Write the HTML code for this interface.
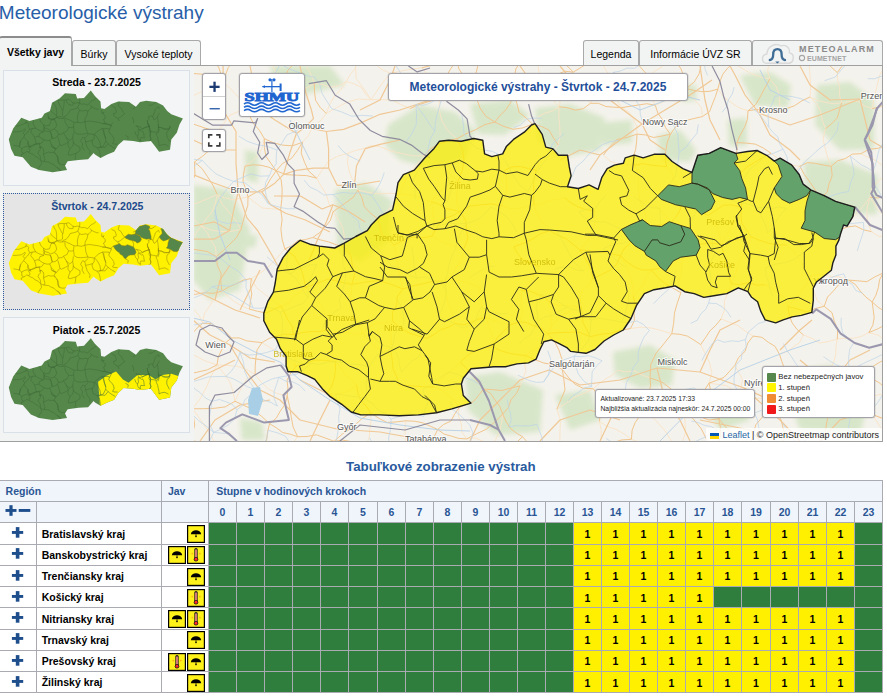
<!DOCTYPE html><html><head><meta charset="utf-8"><style>
*{margin:0;padding:0;box-sizing:border-box}
html,body{width:887px;height:697px;overflow:hidden;background:#fff;font-family:"Liberation Sans",sans-serif;color:#000}
.a{position:absolute}
h1{position:absolute;left:-1.2px;top:1.8px;font-size:19px;font-weight:normal;color:#285ea8;white-space:nowrap;line-height:22px}
.tab{position:absolute;border:1px solid #a9a9a9;border-bottom:none;border-radius:3px 3px 0 0;background:#f2f3f3;font-size:10.5px;text-align:center;white-space:nowrap}
.box{position:absolute;left:3px;width:187px;border:1px solid #d9e0e8;background:#f3f5f6}
.box .t{position:absolute;left:0;width:100%;text-align:center;font-weight:bold;font-size:10.5px;line-height:10.5px}
.lbar{position:absolute;background:#fff;border:1px solid #a2a2a8;border-radius:3px;box-shadow:0 0 0 0.6px rgba(0,0,0,0.12)}
.cell{position:absolute;}
</style></head><body>
<h1>Meteorologické výstrahy</h1>
<div class="tab" style="left:-1px;top:36px;width:73px;height:30px;border-top:2px solid #8c8c8c;z-index:3"><div class="a" style="left:0;width:100%;top:8.71px;line-height:10.5px;font-weight:bold">Všetky javy</div></div>
<div class="tab" style="left:72px;top:40px;width:44px;height:26px"><div class="a" style="left:0;width:100%;top:8.01px;line-height:10.5px;font-weight:normal">Búrky</div></div>
<div class="tab" style="left:116px;top:40px;width:85px;height:26px"><div class="a" style="left:0;width:100%;top:8.01px;line-height:10.5px;font-weight:normal">Vysoké teploty</div></div>
<div class="tab" style="left:583px;top:40px;width:56px;height:26px"><div class="a" style="left:0;width:100%;top:8.01px;line-height:10.5px;font-weight:normal">Legenda</div></div>
<div class="tab" style="left:639px;top:40px;width:113px;height:26px"><div class="a" style="left:0;width:100%;top:8.01px;line-height:10.5px;font-weight:normal">Informácie ÚVZ SR</div></div>
<div class="tab" style="left:752px;top:40px;width:131px;height:26px"></div>
<div class="a" style="left:0;top:65px;width:883px;height:1px;background:#a0a0a0;z-index:2"></div>
<div class="a" style="left:0;top:66px;width:194px;height:375px;background:#f2f3f3"></div>
<div class="a" style="left:0;top:440.5px;width:883px;height:1px;background:#a0a0a0;z-index:2"></div>
<div class="box" style="top:70px;height:116px"><div class="t" style="top:5.81px">Streda - 23.7.2025</div></div>
<div class="box" style="top:193px;height:117px;border:1px dotted #2f5aa0;background:#e5e5e5"><div class="t" style="top:6.51px;color:#204a8c;padding-left:1.6px">Štvrtok - 24.7.2025</div></div>
<div class="box" style="top:317px;height:116px"><div class="t" style="top:6.71px">Piatok - 25.7.2025</div></div>
<svg class="a" style="left:0;top:0" width="194" height="441" viewBox="0 0 194 441"><clipPath id="c0"><polygon points="8.8,139.5 13.2,128.6 21.3,117.7 29.5,121.1 41.8,117.7 44.5,113.6 50.0,110.9 52.0,102.7 59.5,98.6 65.0,93.2 75.8,93.9 77.2,98.6 84.0,97.9 90.8,90.4 94.9,95.9 100.5,101.4 101.1,108.2 104.5,108.9 111.4,104.1 118.2,101.4 129.1,102.0 135.9,106.8 140.0,102.0 146.1,100.7 156.3,102.0 163.1,105.4 167.2,110.9 171.3,114.3 182.9,118.4 179.5,124.5 176.8,132.7 171.3,139.5 170.0,149.7 159.1,151.8 155.0,146.3 150.9,140.9 140.0,142.2 133.2,140.9 123.6,140.2 118.2,145.0 114.1,151.8 107.3,154.5 100.5,157.9 95.0,154.5 93.6,153.1 88.1,159.3 78.6,159.9 67.7,161.3 65.0,165.4 67.0,170.1 52.7,172.2 39.1,170.1 30.9,166.7 22.7,157.2 14.5,155.8 11.1,149.0"/></clipPath><polygon points="8.8,139.5 13.2,128.6 21.3,117.7 29.5,121.1 41.8,117.7 44.5,113.6 50.0,110.9 52.0,102.7 59.5,98.6 65.0,93.2 75.8,93.9 77.2,98.6 84.0,97.9 90.8,90.4 94.9,95.9 100.5,101.4 101.1,108.2 104.5,108.9 111.4,104.1 118.2,101.4 129.1,102.0 135.9,106.8 140.0,102.0 146.1,100.7 156.3,102.0 163.1,105.4 167.2,110.9 171.3,114.3 182.9,118.4 179.5,124.5 176.8,132.7 171.3,139.5 170.0,149.7 159.1,151.8 155.0,146.3 150.9,140.9 140.0,142.2 133.2,140.9 123.6,140.2 118.2,145.0 114.1,151.8 107.3,154.5 100.5,157.9 95.0,154.5 93.6,153.1 88.1,159.3 78.6,159.9 67.7,161.3 65.0,165.4 67.0,170.1 52.7,172.2 39.1,170.1 30.9,166.7 22.7,157.2 14.5,155.8 11.1,149.0" fill="#56874a"/><g fill="none" stroke="#3f6b38" stroke-width="0.5" clip-path="url(#c0)"><polyline points="57.9,100.5 61.1,100.0 64.2,100.1 66.3,99.8 68.5,99.2 70.4,100.4 72.7,102.7 74.7,103.1 77.4,102.6 79.5,103.0 79.8,100.4 79.7,97.8"/><polyline points="79.5,103.0 81.4,104.2 84.6,104.0 87.6,105.2 90.1,102.3 91.8,100.9 93.6,100.1 96.0,98.2"/><polyline points="66.3,99.8 67.0,102.4 68.8,104.7 70.8,105.1 72.9,105.1 73.4,103.5 72.7,102.7"/><polyline points="64.2,100.1 64.2,103.7 63.5,106.8 62.9,110.4"/><polyline points="57.9,100.5 59.0,103.8 60.3,106.0 61.9,109.3 62.9,110.4 62.2,111.4 62.6,113.0 62.4,115.6 61.2,116.6 58.6,116.9 57.0,117.2"/><polyline points="53.5,101.7 54.2,104.3 56.0,107.1 56.6,110.4 56.7,115.6 57.0,117.2"/><polyline points="49.1,108.0 50.9,110.9 53.3,113.2 55.7,115.0 56.7,115.6"/><polyline points="57.0,117.2 59.0,118.5 62.1,118.5 65.3,118.0 67.8,119.3 70.8,120.6 72.8,121.8 75.4,122.5 77.5,122.2 81.6,122.8 84.9,121.7 89.5,121.0 92.2,121.4 98.4,122.3 103.1,123.7 105.7,123.9 112.0,125.6"/><polyline points="62.1,118.5 63.3,116.8 66.0,116.0 68.9,112.6 70.2,110.0 73.4,109.3 76.1,108.5 77.8,107.6 79.5,103.0"/><polyline points="77.8,107.6 79.6,110.3 81.6,111.0 83.8,110.7 85.9,110.3 87.9,111.0 89.0,110.2 90.9,108.2 91.6,106.7"/><polyline points="79.6,110.3 78.2,113.4 77.3,117.5 77.6,121.2 77.5,122.2"/><polyline points="87.9,111.0 87.0,115.1 85.1,118.6 84.9,121.7"/><polyline points="47.8,113.7 48.3,116.9 48.7,118.5 51.2,119.3 54.4,118.6 57.0,117.2"/><polyline points="89.7,105.0 91.6,106.7 93.5,107.9 96.6,109.2 98.6,109.3"/><polyline points="101.7,110.0 101.9,113.2 104.1,112.3 102.9,113.8 105.3,116.0 105.1,118.6 103.4,119.5 104.8,122.2 105.7,123.9"/><polyline points="111.3,105.5 112.8,106.6 114.8,107.3 115.6,109.4 116.4,111.5 115.7,113.1 113.5,113.4 113.8,115.5 115.8,117.2 117.8,118.4 120.6,117.0 124.7,113.6"/><polyline points="119.4,101.6 118.2,106.0 121.1,108.2 122.8,111.4 124.7,113.6"/><polyline points="132.8,108.8 135.6,107.4"/><polyline points="117.8,118.4 118.7,120.5 119.6,120.2"/><polyline points="133.5,123.4 133.6,120.3 132.3,117.1"/><polyline points="54.1,119.2 56.0,122.6 56.6,125.6 55.4,128.0 53.6,129.3 50.8,130.5 48.7,129.2 45.2,128.1 43.1,126.5"/><polyline points="54.1,119.2 51.2,120.0 50.3,122.8 49.5,125.3 45.9,126.0 43.4,124.6"/><polyline points="54.3,129.0 57.1,131.1 58.5,134.5 62.0,134.1 63.5,132.7 67.1,130.9 68.6,127.4 65.3,122.8 64.8,118.8"/><polyline points="68.6,127.4 71.5,127.6 73.6,127.1 73.9,122.8"/><polyline points="73.6,127.1 74.2,132.2 77.0,133.9 80.6,134.2 83.4,134.0 87.8,133.6 85.8,128.1 85.3,123.7 84.9,121.7"/><polyline points="87.8,133.6 94.2,134.5 95.7,133.1 98.7,130.4 102.4,128.5 108.9,128.7"/><polyline points="43.1,127.9 45.1,131.0 50.0,131.5 51.4,133.8 52.1,138.3"/><polyline points="57.7,136.6 59.2,141.1 59.9,144.8 61.4,145.7 65.6,143.8 68.4,141.9 66.2,137.3 63.5,132.7"/><polyline points="52.2,147.0 56.5,148.9 59.9,144.8"/><polyline points="66.2,137.3 69.8,140.5 72.7,137.9 73.4,132.9"/><polyline points="72.7,137.9 73.4,142.3 72.8,145.9 70.0,148.6 67.8,145.5 68.4,141.9"/><polyline points="70.0,148.6 68.7,152.1 68.1,154.6 70.3,155.1 75.9,153.4 80.0,150.8 79.9,147.2 77.0,145.5 74.1,143.8 73.4,142.3"/><polyline points="75.9,153.4 75.4,157.8 74.9,160.0"/><polyline points="82.7,137.2 80.5,140.7 82.7,143.8 82.0,146.6 84.3,150.4"/><polyline points="82.7,137.2 84.8,138.1 88.4,134.7"/><polyline points="84.8,138.1 85.5,141.8 87.1,147.0 90.1,151.5 89.5,154.4"/><polyline points="85.5,141.8 88.4,141.3 92.7,140.1 94.2,138.1 94.2,134.5"/><polyline points="92.7,140.1 92.0,142.2 93.5,146.0 97.1,147.7 100.7,147.2 99.9,142.1 97.8,138.3 95.6,135.3 94.2,134.5"/><polyline points="97.1,147.7 99.4,150.7 100.3,155.1 100.4,157.6"/><polyline points="100.7,147.2 105.1,147.4 108.0,143.7"/><polyline points="102.4,128.5 103.7,132.2 105.0,136.6 105.8,139.1"/><polyline points="14.1,125.8 19.0,125.8 23.3,124.1 25.5,123.2 26.1,122.1 26.2,119.9"/><polyline points="25.5,123.2 27.2,122.2 28.7,124.1 28.1,125.7 29.7,129.3 32.4,128.5 35.6,128.3 33.1,123.5 33.3,119.8"/><polyline points="35.6,128.3 38.9,130.3 41.6,131.1 43.7,131.9 44.4,128.0 43.4,124.6 40.8,122.1 39.4,118.5"/><polyline points="48.8,116.1 48.7,118.4 51.2,119.3 54.1,119.5 57.0,117.2"/><polyline points="54.1,119.5 54.0,120.6"/><polyline points="12.9,131.9 17.2,131.8 21.5,131.2 23.7,129.8 24.8,128.7 25.3,129.9 23.1,133.1 24.8,134.9"/><polyline points="29.7,129.3 27.5,132.4 24.8,134.9 23.7,137.1 21.1,140.2 19.6,144.5 19.1,146.8 19.5,146.6"/><polyline points="23.7,137.1 28.1,141.5 28.1,143.8 29.8,146.2 31.0,148.1"/><polyline points="32.4,128.5 30.7,132.2 32.8,134.7 34.5,137.2 35.6,140.7 36.2,144.1 32.5,146.0 29.8,146.2"/><polyline points="43.7,131.9 39.9,133.2 38.8,136.5 37.2,136.3 34.5,137.2"/><polyline points="38.8,136.5 42.6,139.1 44.2,139.8 47.0,140.7 49.7,140.4 52.4,138.4 55.1,138.1 57.1,136.6 58.5,134.5"/><polyline points="44.2,139.8 41.6,143.0 39.4,143.9 36.2,144.1"/><polyline points="39.4,143.9 40.1,147.9 40.9,146.6"/><polyline points="50.3,131.4 51.3,135.5 52.4,138.4"/><polyline points="49.7,140.4 51.4,144.5 54.2,147.0 55.9,148.8"/><polyline points="13.5,145.3 17.3,146.0 19.5,146.6"/><polyline points="19.5,146.6 21.7,148.5 21.9,152.5 23.6,153.3 22.6,154.3 21.0,154.7 21.7,156.4"/><polyline points="19.5,146.6 19.9,143.8 20.3,141.0"/><polyline points="21.7,148.5 24.3,147.1 26.9,146.3 29.7,147.1 32.3,145.2 34.9,144.3 36.5,143.9 40.0,143.1"/><polyline points="27.8,141.8 27.9,144.7 29.7,147.1"/><polyline points="29.7,147.1 28.6,148.2 29.8,149.4 29.9,151.1 28.3,152.1 26.7,151.3 25.1,152.9 23.6,153.3"/><polyline points="28.3,152.1 30.5,153.4 32.7,154.2 35.0,156.2 37.8,157.6 40.7,160.2 41.6,163.7 40.2,165.8 38.8,167.9 37.5,170.1"/><polyline points="39.9,147.1 40.5,149.4 39.0,150.9 38.0,153.1 39.8,155.6 40.5,157.3 40.7,160.2"/><polyline points="40.1,147.9 40.9,146.6 43.2,148.5 43.8,150.9 43.5,154.2 44.2,157.1 45.0,159.5 44.1,161.6 41.3,160.7"/><polyline points="44.1,161.6 46.8,161.9 48.4,162.0 50.7,163.4 54.1,164.8 56.5,167.3 58.8,168.7 61.2,172.5"/><polyline points="43.5,154.2 45.6,153.3 48.8,151.9 50.4,152.6 53.1,152.3 55.4,153.7 57.2,156.1 57.9,159.0 58.7,161.9 59.2,163.8"/><polyline points="55.4,153.7 54.2,151.8 55.7,149.1 55.9,148.8"/><polyline points="51.4,144.5 51.2,146.5 53.5,147.8 55.7,149.1"/><polyline points="56.3,155.1 58.1,157.5 57.8,161.4 59.2,163.8 62.5,164.7 65.7,164.4 67.4,164.5"/><polyline points="57.3,167.1 60.4,170.2 61.2,172.5"/><polyline points="102.4,123.3 105.2,123.5 108.0,124.2 110.7,124.9 113.2,122.6"/><polyline points="110.7,124.9 111.3,126.1 109.4,129.8 108.7,131.5 110.3,133.8 112.0,135.5 113.6,137.9 114.2,140.7 112.5,143.4 114.2,144.0 117.6,144.2"/><polyline points="108.9,128.7 109.4,129.8"/><polyline points="103.6,129.2 104.2,134.5 105.8,139.1 105.7,141.3 108.0,143.7 110.2,145.5 113.1,147.3 115.4,148.6"/><polyline points="99.0,147.7 103.3,146.2 105.7,141.3"/><polyline points="125.5,135.4 128.3,137.0 127.7,139.7"/><polyline points="136.2,125.7 140.6,127.0 142.2,128.8 144.0,128.3 146.9,126.8 149.2,126.3 150.1,125.7"/><polyline points="147.4,120.2 147.7,123.5 149.2,126.3 150.7,131.3 149.9,135.7 151.0,138.5 149.8,142.3"/><polyline points="138.2,129.7 139.9,130.3 141.5,131.5 142.7,131.0 143.7,133.2 144.2,136.6 144.7,137.7 140.8,137.5 140.2,139.2 140.7,140.9 139.0,140.2 137.9,138.5 137.4,136.3 138.6,134.1 138.1,131.9 138.2,129.7"/><polyline points="134.7,131.2 135.7,134.1 137.5,136.2"/><polyline points="157.4,107.4 155.4,109.5 154.5,112.2 152.8,116.5 153.7,119.3 154.8,119.8"/><polyline points="157.4,107.4 158.6,106.9 159.4,109.1"/><polyline points="151.2,115.9 152.2,116.5 152.8,116.5"/><polyline points="154.8,119.8 157.4,116.7 159.5,112.9"/><polyline points="157.4,116.7 157.7,118.9 158.1,121.1 158.4,124.4 158.2,127.1 159.2,129.9 157.9,133.5"/><polyline points="158.2,127.1 161.6,127.8 165.6,129.0 168.4,129.1 169.7,127.4 170.4,125.8"/><polyline points="148.2,116.8 149.2,118.5 147.3,120.7 147.6,123.4 149.1,126.2 149.6,128.4 148.9,130.6 150.5,133.2"/><polyline points="149.1,126.2 146.2,127.2 144.4,127.7 142.1,129.2 139.2,129.7 137.7,126.9 135.5,125.6"/><polyline points="148.2,116.8 151.2,115.9"/><polyline points="148.5,105.4 152.0,105.0 155.9,102.2"/><polyline points="148.1,123.1 148.8,125.7 149.1,127.9 150.7,131.4 153.9,131.9 156.1,132.4 157.9,131.6 158.6,127.4 158.4,124.4"/><polyline points="150.7,131.4 150.1,136.1 151.0,139.2 149.6,140.5 148.7,141.7"/><polyline points="158.6,127.4 161.3,127.5 163.9,129.3 166.2,129.3 168.9,129.0 169.9,127.7 169.5,126.0"/><polyline points="169.9,127.7 169.3,129.8 167.0,131.5 166.8,134.1 166.8,136.2 168.1,138.9 169.4,141.5"/><polyline points="156.1,132.4 156.4,134.6 157.7,137.3 158.1,139.9 159.0,143.4 159.0,146.0 161.7,144.8 164.9,144.4 168.5,146.3"/></g><clipPath id="c123"><polygon points="8.8,263.0 13.2,252.1 21.3,241.2 29.5,244.6 41.8,241.2 44.5,237.1 50.0,234.4 52.0,226.2 59.5,222.1 65.0,216.7 75.8,217.4 77.2,222.1 84.0,221.4 90.8,213.9 94.9,219.4 100.5,224.9 101.1,231.7 104.5,232.4 111.4,227.6 118.2,224.9 129.1,225.5 135.9,230.3 140.0,225.5 146.1,224.2 156.3,225.5 163.1,228.9 167.2,234.4 171.3,237.8 182.9,241.9 179.5,248.0 176.8,256.2 171.3,263.0 170.0,273.2 159.1,275.3 155.0,269.8 150.9,264.4 140.0,265.7 133.2,264.4 123.6,263.7 118.2,268.5 114.1,275.3 107.3,278.0 100.5,281.4 95.0,278.0 93.6,276.6 88.1,282.8 78.6,283.4 67.7,284.8 65.0,288.9 67.0,293.6 52.7,295.7 39.1,293.6 30.9,290.2 22.7,280.7 14.5,279.3 11.1,272.5"/></clipPath><polygon points="8.8,263.0 13.2,252.1 21.3,241.2 29.5,244.6 41.8,241.2 44.5,237.1 50.0,234.4 52.0,226.2 59.5,222.1 65.0,216.7 75.8,217.4 77.2,222.1 84.0,221.4 90.8,213.9 94.9,219.4 100.5,224.9 101.1,231.7 104.5,232.4 111.4,227.6 118.2,224.9 129.1,225.5 135.9,230.3 140.0,225.5 146.1,224.2 156.3,225.5 163.1,228.9 167.2,234.4 171.3,237.8 182.9,241.9 179.5,248.0 176.8,256.2 171.3,263.0 170.0,273.2 159.1,275.3 155.0,269.8 150.9,264.4 140.0,265.7 133.2,264.4 123.6,263.7 118.2,268.5 114.1,275.3 107.3,278.0 100.5,281.4 95.0,278.0 93.6,276.6 88.1,282.8 78.6,283.4 67.7,284.8 65.0,288.9 67.0,293.6 52.7,295.7 39.1,293.6 30.9,290.2 22.7,280.7 14.5,279.3 11.1,272.5" fill="#fff200"/><polygon points="138.1,226.2 141.5,225.9 145.2,224.4 149.5,226.2 149.8,227.9 148.5,228.9 149.9,231.2 150.2,233.3 151.0,236.1 151.2,239.4 148.9,238.8 146.6,239.2 143.8,238.5 141.1,237.3 139.6,235.6 136.9,234.4 135.2,234.0 135.6,231.0" fill="#56874a" clip-path="url(#c123)"/><polygon points="124.7,237.1 128.3,234.2 131.4,234.8 135.2,234.0 136.9,234.4 140.1,236.2 141.4,239.5 140.1,241.7 137.1,243.1 135.5,241.4 132.3,240.6 129.7,239.9 125.7,238.2" fill="#56874a" clip-path="url(#c123)"/><polygon points="113.2,246.1 116.1,244.9 119.6,243.7 121.7,245.5 125.1,245.9 127.4,244.7 130.7,245.9 133.5,246.9 135.5,250.3 136.0,252.5 134.7,254.7 130.2,255.0 127.9,256.0 125.5,258.9 123.8,257.5 122.8,255.8 120.0,253.9 119.5,252.8 116.8,251.0 115.2,249.2" fill="#56874a" clip-path="url(#c123)"/><polygon points="160.6,228.9 162.4,228.1 165.6,230.1 167.5,232.9 168.3,235.6 170.3,237.3 169.0,238.9 166.6,239.9 163.6,240.9 161.4,239.8 159.9,238.1 159.5,236.4 162.2,233.3 161.6,230.0" fill="#56874a" clip-path="url(#c123)"/><polygon points="170.3,237.3 174.2,239.1 177.5,240.8 183.1,242.6 182.3,245.3 180.3,247.9 178.4,250.6 176.6,251.7 173.1,251.3 170.4,249.3 166.4,248.1 167.8,246.0 168.0,243.2 168.8,240.5" fill="#56874a" clip-path="url(#c123)"/><g fill="none" stroke="#8a8012" stroke-width="0.5" clip-path="url(#c123)"><polyline points="57.9,224.0 61.1,223.5 64.2,223.6 66.3,223.3 68.5,222.7 70.4,223.9 72.7,226.2 74.7,226.6 77.4,226.1 79.5,226.5 79.8,223.9 79.7,221.3"/><polyline points="79.5,226.5 81.4,227.7 84.6,227.5 87.6,228.7 90.1,225.8 91.8,224.4 93.6,223.6 96.0,221.7"/><polyline points="66.3,223.3 67.0,225.9 68.8,228.2 70.8,228.6 72.9,228.6 73.4,227.0 72.7,226.2"/><polyline points="64.2,223.6 64.2,227.2 63.5,230.3 62.9,233.9"/><polyline points="57.9,224.0 59.0,227.3 60.3,229.5 61.9,232.8 62.9,233.9 62.2,234.9 62.6,236.5 62.4,239.1 61.2,240.1 58.6,240.4 57.0,240.7"/><polyline points="53.5,225.2 54.2,227.8 56.0,230.6 56.6,233.9 56.7,239.1 57.0,240.7"/><polyline points="49.1,231.5 50.9,234.4 53.3,236.7 55.7,238.5 56.7,239.1"/><polyline points="57.0,240.7 59.0,242.0 62.1,242.0 65.3,241.5 67.8,242.8 70.8,244.1 72.8,245.3 75.4,246.0 77.5,245.7 81.6,246.3 84.9,245.2 89.5,244.5 92.2,244.9 98.4,245.8 103.1,247.2 105.7,247.4 112.0,249.1"/><polyline points="62.1,242.0 63.3,240.3 66.0,239.5 68.9,236.1 70.2,233.5 73.4,232.8 76.1,232.0 77.8,231.1 79.5,226.5"/><polyline points="77.8,231.1 79.6,233.8 81.6,234.5 83.8,234.2 85.9,233.8 87.9,234.5 89.0,233.7 90.9,231.7 91.6,230.2"/><polyline points="79.6,233.8 78.2,236.9 77.3,241.0 77.6,244.7 77.5,245.7"/><polyline points="87.9,234.5 87.0,238.6 85.1,242.1 84.9,245.2"/><polyline points="47.8,237.2 48.3,240.4 48.7,242.0 51.2,242.8 54.4,242.1 57.0,240.7"/><polyline points="89.7,228.5 91.6,230.2 93.5,231.4 96.6,232.7 98.6,232.8"/><polyline points="101.7,233.5 101.9,236.7 104.1,235.8 102.9,237.3 105.3,239.5 105.1,242.1 103.4,243.0 104.8,245.7 105.7,247.4"/><polyline points="111.3,229.0 112.8,230.1 114.8,230.8 115.6,232.9 116.4,235.0 115.7,236.6 113.5,236.9 113.8,239.0 115.8,240.7 117.8,241.9 120.6,240.5 124.7,237.1"/><polyline points="119.4,225.1 118.2,229.5 121.1,231.7 122.8,234.9 124.7,237.1"/><polyline points="132.8,232.3 135.6,230.9"/><polyline points="117.8,241.9 118.7,244.0 119.6,243.7"/><polyline points="133.5,246.9 133.6,243.8 132.3,240.6"/><polyline points="54.1,242.7 56.0,246.1 56.6,249.1 55.4,251.5 53.6,252.8 50.8,254.0 48.7,252.7 45.2,251.6 43.1,250.0"/><polyline points="54.1,242.7 51.2,243.5 50.3,246.3 49.5,248.8 45.9,249.5 43.4,248.1"/><polyline points="54.3,252.5 57.1,254.6 58.5,258.0 62.0,257.6 63.5,256.2 67.1,254.4 68.6,250.9 65.3,246.3 64.8,242.3"/><polyline points="68.6,250.9 71.5,251.1 73.6,250.6 73.9,246.3"/><polyline points="73.6,250.6 74.2,255.7 77.0,257.4 80.6,257.7 83.4,257.5 87.8,257.1 85.8,251.6 85.3,247.2 84.9,245.2"/><polyline points="87.8,257.1 94.2,258.0 95.7,256.6 98.7,253.9 102.4,252.0 108.9,252.2"/><polyline points="43.1,251.4 45.1,254.5 50.0,255.0 51.4,257.3 52.1,261.8"/><polyline points="57.7,260.1 59.2,264.6 59.9,268.3 61.4,269.2 65.6,267.3 68.4,265.4 66.2,260.8 63.5,256.2"/><polyline points="52.2,270.5 56.5,272.4 59.9,268.3"/><polyline points="66.2,260.8 69.8,264.0 72.7,261.4 73.4,256.4"/><polyline points="72.7,261.4 73.4,265.8 72.8,269.4 70.0,272.1 67.8,269.0 68.4,265.4"/><polyline points="70.0,272.1 68.7,275.6 68.1,278.1 70.3,278.6 75.9,276.9 80.0,274.3 79.9,270.7 77.0,269.0 74.1,267.3 73.4,265.8"/><polyline points="75.9,276.9 75.4,281.3 74.9,283.5"/><polyline points="82.7,260.7 80.5,264.2 82.7,267.3 82.0,270.1 84.3,273.9"/><polyline points="82.7,260.7 84.8,261.6 88.4,258.2"/><polyline points="84.8,261.6 85.5,265.3 87.1,270.5 90.1,275.0 89.5,277.9"/><polyline points="85.5,265.3 88.4,264.8 92.7,263.6 94.2,261.6 94.2,258.0"/><polyline points="92.7,263.6 92.0,265.7 93.5,269.5 97.1,271.2 100.7,270.7 99.9,265.6 97.8,261.8 95.6,258.8 94.2,258.0"/><polyline points="97.1,271.2 99.4,274.2 100.3,278.6 100.4,281.1"/><polyline points="100.7,270.7 105.1,270.9 108.0,267.2"/><polyline points="102.4,252.0 103.7,255.7 105.0,260.1 105.8,262.6"/><polyline points="14.1,249.3 19.0,249.3 23.3,247.6 25.5,246.7 26.1,245.6 26.2,243.4"/><polyline points="25.5,246.7 27.2,245.7 28.7,247.6 28.1,249.2 29.7,252.8 32.4,252.0 35.6,251.8 33.1,247.0 33.3,243.3"/><polyline points="35.6,251.8 38.9,253.8 41.6,254.6 43.7,255.4 44.4,251.5 43.4,248.1 40.8,245.6 39.4,242.0"/><polyline points="48.8,239.6 48.7,241.9 51.2,242.8 54.1,243.0 57.0,240.7"/><polyline points="54.1,243.0 54.0,244.1"/><polyline points="12.9,255.4 17.2,255.3 21.5,254.7 23.7,253.3 24.8,252.2 25.3,253.4 23.1,256.6 24.8,258.4"/><polyline points="29.7,252.8 27.5,255.9 24.8,258.4 23.7,260.6 21.1,263.7 19.6,268.0 19.1,270.3 19.5,270.1"/><polyline points="23.7,260.6 28.1,265.0 28.1,267.3 29.8,269.7 31.0,271.6"/><polyline points="32.4,252.0 30.7,255.7 32.8,258.2 34.5,260.7 35.6,264.2 36.2,267.6 32.5,269.5 29.8,269.7"/><polyline points="43.7,255.4 39.9,256.7 38.8,260.0 37.2,259.8 34.5,260.7"/><polyline points="38.8,260.0 42.6,262.6 44.2,263.3 47.0,264.2 49.7,263.9 52.4,261.9 55.1,261.6 57.1,260.1 58.5,258.0"/><polyline points="44.2,263.3 41.6,266.5 39.4,267.4 36.2,267.6"/><polyline points="39.4,267.4 40.1,271.4 40.9,270.1"/><polyline points="50.3,254.9 51.3,259.0 52.4,261.9"/><polyline points="49.7,263.9 51.4,268.0 54.2,270.5 55.9,272.3"/><polyline points="13.5,268.8 17.3,269.5 19.5,270.1"/><polyline points="19.5,270.1 21.7,272.0 21.9,276.0 23.6,276.8 22.6,277.8 21.0,278.2 21.7,279.9"/><polyline points="19.5,270.1 19.9,267.3 20.3,264.5"/><polyline points="21.7,272.0 24.3,270.6 26.9,269.8 29.7,270.6 32.3,268.7 34.9,267.8 36.5,267.4 40.0,266.6"/><polyline points="27.8,265.3 27.9,268.2 29.7,270.6"/><polyline points="29.7,270.6 28.6,271.7 29.8,272.9 29.9,274.6 28.3,275.6 26.7,274.8 25.1,276.4 23.6,276.8"/><polyline points="28.3,275.6 30.5,276.9 32.7,277.7 35.0,279.7 37.8,281.1 40.7,283.7 41.6,287.2 40.2,289.3 38.8,291.4 37.5,293.6"/><polyline points="39.9,270.6 40.5,272.9 39.0,274.4 38.0,276.6 39.8,279.1 40.5,280.8 40.7,283.7"/><polyline points="40.1,271.4 40.9,270.1 43.2,272.0 43.8,274.4 43.5,277.7 44.2,280.6 45.0,283.0 44.1,285.1 41.3,284.2"/><polyline points="44.1,285.1 46.8,285.4 48.4,285.5 50.7,286.9 54.1,288.3 56.5,290.8 58.8,292.2 61.2,296.0"/><polyline points="43.5,277.7 45.6,276.8 48.8,275.4 50.4,276.1 53.1,275.8 55.4,277.2 57.2,279.6 57.9,282.5 58.7,285.4 59.2,287.3"/><polyline points="55.4,277.2 54.2,275.3 55.7,272.6 55.9,272.3"/><polyline points="51.4,268.0 51.2,270.0 53.5,271.3 55.7,272.6"/><polyline points="56.3,278.6 58.1,281.0 57.8,284.9 59.2,287.3 62.5,288.2 65.7,287.9 67.4,288.0"/><polyline points="57.3,290.6 60.4,293.7 61.2,296.0"/><polyline points="102.4,246.8 105.2,247.0 108.0,247.7 110.7,248.4 113.2,246.1"/><polyline points="110.7,248.4 111.3,249.6 109.4,253.3 108.7,255.0 110.3,257.3 112.0,259.0 113.6,261.4 114.2,264.2 112.5,266.9 114.2,267.5 117.6,267.7"/><polyline points="108.9,252.2 109.4,253.3"/><polyline points="103.6,252.7 104.2,258.0 105.8,262.6 105.7,264.8 108.0,267.2 110.2,269.0 113.1,270.8 115.4,272.1"/><polyline points="99.0,271.2 103.3,269.7 105.7,264.8"/><polyline points="125.5,258.9 128.3,260.5 127.7,263.2"/><polyline points="136.2,249.2 140.6,250.5 142.2,252.3 144.0,251.8 146.9,250.3 149.2,249.8 150.1,249.2"/><polyline points="147.4,243.7 147.7,247.0 149.2,249.8 150.7,254.8 149.9,259.2 151.0,262.0 149.8,265.8"/><polyline points="138.2,253.2 139.9,253.8 141.5,255.0 142.7,254.5 143.7,256.7 144.2,260.1 144.7,261.2 140.8,261.0 140.2,262.7 140.7,264.4 139.0,263.7 137.9,262.0 137.4,259.8 138.6,257.6 138.1,255.4 138.2,253.2"/><polyline points="134.7,254.7 135.7,257.6 137.5,259.7"/><polyline points="157.4,230.9 155.4,233.0 154.5,235.7 152.8,240.0 153.7,242.8 154.8,243.3"/><polyline points="157.4,230.9 158.6,230.4 159.4,232.6"/><polyline points="151.2,239.4 152.2,240.0 152.8,240.0"/><polyline points="154.8,243.3 157.4,240.2 159.5,236.4"/><polyline points="157.4,240.2 157.7,242.4 158.1,244.6 158.4,247.9 158.2,250.6 159.2,253.4 157.9,257.0"/><polyline points="158.2,250.6 161.6,251.3 165.6,252.5 168.4,252.6 169.7,250.9 170.4,249.3"/><polyline points="148.2,240.3 149.2,242.0 147.3,244.2 147.6,246.9 149.1,249.7 149.6,251.9 148.9,254.1 150.5,256.7"/><polyline points="149.1,249.7 146.2,250.7 144.4,251.2 142.1,252.7 139.2,253.2 137.7,250.4 135.5,249.1"/><polyline points="148.2,240.3 151.2,239.4"/><polyline points="148.5,228.9 152.0,228.5 155.9,225.7"/><polyline points="148.1,246.6 148.8,249.2 149.1,251.4 150.7,254.9 153.9,255.4 156.1,255.9 157.9,255.1 158.6,250.9 158.4,247.9"/><polyline points="150.7,254.9 150.1,259.6 151.0,262.7 149.6,264.0 148.7,265.2"/><polyline points="158.6,250.9 161.3,251.0 163.9,252.8 166.2,252.8 168.9,252.5 169.9,251.2 169.5,249.5"/><polyline points="169.9,251.2 169.3,253.3 167.0,255.0 166.8,257.6 166.8,259.7 168.1,262.4 169.4,265.0"/><polyline points="156.1,255.9 156.4,258.1 157.7,260.8 158.1,263.4 159.0,266.9 159.0,269.5 161.7,268.3 164.9,267.9 168.5,269.8"/><polygon points="138.1,226.2 141.5,225.9 145.2,224.4 149.5,226.2 149.8,227.9 148.5,228.9 149.9,231.2 150.2,233.3 151.0,236.1 151.2,239.4 148.9,238.8 146.6,239.2 143.8,238.5 141.1,237.3 139.6,235.6 136.9,234.4 135.2,234.0 135.6,231.0"/><polygon points="124.7,237.1 128.3,234.2 131.4,234.8 135.2,234.0 136.9,234.4 140.1,236.2 141.4,239.5 140.1,241.7 137.1,243.1 135.5,241.4 132.3,240.6 129.7,239.9 125.7,238.2"/><polygon points="113.2,246.1 116.1,244.9 119.6,243.7 121.7,245.5 125.1,245.9 127.4,244.7 130.7,245.9 133.5,246.9 135.5,250.3 136.0,252.5 134.7,254.7 130.2,255.0 127.9,256.0 125.5,258.9 123.8,257.5 122.8,255.8 120.0,253.9 119.5,252.8 116.8,251.0 115.2,249.2"/><polygon points="160.6,228.9 162.4,228.1 165.6,230.1 167.5,232.9 168.3,235.6 170.3,237.3 169.0,238.9 166.6,239.9 163.6,240.9 161.4,239.8 159.9,238.1 159.5,236.4 162.2,233.3 161.6,230.0"/><polygon points="170.3,237.3 174.2,239.1 177.5,240.8 183.1,242.6 182.3,245.3 180.3,247.9 178.4,250.6 176.6,251.7 173.1,251.3 170.4,249.3 166.4,248.1 167.8,246.0 168.0,243.2 168.8,240.5"/></g><clipPath id="c247"><polygon points="8.8,387.4 13.2,376.5 21.3,365.6 29.5,369.0 41.8,365.6 44.5,361.5 50.0,358.8 52.0,350.6 59.5,346.5 65.0,341.1 75.8,341.8 77.2,346.5 84.0,345.8 90.8,338.3 94.9,343.8 100.5,349.3 101.1,356.1 104.5,356.8 111.4,352.0 118.2,349.3 129.1,349.9 135.9,354.7 140.0,349.9 146.1,348.6 156.3,349.9 163.1,353.3 167.2,358.8 171.3,362.2 182.9,366.3 179.5,372.4 176.8,380.6 171.3,387.4 170.0,397.6 159.1,399.7 155.0,394.2 150.9,388.8 140.0,390.1 133.2,388.8 123.6,388.1 118.2,392.9 114.1,399.7 107.3,402.4 100.5,405.8 95.0,402.4 93.6,401.0 88.1,407.2 78.6,407.8 67.7,409.2 65.0,413.3 67.0,418.0 52.7,420.1 39.1,418.0 30.9,414.6 22.7,405.1 14.5,403.7 11.1,396.9"/></clipPath><polygon points="8.8,387.4 13.2,376.5 21.3,365.6 29.5,369.0 41.8,365.6 44.5,361.5 50.0,358.8 52.0,350.6 59.5,346.5 65.0,341.1 75.8,341.8 77.2,346.5 84.0,345.8 90.8,338.3 94.9,343.8 100.5,349.3 101.1,356.1 104.5,356.8 111.4,352.0 118.2,349.3 129.1,349.9 135.9,354.7 140.0,349.9 146.1,348.6 156.3,349.9 163.1,353.3 167.2,358.8 171.3,362.2 182.9,366.3 179.5,372.4 176.8,380.6 171.3,387.4 170.0,397.6 159.1,399.7 155.0,394.2 150.9,388.8 140.0,390.1 133.2,388.8 123.6,388.1 118.2,392.9 114.1,399.7 107.3,402.4 100.5,405.8 95.0,402.4 93.6,401.0 88.1,407.2 78.6,407.8 67.7,409.2 65.0,413.3 67.0,418.0 52.7,420.1 39.1,418.0 30.9,414.6 22.7,405.1 14.5,403.7 11.1,396.9" fill="#56874a"/><polygon points="101.5,430.0 99.2,395.2 98.1,381.7 106.0,376.0 116.1,371.5 122.9,379.4 128.5,382.8 137.5,374.9 148.8,374.9 155.6,379.4 162.3,374.9 171.4,373.8 178.1,376.0 194.0,376.0 194.0,500.0" fill="#fff200" clip-path="url(#c247)"/><g fill="none" stroke="#3f6b38" stroke-width="0.5" clip-path="url(#c247)"><polyline points="57.9,348.4 61.1,347.9 64.2,348.0 66.3,347.7 68.5,347.1 70.4,348.3 72.7,350.6 74.7,351.0 77.4,350.5 79.5,350.9 79.8,348.3 79.7,345.7"/><polyline points="79.5,350.9 81.4,352.1 84.6,351.9 87.6,353.1 90.1,350.2 91.8,348.8 93.6,348.0 96.0,346.1"/><polyline points="66.3,347.7 67.0,350.3 68.8,352.6 70.8,353.0 72.9,353.0 73.4,351.4 72.7,350.6"/><polyline points="64.2,348.0 64.2,351.6 63.5,354.7 62.9,358.3"/><polyline points="57.9,348.4 59.0,351.7 60.3,353.9 61.9,357.2 62.9,358.3 62.2,359.3 62.6,360.9 62.4,363.5 61.2,364.5 58.6,364.8 57.0,365.1"/><polyline points="53.5,349.6 54.2,352.2 56.0,355.0 56.6,358.3 56.7,363.5 57.0,365.1"/><polyline points="49.1,355.9 50.9,358.8 53.3,361.1 55.7,362.9 56.7,363.5"/><polyline points="57.0,365.1 59.0,366.4 62.1,366.4 65.3,365.9 67.8,367.2 70.8,368.5 72.8,369.7 75.4,370.4 77.5,370.1 81.6,370.7 84.9,369.6 89.5,368.9 92.2,369.3 98.4,370.2 103.1,371.6 105.7,371.8 112.0,373.5"/><polyline points="62.1,366.4 63.3,364.7 66.0,363.9 68.9,360.5 70.2,357.9 73.4,357.2 76.1,356.4 77.8,355.5 79.5,350.9"/><polyline points="77.8,355.5 79.6,358.2 81.6,358.9 83.8,358.6 85.9,358.2 87.9,358.9 89.0,358.1 90.9,356.1 91.6,354.6"/><polyline points="79.6,358.2 78.2,361.3 77.3,365.4 77.6,369.1 77.5,370.1"/><polyline points="87.9,358.9 87.0,363.0 85.1,366.5 84.9,369.6"/><polyline points="47.8,361.6 48.3,364.8 48.7,366.4 51.2,367.2 54.4,366.5 57.0,365.1"/><polyline points="89.7,352.9 91.6,354.6 93.5,355.8 96.6,357.1 98.6,357.2"/><polyline points="101.7,357.9 101.9,361.1 104.1,360.2 102.9,361.7 105.3,363.9 105.1,366.5 103.4,367.4 104.8,370.1 105.7,371.8"/><polyline points="111.3,353.4 112.8,354.5 114.8,355.2 115.6,357.3 116.4,359.4 115.7,361.0 113.5,361.3 113.8,363.4 115.8,365.1 117.8,366.3 120.6,364.9 124.7,361.5"/><polyline points="119.4,349.5 118.2,353.9 121.1,356.1 122.8,359.3 124.7,361.5"/><polyline points="132.8,356.7 135.6,355.3"/><polyline points="117.8,366.3 118.7,368.4 119.6,368.1"/><polyline points="133.5,371.3 133.6,368.2 132.3,365.0"/><polyline points="54.1,367.1 56.0,370.5 56.6,373.5 55.4,375.9 53.6,377.2 50.8,378.4 48.7,377.1 45.2,376.0 43.1,374.4"/><polyline points="54.1,367.1 51.2,367.9 50.3,370.7 49.5,373.2 45.9,373.9 43.4,372.5"/><polyline points="54.3,376.9 57.1,379.0 58.5,382.4 62.0,382.0 63.5,380.6 67.1,378.8 68.6,375.3 65.3,370.7 64.8,366.7"/><polyline points="68.6,375.3 71.5,375.5 73.6,375.0 73.9,370.7"/><polyline points="73.6,375.0 74.2,380.1 77.0,381.8 80.6,382.1 83.4,381.9 87.8,381.5 85.8,376.0 85.3,371.6 84.9,369.6"/><polyline points="87.8,381.5 94.2,382.4 95.7,381.0 98.7,378.3 102.4,376.4 108.9,376.6"/><polyline points="43.1,375.8 45.1,378.9 50.0,379.4 51.4,381.7 52.1,386.2"/><polyline points="57.7,384.5 59.2,389.0 59.9,392.7 61.4,393.6 65.6,391.7 68.4,389.8 66.2,385.2 63.5,380.6"/><polyline points="52.2,394.9 56.5,396.8 59.9,392.7"/><polyline points="66.2,385.2 69.8,388.4 72.7,385.8 73.4,380.8"/><polyline points="72.7,385.8 73.4,390.2 72.8,393.8 70.0,396.5 67.8,393.4 68.4,389.8"/><polyline points="70.0,396.5 68.7,400.0 68.1,402.5 70.3,403.0 75.9,401.3 80.0,398.7 79.9,395.1 77.0,393.4 74.1,391.7 73.4,390.2"/><polyline points="75.9,401.3 75.4,405.7 74.9,407.9"/><polyline points="82.7,385.1 80.5,388.6 82.7,391.7 82.0,394.5 84.3,398.3"/><polyline points="82.7,385.1 84.8,386.0 88.4,382.6"/><polyline points="84.8,386.0 85.5,389.7 87.1,394.9 90.1,399.4 89.5,402.3"/><polyline points="85.5,389.7 88.4,389.2 92.7,388.0 94.2,386.0 94.2,382.4"/><polyline points="92.7,388.0 92.0,390.1 93.5,393.9 97.1,395.6 100.7,395.1 99.9,390.0 97.8,386.2 95.6,383.2 94.2,382.4"/><polyline points="97.1,395.6 99.4,398.6 100.3,403.0 100.4,405.5"/><polyline points="100.7,395.1 105.1,395.3 108.0,391.6"/><polyline points="102.4,376.4 103.7,380.1 105.0,384.5 105.8,387.0"/><polyline points="14.1,373.7 19.0,373.7 23.3,372.0 25.5,371.1 26.1,370.0 26.2,367.8"/><polyline points="25.5,371.1 27.2,370.1 28.7,372.0 28.1,373.6 29.7,377.2 32.4,376.4 35.6,376.2 33.1,371.4 33.3,367.7"/><polyline points="35.6,376.2 38.9,378.2 41.6,379.0 43.7,379.8 44.4,375.9 43.4,372.5 40.8,370.0 39.4,366.4"/><polyline points="48.8,364.0 48.7,366.3 51.2,367.2 54.1,367.4 57.0,365.1"/><polyline points="54.1,367.4 54.0,368.5"/><polyline points="12.9,379.8 17.2,379.7 21.5,379.1 23.7,377.7 24.8,376.6 25.3,377.8 23.1,381.0 24.8,382.8"/><polyline points="29.7,377.2 27.5,380.3 24.8,382.8 23.7,385.0 21.1,388.1 19.6,392.4 19.1,394.7 19.5,394.5"/><polyline points="23.7,385.0 28.1,389.4 28.1,391.7 29.8,394.1 31.0,396.0"/><polyline points="32.4,376.4 30.7,380.1 32.8,382.6 34.5,385.1 35.6,388.6 36.2,392.0 32.5,393.9 29.8,394.1"/><polyline points="43.7,379.8 39.9,381.1 38.8,384.4 37.2,384.2 34.5,385.1"/><polyline points="38.8,384.4 42.6,387.0 44.2,387.7 47.0,388.6 49.7,388.3 52.4,386.3 55.1,386.0 57.1,384.5 58.5,382.4"/><polyline points="44.2,387.7 41.6,390.9 39.4,391.8 36.2,392.0"/><polyline points="39.4,391.8 40.1,395.8 40.9,394.5"/><polyline points="50.3,379.3 51.3,383.4 52.4,386.3"/><polyline points="49.7,388.3 51.4,392.4 54.2,394.9 55.9,396.7"/><polyline points="13.5,393.2 17.3,393.9 19.5,394.5"/><polyline points="19.5,394.5 21.7,396.4 21.9,400.4 23.6,401.2 22.6,402.2 21.0,402.6 21.7,404.3"/><polyline points="19.5,394.5 19.9,391.7 20.3,388.9"/><polyline points="21.7,396.4 24.3,395.0 26.9,394.2 29.7,395.0 32.3,393.1 34.9,392.2 36.5,391.8 40.0,391.0"/><polyline points="27.8,389.7 27.9,392.6 29.7,395.0"/><polyline points="29.7,395.0 28.6,396.1 29.8,397.3 29.9,399.0 28.3,400.0 26.7,399.2 25.1,400.8 23.6,401.2"/><polyline points="28.3,400.0 30.5,401.3 32.7,402.1 35.0,404.1 37.8,405.5 40.7,408.1 41.6,411.6 40.2,413.7 38.8,415.8 37.5,418.0"/><polyline points="39.9,395.0 40.5,397.3 39.0,398.8 38.0,401.0 39.8,403.5 40.5,405.2 40.7,408.1"/><polyline points="40.1,395.8 40.9,394.5 43.2,396.4 43.8,398.8 43.5,402.1 44.2,405.0 45.0,407.4 44.1,409.5 41.3,408.6"/><polyline points="44.1,409.5 46.8,409.8 48.4,409.9 50.7,411.3 54.1,412.7 56.5,415.2 58.8,416.6 61.2,420.4"/><polyline points="43.5,402.1 45.6,401.2 48.8,399.8 50.4,400.5 53.1,400.2 55.4,401.6 57.2,404.0 57.9,406.9 58.7,409.8 59.2,411.7"/><polyline points="55.4,401.6 54.2,399.7 55.7,397.0 55.9,396.7"/><polyline points="51.4,392.4 51.2,394.4 53.5,395.7 55.7,397.0"/><polyline points="56.3,403.0 58.1,405.4 57.8,409.3 59.2,411.7 62.5,412.6 65.7,412.3 67.4,412.4"/><polyline points="57.3,415.0 60.4,418.1 61.2,420.4"/><polyline points="102.4,371.2 105.2,371.4 108.0,372.1 110.7,372.8 113.2,370.5"/><polyline points="110.7,372.8 111.3,374.0 109.4,377.7 108.7,379.4 110.3,381.7 112.0,383.4 113.6,385.8 114.2,388.6 112.5,391.3 114.2,391.9 117.6,392.1"/><polyline points="108.9,376.6 109.4,377.7"/><polyline points="103.6,377.1 104.2,382.4 105.8,387.0 105.7,389.2 108.0,391.6 110.2,393.4 113.1,395.2 115.4,396.5"/><polyline points="99.0,395.6 103.3,394.1 105.7,389.2"/><polyline points="125.5,383.3 128.3,384.9 127.7,387.6"/><polyline points="136.2,373.6 140.6,374.9 142.2,376.7 144.0,376.2 146.9,374.7 149.2,374.2 150.1,373.6"/><polyline points="147.4,368.1 147.7,371.4 149.2,374.2 150.7,379.2 149.9,383.6 151.0,386.4 149.8,390.2"/><polyline points="138.2,377.6 139.9,378.2 141.5,379.4 142.7,378.9 143.7,381.1 144.2,384.5 144.7,385.6 140.8,385.4 140.2,387.1 140.7,388.8 139.0,388.1 137.9,386.4 137.4,384.2 138.6,382.0 138.1,379.8 138.2,377.6"/><polyline points="134.7,379.1 135.7,382.0 137.5,384.1"/><polyline points="157.4,355.3 155.4,357.4 154.5,360.1 152.8,364.4 153.7,367.2 154.8,367.7"/><polyline points="157.4,355.3 158.6,354.8 159.4,357.0"/><polyline points="151.2,363.8 152.2,364.4 152.8,364.4"/><polyline points="154.8,367.7 157.4,364.6 159.5,360.8"/><polyline points="157.4,364.6 157.7,366.8 158.1,369.0 158.4,372.3 158.2,375.0 159.2,377.8 157.9,381.4"/><polyline points="158.2,375.0 161.6,375.7 165.6,376.9 168.4,377.0 169.7,375.3 170.4,373.7"/><polyline points="148.2,364.7 149.2,366.4 147.3,368.6 147.6,371.3 149.1,374.1 149.6,376.3 148.9,378.5 150.5,381.1"/><polyline points="149.1,374.1 146.2,375.1 144.4,375.6 142.1,377.1 139.2,377.6 137.7,374.8 135.5,373.5"/><polyline points="148.2,364.7 151.2,363.8"/><polyline points="148.5,353.3 152.0,352.9 155.9,350.1"/><polyline points="148.1,371.0 148.8,373.6 149.1,375.8 150.7,379.3 153.9,379.8 156.1,380.3 157.9,379.5 158.6,375.3 158.4,372.3"/><polyline points="150.7,379.3 150.1,384.0 151.0,387.1 149.6,388.4 148.7,389.6"/><polyline points="158.6,375.3 161.3,375.4 163.9,377.2 166.2,377.2 168.9,376.9 169.9,375.6 169.5,373.9"/><polyline points="169.9,375.6 169.3,377.7 167.0,379.4 166.8,382.0 166.8,384.1 168.1,386.8 169.4,389.4"/><polyline points="156.1,380.3 156.4,382.5 157.7,385.2 158.1,387.8 159.0,391.3 159.0,393.9 161.7,392.7 164.9,392.3 168.5,394.2"/></g></svg>
<div class="a" style="left:194px;top:66px;width:689px;height:375px;background:#f4f2ec;overflow:hidden;border-right:1px solid #a0a0a0">
<svg class="a" style="left:-194px;top:-66px" width="887" height="441" viewBox="0 0 887 441"><filter id="bl" x="-20%" y="-20%" width="140%" height="140%"><feGaussianBlur stdDeviation="2.5"/></filter><g fill="#d3e4c3" filter="url(#bl)" opacity="0.85"><polygon points="388.0,125.0 420.0,105.0 455.0,112.0 475.0,130.0 465.0,160.0 430.0,168.0 400.0,160.0 385.0,145.0"/><polygon points="470.0,104.0 510.0,100.0 530.0,115.0 505.0,135.0 478.0,134.0"/><polygon points="535.0,108.0 570.0,104.0 605.0,118.0 600.0,150.0 560.0,158.0 538.0,140.0"/><polygon points="244.6,150.0 258.0,152.0 258.0,183.0 246.0,180.0"/><polygon points="335.0,190.0 365.0,183.0 392.0,200.0 390.0,240.0 360.0,262.0 338.0,250.0"/><polygon points="236.0,236.0 257.6,234.8 255.0,247.7 238.0,247.0"/><polygon points="193.0,185.0 230.0,190.0 250.0,230.0 240.0,290.0 210.0,300.0 193.0,280.0"/><polygon points="817.0,85.0 850.0,82.0 874.0,100.0 874.0,149.0 840.0,150.0 815.0,125.0"/><polygon points="740.0,75.6 770.0,72.0 791.0,85.0 788.0,107.5 755.0,106.0"/><polygon points="657.0,136.0 680.0,130.0 696.0,150.0 690.0,162.0 662.0,160.0"/><polygon points="804.0,162.0 840.0,160.0 877.6,175.0 877.0,215.0 845.0,212.0 806.0,198.0"/><polygon points="600.0,123.0 632.0,120.0 632.0,143.0 602.0,145.0"/><polygon points="680.0,85.0 696.0,85.0 696.0,101.0 682.0,101.0"/><polygon points="727.6,120.0 746.8,118.0 746.8,146.0 729.0,146.0"/><polygon points="613.0,352.0 650.0,345.0 675.0,360.0 672.0,385.0 640.0,388.0 615.0,375.0"/><polygon points="465.0,377.0 500.0,372.0 543.0,390.0 540.0,432.0 495.0,435.0 468.0,410.0"/><polygon points="240.0,418.0 262.0,422.0 265.0,440.0 242.0,440.0"/><polygon points="780.0,375.0 830.0,365.0 870.0,395.0 860.0,435.0 800.0,430.0"/><polygon points="555.0,395.0 590.0,390.0 600.0,420.0 570.0,430.0"/><polygon points="270.0,66.0 330.0,66.0 345.0,85.0 300.0,95.0 275.0,85.0"/><polygon points="700.0,400.0 740.0,395.0 750.0,420.0 720.0,430.0"/></g><g fill="none" stroke="#f9e3c6" stroke-width="0.9" stroke-linejoin="round"><polyline points="410.1,108.6 400.8,104.5 391.6,99.8 381.4,99.6 371.2,99.8"/><polyline points="648.5,76.1 648.8,83.7 647.3,91.8 651.8,98.4 655.3,105.3"/><polyline points="648.5,76.1 654.9,71.0 662.2,66.7 664.5,58.5 668.0,51.2"/><polyline points="564.7,197.8 557.0,199.5 549.1,200.2 542.0,204.1 534.1,204.8"/><polyline points="216.3,256.6 215.5,247.5 210.9,240.2 207.3,232.6 201.3,226.0"/><polyline points="201.3,226.0 194.7,220.5 186.8,216.8 181.9,209.2 174.8,204.4"/><polyline points="201.3,226.0 196.1,233.0 191.0,240.1 184.6,245.8 176.6,250.1"/><polyline points="201.3,226.0 210.9,230.0 220.8,231.5 230.7,231.5 240.9,229.4"/><polyline points="201.3,226.0 206.4,218.6 212.2,211.7 215.3,203.4 217.3,194.5"/><polyline points="224.9,83.6 210.8,87.0 198.2,93.4 185.2,99.2 174.2,108.8"/><polyline points="224.9,83.6 230.8,88.9 236.0,94.9 242.3,99.8 248.0,105.2"/><polyline points="264.3,138.6 262.3,147.5 258.4,155.0 252.2,160.9 245.1,166.1"/><polyline points="631.4,439.3 623.9,433.8 615.9,429.3 607.0,426.4 599.3,421.3"/><polyline points="631.4,439.3 642.3,443.2 653.4,446.3 664.4,450.0 675.4,453.7"/><polyline points="594.7,210.6 595.2,222.1 592.4,232.2 587.3,241.5 579.8,249.9"/><polyline points="885.7,65.3 879.6,75.3 876.9,86.4 874.2,97.4 872.2,108.6"/><polyline points="885.7,65.3 878.4,60.2 869.5,57.8 863.0,51.5 855.3,47.1"/><polyline points="799.8,166.2 791.6,165.3 784.1,162.8 777.5,158.2 771.0,153.3"/><polyline points="799.8,166.2 794.8,172.6 789.7,179.0 783.4,184.6 781.8,193.2"/><polyline points="279.2,94.9 278.7,83.7 276.0,73.0 271.6,62.7 269.5,51.9"/><polyline points="279.2,94.9 288.5,93.9 297.9,93.0 306.0,88.2 314.3,83.6"/><polyline points="279.2,94.9 270.8,95.6 263.3,99.1 255.0,100.4 248.0,105.2"/><polyline points="305.7,287.4 315.1,296.0 321.9,306.0 325.8,317.3 327.2,330.0"/><polyline points="305.7,287.4 299.9,292.4 293.5,296.9 288.5,303.0 281.0,306.1"/><polyline points="639.8,200.5 649.9,202.8 657.9,208.0 664.8,214.6 670.0,223.5"/><polyline points="639.8,200.5 638.9,191.6 638.4,182.7 638.3,173.7 634.4,165.3"/><polyline points="639.8,200.5 643.9,208.8 646.3,217.1 644.0,225.8 641.7,234.4"/><polyline points="573.3,72.1 568.7,80.3 562.8,88.0 560.8,97.4 559.1,106.8"/><polyline points="573.3,72.1 575.1,81.2 576.4,90.7 584.3,96.6 590.5,103.3"/><polyline points="217.4,131.5 223.8,123.5 229.9,115.1 239.7,111.0 248.0,105.2"/><polyline points="670.0,223.5 674.9,230.1 677.3,238.0 681.5,245.0 683.9,252.8"/><polyline points="403.0,289.0 400.2,278.1 398.4,267.0 396.5,256.0 394.0,245.0"/><polyline points="504.4,170.4 506.4,179.5 506.7,188.5 504.5,197.3 501.9,206.0"/><polyline points="753.1,336.1 745.4,331.2 738.1,325.7 729.5,322.4 721.1,318.9"/><polyline points="351.9,284.4 350.9,297.5 351.8,310.2 356.9,321.9 362.9,333.4"/><polyline points="556.9,409.2 560.4,419.8 560.0,430.5 559.8,441.3 559.0,452.1"/><polyline points="556.9,409.2 565.7,403.6 574.1,397.3 583.9,393.4 593.3,388.7"/><polyline points="705.8,165.5 703.3,175.5 697.0,182.5 690.1,189.1 682.8,195.4"/><polyline points="284.8,248.9 277.4,257.5 269.8,265.6 261.0,272.6 251.4,278.5"/><polyline points="202.6,323.3 204.4,313.5 209.8,305.7 214.6,297.6 221.9,291.0"/><polyline points="202.6,323.3 199.4,315.8 193.9,309.5 189.8,302.5 186.9,294.8"/><polyline points="731.4,283.8 728.1,292.4 724.4,300.8 724.3,310.3 721.1,318.9"/><polyline points="731.4,283.8 736.2,272.0 740.0,259.8 747.2,249.0 751.1,236.8"/><polyline points="680.9,292.7 678.6,282.5 681.6,272.7 681.1,262.6 683.9,252.8"/><polyline points="786.3,438.0 794.3,439.8 801.7,443.6 809.5,446.0 817.6,447.5"/><polyline points="519.6,321.6 522.5,314.0 521.4,306.2 521.4,298.4 521.4,290.6"/><polyline points="519.6,321.6 510.7,324.9 502.5,323.1 494.3,321.1 486.3,317.3"/><polyline points="455.2,323.5 452.2,312.9 448.1,302.6 445.5,291.8 443.2,281.0"/><polyline points="217.0,364.8 211.2,376.0 206.2,387.6 200.2,398.7 192.6,408.8"/><polyline points="217.0,364.8 223.5,373.0 229.5,381.4 232.9,391.0 235.0,401.3"/><polyline points="217.0,364.8 206.1,361.3 196.0,356.2 186.1,350.6 176.0,345.5"/><polyline points="217.0,364.8 227.0,365.4 236.9,366.2 246.2,369.3 255.1,374.4"/><polyline points="459.0,407.6 458.5,416.1 461.2,423.7 461.9,431.8 466.6,438.9"/><polyline points="459.0,407.6 454.5,400.3 448.0,395.5 441.8,390.3 434.0,387.0"/><polyline points="771.3,404.6 764.8,398.7 756.7,398.2 748.9,396.8 741.1,395.5"/><polyline points="377.0,218.3 384.9,214.3 389.9,207.7 396.3,202.2 399.7,194.0"/><polyline points="872.2,108.6 864.8,106.1 857.8,101.4 849.9,101.3 841.7,102.9"/><polyline points="302.5,142.3 308.7,135.3 312.7,126.5 320.6,120.8 326.2,113.4"/><polyline points="344.1,247.3 344.4,237.5 343.0,228.2 338.7,219.8 333.0,211.9"/><polyline points="603.5,155.0 610.0,161.2 617.7,163.8 626.0,164.7 634.4,165.3"/><polyline points="443.2,281.0 452.0,275.1 456.8,266.6 462.0,258.3 464.3,248.2"/><polyline points="443.2,281.0 453.0,279.7 462.2,281.5 471.4,283.9 480.2,287.8"/><polyline points="868.8,332.6 878.9,335.4 885.9,341.8 892.2,348.9 897.3,357.4"/><polyline points="868.8,332.6 861.4,336.4 853.6,338.2 845.4,338.2 837.3,339.1"/><polyline points="549.8,302.3 551.0,310.2 550.6,318.0 551.4,326.0 547.4,333.5"/><polyline points="549.8,302.3 557.4,305.4 565.3,305.6 573.2,306.3 581.2,306.5"/><polyline points="829.8,369.7 833.5,362.5 835.7,354.9 835.9,346.8 837.3,339.1"/><polyline points="460.0,211.6 457.2,204.2 456.5,196.6 457.5,189.0 458.0,181.3"/><polyline points="249.5,309.2 241.8,305.9 234.6,301.9 228.3,296.4 221.9,291.0"/><polyline points="326.2,113.4 336.7,107.6 347.3,102.1 358.6,98.9 371.2,99.8"/><polyline points="326.2,113.4 329.7,104.5 334.4,96.4 341.0,89.4 346.2,81.6"/><polyline points="421.9,67.8 427.4,74.4 432.2,81.5 437.8,88.1 439.5,97.0"/><polyline points="421.9,67.8 414.0,69.0 406.1,70.0 398.3,71.6 390.5,73.4"/><polyline points="174.2,108.8 176.2,123.2 183.3,135.7 187.5,149.4 194.4,162.0"/><polyline points="174.2,108.8 172.7,100.4 174.1,92.2 173.7,83.9 175.1,75.6"/><polyline points="248.0,196.9 255.1,202.7 262.5,208.0 271.5,208.8 280.7,209.3"/><polyline points="248.0,196.9 240.1,198.5 232.3,199.6 224.7,197.9 217.3,194.5"/><polyline points="192.6,408.8 191.3,399.7 187.6,391.8 182.4,384.6 176.9,377.7"/><polyline points="192.6,408.8 200.6,419.8 208.2,431.0 214.8,442.7 220.9,454.8"/><polyline points="621.7,107.6 617.3,101.1 613.1,94.5 611.8,87.0 612.1,78.9"/><polyline points="621.7,107.6 629.0,112.2 633.0,118.8 636.6,125.5 637.0,134.1"/><polyline points="357.9,190.2 368.2,192.4 378.6,193.7 389.2,193.2 399.7,194.0"/><polyline points="357.9,190.2 353.3,181.5 349.6,172.6 347.5,163.3 348.3,153.2"/><polyline points="439.5,97.0 439.1,109.4 441.7,120.6 447.5,130.4 456.9,138.8"/><polyline points="423.8,155.9 412.2,155.8 401.2,153.3 390.2,150.9 379.5,146.5"/><polyline points="423.8,155.9 416.6,164.7 410.0,173.8 404.1,183.4 399.7,194.0"/><polyline points="423.8,155.9 432.8,161.6 442.7,166.1 450.0,174.2 458.0,181.3"/><polyline points="778.2,113.0 779.8,103.6 779.1,94.8 776.1,86.5 769.8,79.1"/><polyline points="559.1,106.8 558.8,116.4 559.7,125.9 560.1,135.5 558.1,145.0"/><polyline points="559.1,106.8 552.4,111.1 544.3,113.2 537.6,117.5 532.5,124.2"/><polyline points="559.1,106.8 553.9,101.0 549.7,94.6 544.6,88.8 542.5,81.0"/><polyline points="803.4,334.9 799.6,342.5 793.2,346.9 787.1,351.5 779.4,354.1"/><polyline points="803.4,334.9 811.6,338.2 819.6,343.0 828.4,341.5 837.3,339.1"/><polyline points="295.8,366.4 294.6,358.5 295.1,350.4 294.9,342.5 293.3,334.6"/><polyline points="295.8,366.4 287.6,360.0 279.4,353.8 270.7,348.1 262.0,342.6"/><polyline points="795.6,380.5 805.7,386.6 816.7,391.9 822.2,402.8 828.8,412.7"/><polyline points="362.9,333.4 368.4,340.6 374.6,346.6 382.1,350.7 391.1,352.7"/><polyline points="362.9,333.4 353.8,334.1 345.0,332.3 335.9,332.8 327.2,330.0"/><polyline points="362.9,333.4 369.0,327.0 376.1,323.3 384.6,322.8 392.7,321.4"/><polyline points="871.3,231.6 868.1,223.1 866.7,214.6 867.5,206.0 870.2,197.3"/><polyline points="871.3,231.6 878.7,236.3 886.6,237.1 894.5,237.4 902.7,235.5"/><polyline points="857.1,456.0 848.0,450.3 838.5,446.5 828.4,445.5 817.6,447.5"/><polyline points="857.1,456.0 864.0,449.8 871.0,443.8 879.4,439.7 887.1,434.5"/><polyline points="870.2,197.3 863.1,206.1 855.6,214.5 847.4,222.2 839.2,229.9"/><polyline points="870.2,197.3 876.8,208.2 885.5,217.2 892.3,227.9 902.7,235.5"/><polyline points="870.2,197.3 871.4,188.6 876.5,183.0 882.4,177.9 888.7,173.2"/><polyline points="786.7,245.0 793.9,251.9 800.2,259.5 803.9,269.0 810.4,276.4"/><polyline points="650.0,377.9 642.1,375.1 634.5,371.0 625.7,371.9 617.5,370.2"/><polyline points="720.9,244.4 726.4,235.3 732.0,226.3 737.4,217.3 741.3,207.3"/><polyline points="720.9,244.4 728.3,242.1 735.9,240.4 743.7,239.3 751.1,236.8"/><polyline points="720.9,244.4 720.1,236.1 717.1,228.7 713.5,221.7 708.1,215.4"/><polyline points="466.6,438.9 475.1,437.9 482.0,440.8 488.8,444.0 494.6,449.8"/><polyline points="702.4,116.6 701.5,107.7 696.1,101.6 691.3,95.1 686.2,88.7"/><polyline points="431.9,236.1 439.5,240.6 447.4,244.2 455.7,246.6 464.3,248.2"/><polyline points="431.9,236.1 434.4,227.4 433.6,218.8 433.0,210.1 431.2,201.5"/><polyline points="599.3,421.3 601.3,430.1 601.0,438.7 599.4,447.3 597.2,455.8"/><polyline points="539.7,266.7 534.8,272.4 532.1,279.8 527.2,285.5 521.4,290.6"/><polyline points="176.9,377.7 176.3,369.6 176.1,361.6 174.8,353.6 176.0,345.5"/><polyline points="251.4,278.5 256.6,287.8 264.6,294.1 272.5,300.4 281.0,306.1"/><polyline points="620.5,255.8 626.4,265.1 629.6,275.2 632.9,285.3 633.3,296.3"/><polyline points="547.4,333.5 553.4,323.7 560.7,315.5 570.8,310.8 581.2,306.5"/><polyline points="547.4,333.5 543.5,340.5 539.2,347.2 531.7,350.7 525.6,355.5"/><polyline points="683.7,409.8 685.1,421.4 685.4,432.8 681.8,443.5 675.4,453.7"/><polyline points="683.7,409.8 674.6,413.4 665.5,416.0 656.3,413.3 647.0,410.6"/><polyline points="860.8,153.7 868.6,157.5 876.6,160.8 883.1,166.4 888.7,173.2"/><polyline points="655.3,105.3 663.4,101.8 670.6,96.7 678.5,92.8 686.2,88.7"/><polyline points="895.6,391.5 894.7,402.5 894.1,413.5 891.1,424.2 887.1,434.5"/><polyline points="895.6,391.5 898.5,383.1 897.2,374.5 897.4,366.0 897.3,357.4"/><polyline points="895.6,391.5 887.1,394.2 877.9,394.7 869.6,398.0 861.7,402.7"/><polyline points="316.7,178.2 322.6,169.4 328.7,160.8 337.8,156.2 348.3,153.2"/><polyline points="316.7,178.2 321.2,186.4 326.3,194.3 329.0,203.5 333.0,211.9"/><polyline points="371.2,99.8 364.0,89.0 356.1,78.5 355.6,65.6 356.6,52.4"/><polyline points="371.2,99.8 375.6,92.9 380.2,86.1 385.1,79.6 390.5,73.4"/><polyline points="371.2,99.8 365.7,94.1 361.2,87.3 354.1,83.8 346.2,81.6"/><polyline points="235.0,401.3 238.5,393.5 242.5,386.0 246.9,378.8 255.1,374.4"/><polyline points="558.1,145.0 553.3,151.9 546.7,157.3 540.4,162.9 536.2,170.4"/><polyline points="356.6,52.4 364.7,58.1 373.7,62.6 381.3,69.2 390.5,73.4"/><polyline points="356.6,52.4 356.2,60.5 355.4,68.4 350.0,74.7 346.2,81.6"/><polyline points="675.4,453.7 671.4,440.9 664.5,430.0 655.6,420.4 647.0,410.6"/><polyline points="379.5,146.5 371.2,145.6 363.7,148.7 355.9,150.3 348.3,153.2"/><polyline points="365.9,445.1 378.1,442.3 389.6,443.7 400.9,445.8 411.5,452.8"/><polyline points="365.9,445.1 369.3,437.4 369.8,429.2 370.9,421.2 370.9,412.9"/><polyline points="399.7,194.0 407.9,194.6 415.9,195.9 423.4,199.5 431.2,201.5"/><polyline points="174.8,204.4 186.2,205.3 196.9,203.2 207.1,198.9 217.3,194.5"/><polyline points="204.4,55.3 195.2,57.7 188.4,63.5 180.7,68.1 175.1,75.6"/><polyline points="458.0,181.3 449.5,184.0 442.8,189.1 436.7,194.8 431.2,201.5"/><polyline points="824.2,306.3 817.1,300.5 814.4,292.7 811.6,284.9 810.4,276.4"/><polyline points="709.0,383.1 711.9,372.4 709.6,362.8 705.2,353.7 700.7,344.6"/><polyline points="709.0,383.1 717.7,384.4 726.5,385.6 733.8,390.6 741.1,395.5"/><polyline points="671.8,333.7 661.7,330.7 651.6,328.0 641.2,327.1 630.5,328.5"/><polyline points="581.2,306.5 580.2,297.9 582.0,290.5 588.4,285.0 592.8,278.6"/><polyline points="530.7,47.4 534.6,55.4 537.7,63.8 539.1,72.7 542.5,81.0"/><polyline points="534.1,204.8 526.1,206.7 518.1,208.3 510.1,208.8 501.9,206.0"/><polyline points="534.1,204.8 536.4,212.2 539.8,219.0 544.8,224.8 549.7,230.7"/><polyline points="666.6,166.7 672.1,173.1 674.1,181.4 679.1,188.1 682.8,195.4"/><polyline points="514.0,95.2 504.0,94.3 494.1,92.9 484.3,91.3 474.7,88.3"/><polyline points="825.5,128.7 823.0,138.7 825.1,148.0 827.6,157.2 831.2,166.3"/><polyline points="825.5,128.7 822.3,120.4 820.6,111.4 816.5,103.6 810.0,97.0"/><polyline points="887.1,434.5 880.2,427.0 874.8,418.3 869.5,409.5 861.7,402.7"/><polyline points="391.1,352.7 391.9,344.9 390.8,337.0 390.3,329.1 392.7,321.4"/><polyline points="314.3,83.6 311.4,75.5 307.3,67.7 306.5,59.1 305.2,50.5"/><polyline points="314.3,83.6 322.3,84.4 330.5,87.3 338.5,86.0 346.2,81.6"/><polyline points="810.3,55.1 809.3,65.5 810.0,76.0 810.7,86.5 810.0,97.0"/><polyline points="810.3,55.1 820.7,47.9 831.4,43.3 843.4,45.4 855.3,47.1"/><polyline points="602.1,46.1 602.1,55.0 602.2,64.0 606.8,71.6 612.1,78.9"/><polyline points="335.4,361.6 332.7,353.9 332.1,345.6 328.4,338.1 327.2,330.0"/><polyline points="335.4,361.6 340.9,367.3 344.7,374.5 351.3,379.2 356.6,385.1"/><polyline points="434.0,387.0 439.9,380.2 446.5,374.1 453.9,368.9 460.1,362.5"/><polyline points="732.9,62.9 741.6,68.1 750.4,73.3 759.8,76.8 769.8,79.1"/><polyline points="732.9,62.9 742.4,59.4 752.7,57.6 761.4,52.3 770.2,47.0"/><polyline points="411.5,452.8 406.6,445.4 405.1,437.4 404.9,429.2 405.9,420.8"/><polyline points="520.1,385.9 522.8,378.6 526.0,371.3 524.4,363.2 525.6,355.5"/><polyline points="480.2,287.8 478.9,295.8 481.6,302.9 482.5,310.4 486.3,317.3"/><polyline points="240.9,229.4 235.7,220.2 228.8,212.2 222.0,204.0 217.3,194.5"/><polyline points="810.4,276.4 806.3,285.1 800.0,292.2 794.1,299.5 788.0,306.8"/><polyline points="810.4,276.4 820.2,274.1 829.7,276.2 839.2,277.0 848.5,280.1"/><polyline points="492.7,346.7 493.0,339.0 491.2,331.6 488.2,324.6 486.3,317.3"/><polyline points="287.2,395.9 277.2,393.5 268.5,389.1 261.4,382.4 255.1,374.4"/><polyline points="457.1,60.1 465.7,55.8 475.4,54.3 483.6,49.0 493.3,47.5"/><polyline points="263.2,454.6 274.3,454.9 283.5,451.5 291.1,445.2 297.7,436.7"/><polyline points="781.8,193.2 791.7,191.9 801.6,191.1 810.8,194.5 820.0,198.6"/><polyline points="617.5,370.2 611.9,375.4 605.2,379.2 599.1,383.8 593.3,388.7"/><polyline points="764.7,284.8 772.1,288.6 779.0,293.0 785.3,298.0 788.0,306.8"/><polyline points="769.8,79.1 767.6,71.0 769.1,63.0 768.3,55.0 770.2,47.0"/><polyline points="862.8,371.6 861.2,379.3 860.5,387.1 861.4,394.9 861.7,402.7"/><polyline points="900.9,201.2 899.7,209.9 899.9,218.5 903.0,226.9 902.7,235.5"/><polyline points="748.0,110.8 738.8,107.6 731.1,102.4 723.6,96.9 717.8,89.1"/><polyline points="837.3,72.6 837.6,80.3 839.8,87.7 839.5,95.5 841.7,102.9"/><polyline points="590.5,103.3 594.8,96.2 599.7,89.6 606.2,84.5 612.1,78.9"/><polyline points="356.6,385.1 349.9,390.2 342.5,393.1 334.5,393.9 326.3,394.4"/><polyline points="633.3,296.3 638.5,290.2 643.8,284.2 646.4,276.3 651.2,269.9"/><polyline points="810.0,97.0 817.5,100.6 825.4,102.4 833.4,103.7 841.7,102.9"/><polyline points="734.8,365.5 738.9,372.5 742.4,379.6 741.0,387.7 741.1,395.5"/><polyline points="494.6,449.8 495.2,440.5 499.3,432.1 501.5,423.2 502.7,414.1"/></g><g fill="none" stroke="#f1c68e" stroke-width="1" stroke-linejoin="round"><polyline points="410.1,108.6 417.3,105.3 424.8,102.8 432.4,100.5 439.5,97.0"/><polyline points="648.5,76.1 643.0,70.1 637.8,64.0 634.8,56.6 632.4,48.8"/><polyline points="564.7,197.8 571.3,203.1 578.5,207.1 586.2,209.7 594.7,210.6"/><polyline points="216.3,256.6 207.0,251.4 197.0,249.9 187.1,248.0 176.6,250.1"/><polyline points="216.3,256.6 223.3,250.5 229.9,244.2 236.4,237.7 240.9,229.4"/><polyline points="216.3,256.6 217.3,265.3 221.1,273.5 220.8,282.4 221.9,291.0"/><polyline points="224.9,83.6 221.4,75.4 218.5,66.7 210.9,61.4 204.4,55.3"/><polyline points="224.9,83.6 213.4,75.8 200.9,74.1 188.3,73.1 175.1,75.6"/><polyline points="224.9,83.6 225.4,75.1 228.3,67.5 233.6,61.0 237.4,53.8"/><polyline points="483.5,389.1 478.6,395.4 473.6,401.5 466.3,404.6 459.0,407.6"/><polyline points="483.5,389.1 492.7,389.7 502.0,390.5 511.0,387.9 520.1,385.9"/><polyline points="483.5,389.1 478.0,382.2 472.5,375.2 466.7,368.5 460.1,362.5"/><polyline points="483.5,389.1 490.7,393.5 495.0,400.1 499.8,406.4 502.7,414.1"/><polyline points="264.3,138.6 273.5,142.9 282.9,145.2 292.5,145.8 302.5,142.3"/><polyline points="264.3,138.6 259.6,130.6 253.4,123.3 249.1,115.0 248.0,105.2"/><polyline points="264.3,138.6 264.4,147.7 265.9,156.3 271.0,163.5 276.2,170.8"/><polyline points="631.4,439.3 621.2,440.0 612.2,443.1 603.7,447.5 597.2,455.8"/><polyline points="631.4,439.3 632.1,430.4 635.1,422.7 639.7,416.0 647.0,410.6"/><polyline points="885.7,65.3 888.5,73.5 894.0,80.1 897.6,87.7 902.8,94.4"/><polyline points="799.8,166.2 807.7,162.6 815.5,163.4 823.4,165.0 831.2,166.3"/><polyline points="799.8,166.2 804.4,174.6 810.1,182.3 815.4,190.2 820.0,198.6"/><polyline points="279.2,94.9 282.6,82.0 288.0,70.2 296.7,60.4 305.2,50.5"/><polyline points="398.9,384.7 396.7,376.8 393.0,369.2 392.4,360.9 391.1,352.7"/><polyline points="398.9,384.7 407.6,385.5 416.4,386.3 425.2,386.9 434.0,387.0"/><polyline points="305.7,287.4 317.1,283.4 328.4,279.0 340.2,281.9 351.9,284.4"/><polyline points="305.7,287.4 303.4,276.2 299.7,265.7 294.4,256.1 284.8,248.9"/><polyline points="573.3,72.1 564.3,63.1 554.4,55.6 543.3,50.2 530.7,47.4"/><polyline points="573.3,72.1 581.7,67.0 590.1,61.7 597.8,55.8 602.1,46.1"/><polyline points="573.3,72.1 564.7,71.3 557.3,74.4 549.3,75.5 542.5,81.0"/><polyline points="217.4,131.5 205.4,128.2 193.7,124.2 182.7,118.8 174.2,108.8"/><polyline points="217.4,131.5 214.3,141.1 210.0,149.8 202.6,156.2 194.4,162.0"/><polyline points="670.0,223.5 662.2,224.3 654.7,226.1 647.4,228.2 641.7,234.4"/><polyline points="670.0,223.5 675.5,217.5 679.8,211.0 681.9,203.4 682.8,195.4"/><polyline points="403.0,289.0 390.6,284.1 378.0,280.6 365.0,282.1 351.9,284.4"/><polyline points="403.0,289.0 412.8,285.8 422.9,283.8 432.8,281.2 443.2,281.0"/><polyline points="403.0,289.0 397.5,296.2 396.6,304.8 392.5,312.4 392.7,321.4"/><polyline points="504.4,170.4 512.3,166.9 520.3,166.5 528.2,168.5 536.2,170.4"/><polyline points="753.1,336.1 761.9,337.3 768.2,342.2 775.0,346.3 779.4,354.1"/><polyline points="753.1,336.1 747.8,343.0 745.0,351.4 738.5,357.6 734.8,365.5"/><polyline points="351.9,284.4 354.6,274.1 352.2,264.9 351.0,255.5 344.1,247.3"/><polyline points="556.9,409.2 560.9,399.6 565.0,390.0 563.9,379.7 562.3,369.3"/><polyline points="705.8,165.5 714.7,166.1 723.2,168.0 731.5,171.2 739.7,174.3"/><polyline points="284.8,248.9 282.1,239.2 280.9,229.3 282.1,219.2 280.7,209.3"/><polyline points="284.8,248.9 291.7,245.8 297.7,240.6 305.4,239.6 312.7,237.5"/><polyline points="202.6,323.3 196.1,329.1 190.4,335.8 183.2,340.7 176.0,345.5"/><polyline points="202.6,323.3 211.6,323.5 218.2,328.2 225.5,331.8 231.4,338.0"/><polyline points="731.4,283.8 728.5,274.0 726.4,264.0 723.9,254.1 720.9,244.4"/><polyline points="731.4,283.8 739.7,284.7 748.1,282.5 756.4,285.1 764.7,284.8"/><polyline points="680.9,292.7 677.4,302.7 674.5,312.8 673.6,323.4 671.8,333.7"/><polyline points="680.9,292.7 672.7,288.0 664.6,283.2 657.5,277.1 651.2,269.9"/><polyline points="786.3,438.0 783.4,429.3 781.2,420.2 776.5,412.3 771.3,404.6"/><polyline points="786.3,438.0 777.8,443.9 769.5,450.3 759.0,449.5 748.7,449.3"/><polyline points="519.6,321.6 527.3,322.9 534.2,325.9 541.4,328.3 547.4,333.5"/><polyline points="519.6,321.6 510.1,324.9 503.5,331.4 497.0,337.8 492.7,346.7"/><polyline points="455.2,323.5 448.1,327.3 440.4,329.8 433.9,334.7 426.8,338.4"/><polyline points="455.2,323.5 463.6,324.8 471.2,322.4 478.6,319.0 486.3,317.3"/><polyline points="217.0,364.8 207.5,369.8 197.2,372.2 186.8,374.2 176.9,377.7"/><polyline points="217.0,364.8 218.3,356.9 221.6,350.0 225.0,343.2 231.4,338.0"/><polyline points="459.0,407.6 454.7,414.1 450.9,421.1 443.5,424.5 437.7,429.5"/><polyline points="771.3,404.6 779.3,400.5 786.3,395.5 790.5,387.6 795.6,380.5"/><polyline points="771.3,404.6 764.1,415.0 755.8,424.8 752.5,437.1 748.7,449.3"/><polyline points="377.0,218.3 370.0,212.8 364.2,206.4 361.9,197.7 357.9,190.2"/><polyline points="377.0,218.3 380.0,225.8 381.3,234.4 388.4,239.2 394.0,245.0"/><polyline points="872.2,108.6 880.6,106.7 887.6,101.6 894.9,97.4 902.8,94.4"/><polyline points="302.5,142.3 301.2,153.1 304.5,162.3 308.5,171.0 316.7,178.2"/><polyline points="302.5,142.3 297.3,150.7 291.4,158.5 282.5,163.5 276.2,170.8"/><polyline points="344.1,247.3 336.3,244.8 328.6,241.9 320.6,239.9 312.7,237.5"/><polyline points="603.5,155.0 609.8,146.6 617.0,139.5 627.3,137.4 637.0,134.1"/><polyline points="868.8,332.6 872.8,325.3 874.2,317.7 873.2,309.9 872.2,302.0"/><polyline points="868.8,332.6 877.4,329.0 885.6,324.7 892.9,318.9 901.2,314.8"/><polyline points="549.8,302.3 543.8,296.8 536.7,293.9 529.7,290.8 521.4,290.6"/><polyline points="829.8,369.7 820.5,370.0 811.7,372.1 803.7,376.5 795.6,380.5"/><polyline points="829.8,369.7 831.8,380.5 833.5,391.3 831.7,402.0 828.8,412.7"/><polyline points="829.8,369.7 838.0,371.1 846.2,371.9 854.5,372.1 862.8,371.6"/><polyline points="460.0,211.6 451.6,216.1 441.9,219.2 436.9,227.7 431.9,236.1"/><polyline points="460.0,211.6 465.7,220.2 466.5,229.4 467.8,238.5 464.3,248.2"/><polyline points="460.0,211.6 470.0,206.0 480.5,204.9 491.0,203.8 501.9,206.0"/><polyline points="460.0,211.6 452.6,209.8 445.1,208.2 438.4,204.0 431.2,201.5"/><polyline points="249.5,309.2 250.4,301.6 251.8,294.0 250.4,286.2 251.4,278.5"/><polyline points="249.5,309.2 257.7,311.3 265.8,313.0 273.4,309.6 281.0,306.1"/><polyline points="326.2,113.4 320.0,107.2 315.6,100.4 314.5,92.2 314.3,83.6"/><polyline points="421.9,67.8 430.6,65.6 439.0,61.5 448.2,61.6 457.1,60.1"/><polyline points="248.0,196.9 247.8,205.4 245.3,213.3 243.1,221.4 240.9,229.4"/><polyline points="248.0,196.9 246.0,189.3 243.0,181.8 243.5,174.0 245.1,166.1"/><polyline points="248.0,196.9 256.6,192.1 265.6,187.6 270.6,178.9 276.2,170.8"/><polyline points="192.6,408.8 193.5,416.9 194.7,424.9 192.7,432.8 190.8,440.7"/><polyline points="192.6,408.8 203.5,408.7 214.4,408.3 225.1,406.9 235.0,401.3"/><polyline points="621.7,107.6 630.0,106.3 638.4,105.0 646.8,103.7 655.3,105.3"/><polyline points="621.7,107.6 613.8,107.2 605.9,106.5 598.4,103.3 590.5,103.3"/><polyline points="357.9,190.2 353.2,197.3 346.5,202.3 339.7,206.9 333.0,211.9"/><polyline points="439.5,97.0 442.2,87.0 445.7,77.3 450.9,68.4 457.1,60.1"/><polyline points="439.5,97.0 447.6,92.1 456.7,91.2 465.6,89.3 474.7,88.3"/><polyline points="513.7,246.8 518.2,254.4 523.6,260.8 531.5,263.9 539.7,266.7"/><polyline points="513.7,246.8 523.0,243.4 532.0,239.4 540.3,233.8 549.7,230.7"/><polyline points="423.8,155.9 430.6,148.7 438.9,144.4 447.5,140.8 456.9,138.8"/><polyline points="778.2,113.0 770.7,111.4 763.2,109.9 755.7,109.5 748.0,110.8"/><polyline points="778.2,113.0 786.1,108.8 794.5,105.7 801.9,100.8 810.0,97.0"/><polyline points="190.8,440.7 199.5,441.8 207.3,444.7 213.9,450.1 220.9,454.8"/><polyline points="559.1,106.8 567.2,107.7 575.4,110.2 583.2,108.7 590.5,103.3"/><polyline points="559.0,452.1 548.5,451.4 538.1,450.8 529.8,444.8 522.5,436.7"/><polyline points="559.0,452.1 568.6,452.5 578.2,453.1 587.6,454.9 597.2,455.8"/><polyline points="803.4,334.9 796.9,329.3 792.1,322.8 789.3,315.2 788.0,306.8"/><polyline points="295.8,366.4 305.5,363.4 315.1,360.1 325.2,360.3 335.4,361.6"/><polyline points="295.8,366.4 290.8,372.9 287.1,379.9 287.9,388.1 287.2,395.9"/><polyline points="562.3,369.3 561.9,359.0 558.8,349.7 554.3,341.1 547.4,333.5"/><polyline points="562.3,369.3 568.2,377.1 574.7,384.0 582.8,388.2 593.3,388.7"/><polyline points="562.3,369.3 553.5,364.7 543.7,363.0 534.6,359.5 525.6,355.5"/><polyline points="795.6,380.5 791.1,374.1 784.6,369.0 781.9,361.6 779.4,354.1"/><polyline points="194.4,162.0 195.0,175.1 190.4,185.9 184.6,196.0 174.8,204.4"/><polyline points="194.4,162.0 202.1,168.6 207.7,176.9 213.0,185.4 217.3,194.5"/><polyline points="871.3,231.6 863.3,229.8 855.5,225.9 847.4,227.0 839.2,229.9"/><polyline points="870.2,197.3 877.9,197.9 885.8,197.0 893.2,200.6 900.9,201.2"/><polyline points="786.7,245.0 777.3,244.8 768.4,243.2 759.7,240.3 751.1,236.8"/><polyline points="650.0,377.9 662.0,382.1 671.3,389.1 679.3,397.6 683.7,409.8"/><polyline points="650.0,377.9 650.8,364.5 656.0,353.3 664.0,343.6 671.8,333.7"/><polyline points="650.0,377.9 650.7,386.2 647.7,394.2 647.1,402.4 647.0,410.6"/><polyline points="720.9,244.4 710.8,242.9 701.4,244.1 692.6,248.3 683.9,252.8"/><polyline points="466.6,438.9 458.8,438.4 451.5,436.2 444.2,434.1 437.7,429.5"/><polyline points="466.6,438.9 476.4,433.9 486.5,429.1 494.8,421.9 502.7,414.1"/><polyline points="702.4,116.6 693.2,118.7 683.9,120.9 676.4,126.0 670.4,134.2"/><polyline points="702.4,116.6 709.6,111.6 712.4,104.1 715.4,96.7 717.8,89.1"/><polyline points="269.5,51.9 278.4,52.0 287.3,48.9 296.3,50.6 305.2,50.5"/><polyline points="269.5,51.9 261.5,53.8 253.5,54.1 245.6,55.9 237.4,53.8"/><polyline points="269.6,423.7 261.9,416.6 253.9,410.0 244.5,405.7 235.0,401.3"/><polyline points="269.6,423.7 276.3,418.2 280.3,411.0 285.1,404.3 287.2,395.9"/><polyline points="269.6,423.7 267.7,431.3 266.7,439.2 264.2,446.7 263.2,454.6"/><polyline points="269.6,423.7 276.2,427.7 282.6,432.5 290.3,434.2 297.7,436.7"/><polyline points="431.9,236.1 422.3,237.9 412.2,237.1 403.0,240.6 394.0,245.0"/><polyline points="599.3,421.3 600.7,412.6 601.3,404.1 598.5,396.2 593.3,388.7"/><polyline points="494.9,122.0 499.9,115.5 506.0,109.7 510.4,102.8 514.0,95.2"/><polyline points="494.9,122.0 484.7,124.7 475.6,129.7 466.0,133.8 456.9,138.8"/><polyline points="494.9,122.0 485.6,116.1 480.0,108.0 476.7,98.6 474.7,88.3"/><polyline points="494.9,122.0 504.0,126.5 513.3,129.3 522.8,127.9 532.5,124.2"/><polyline points="251.4,278.5 243.3,280.1 236.2,283.8 228.9,286.9 221.9,291.0"/><polyline points="839.2,229.9 835.0,221.8 830.6,213.6 824.6,206.5 820.0,198.6"/><polyline points="620.5,255.8 624.0,248.7 629.8,243.8 634.4,237.8 641.7,234.4"/><polyline points="620.5,255.8 610.5,253.5 600.3,251.7 590.1,250.8 579.8,249.9"/><polyline points="620.5,255.8 616.3,264.8 609.4,270.6 601.2,274.7 592.8,278.6"/><polyline points="620.5,255.8 627.0,261.9 634.1,266.8 641.9,270.0 651.2,269.9"/><polyline points="547.4,333.5 558.1,332.6 568.9,332.3 579.6,332.2 590.0,336.7"/><polyline points="522.5,436.7 516.6,442.3 509.4,445.0 502.0,447.4 494.6,449.8"/><polyline points="522.5,436.7 515.7,432.6 509.8,427.8 505.9,421.2 502.7,414.1"/><polyline points="683.7,409.8 689.3,402.4 696.1,396.2 704.0,391.0 709.0,383.1"/><polyline points="683.7,409.8 693.1,418.7 701.1,428.5 706.9,439.9 713.3,450.9"/><polyline points="683.7,409.8 692.2,413.3 700.6,416.9 709.1,420.0 718.8,418.9"/><polyline points="860.8,153.7 852.3,154.1 845.4,158.5 837.6,160.8 831.2,166.3"/><polyline points="860.8,153.7 869.0,149.3 878.5,148.2 887.1,144.9 895.4,140.7"/><polyline points="655.3,105.3 657.9,113.2 662.6,119.9 665.5,127.6 670.4,134.2"/><polyline points="817.6,447.5 822.6,439.5 825.4,430.8 826.9,421.7 828.8,412.7"/><polyline points="334.1,441.3 342.3,440.1 350.2,441.4 357.9,444.2 365.9,445.1"/><polyline points="334.1,441.3 325.3,438.0 316.4,434.8 307.0,436.5 297.7,436.7"/><polyline points="334.1,441.3 342.8,433.6 352.6,427.3 361.1,419.3 370.9,412.9"/><polyline points="895.6,391.5 886.2,388.5 878.7,382.4 870.3,377.9 862.8,371.6"/><polyline points="316.7,178.2 306.7,175.6 296.3,175.2 285.9,174.6 276.2,170.8"/><polyline points="700.4,54.1 709.0,54.8 717.3,56.3 724.9,60.2 732.9,62.9"/><polyline points="700.4,54.1 692.5,51.2 684.7,46.9 676.3,49.3 668.0,51.2"/><polyline points="700.4,54.1 701.3,64.5 699.1,73.8 694.3,81.9 686.2,88.7"/><polyline points="220.9,454.8 231.4,451.9 242.0,450.6 252.6,450.8 263.2,454.6"/><polyline points="748.7,449.3 740.0,451.8 731.0,450.4 722.2,451.7 713.3,450.9"/><polyline points="748.7,449.3 739.2,443.7 733.1,434.7 725.7,427.0 718.8,418.9"/><polyline points="771.0,153.3 763.3,148.0 755.2,144.1 746.1,143.1 736.9,142.6"/><polyline points="771.0,153.3 762.6,157.7 754.5,162.5 746.3,167.3 739.7,174.3"/><polyline points="590.0,336.7 586.7,329.4 582.8,322.4 582.4,314.4 581.2,306.5"/><polyline points="590.0,336.7 600.0,334.4 610.4,333.2 620.4,330.4 630.5,328.5"/><polyline points="558.1,145.0 553.4,137.7 549.0,130.1 541.4,126.4 532.5,124.2"/><polyline points="356.6,52.4 343.6,54.3 330.7,57.0 318.0,53.4 305.2,50.5"/><polyline points="675.4,453.7 685.1,456.7 694.7,457.4 704.1,454.5 713.3,450.9"/><polyline points="883.0,273.0 879.5,280.0 878.3,287.8 875.9,295.2 872.2,302.0"/><polyline points="883.0,273.0 874.8,276.9 866.8,281.7 857.7,280.8 848.5,280.1"/><polyline points="883.0,273.0 892.5,266.0 897.2,256.5 901.6,246.9 902.7,235.5"/><polyline points="883.0,273.0 884.3,284.9 887.7,295.8 892.0,306.4 901.2,314.8"/><polyline points="174.8,204.4 172.4,215.9 172.9,227.3 174.1,238.7 176.6,250.1"/><polyline points="204.4,55.3 212.7,55.5 221.0,57.1 229.2,55.5 237.4,53.8"/><polyline points="721.1,318.9 715.9,325.2 709.9,330.9 705.4,337.8 700.7,344.6"/><polyline points="458.0,181.3 462.2,170.6 464.0,159.9 462.5,149.3 456.9,138.8"/><polyline points="824.2,306.3 815.2,308.6 806.2,311.8 797.1,308.7 788.0,306.8"/><polyline points="824.2,306.3 827.5,297.1 833.7,290.7 839.4,283.8 848.5,280.1"/><polyline points="824.2,306.3 832.0,312.7 834.3,321.3 837.7,329.4 837.3,339.1"/><polyline points="709.0,383.1 711.0,392.1 710.2,402.0 715.7,410.1 718.8,418.9"/><polyline points="709.0,383.1 716.6,380.4 724.0,377.4 729.4,371.5 734.8,365.5"/><polyline points="671.8,333.7 679.9,334.3 687.4,336.1 694.1,340.2 700.7,344.6"/><polyline points="630.5,328.5 634.4,320.7 634.0,312.6 635.4,304.6 633.3,296.3"/><polyline points="530.7,47.4 522.9,58.1 515.8,69.0 513.7,81.7 514.0,95.2"/><polyline points="530.7,47.4 521.3,48.4 512.0,47.9 502.6,48.7 493.3,47.5"/><polyline points="713.3,450.9 718.3,443.5 720.5,435.7 720.4,427.4 718.8,418.9"/><polyline points="534.1,204.8 533.6,196.1 533.7,187.5 533.8,178.9 536.2,170.4"/><polyline points="666.6,166.7 658.6,165.9 650.5,165.1 642.5,163.6 634.4,165.3"/><polyline points="666.6,166.7 665.0,158.3 665.9,150.1 667.3,142.1 670.4,134.2"/><polyline points="514.0,95.2 516.9,103.5 519.1,112.3 526.2,118.0 532.5,124.2"/><polyline points="514.0,95.2 522.4,94.3 530.2,92.0 536.0,85.7 542.5,81.0"/><polyline points="825.5,128.7 831.7,123.6 837.2,118.1 839.4,110.4 841.7,102.9"/><polyline points="831.2,166.3 832.2,175.7 829.1,183.7 827.2,192.1 820.0,198.6"/><polyline points="810.3,55.1 817.0,59.5 825.4,61.4 831.3,67.1 837.3,72.6"/><polyline points="810.3,55.1 800.9,49.9 791.4,45.2 780.7,46.4 770.2,47.0"/><polyline points="602.1,46.1 609.7,46.2 617.2,47.1 624.8,48.5 632.4,48.8"/><polyline points="335.4,361.6 335.4,370.4 334.2,378.9 331.4,386.9 326.3,394.4"/><polyline points="280.7,209.3 281.8,199.4 282.2,189.6 281.2,179.9 276.2,170.8"/><polyline points="828.8,412.7 836.6,408.9 845.2,407.6 853.2,404.1 861.7,402.7"/><polyline points="732.9,62.9 727.4,68.4 722.7,74.4 719.9,81.6 717.8,89.1"/><polyline points="718.8,418.9 725.1,413.7 729.7,407.0 735.7,401.5 741.1,395.5"/><polyline points="872.2,302.0 865.8,297.0 860.3,291.1 855.4,284.5 848.5,280.1"/><polyline points="872.2,302.0 878.4,307.5 885.3,311.6 892.8,314.2 901.2,314.8"/><polyline points="411.5,452.8 419.4,448.5 426.2,442.9 433.5,438.0 437.7,429.5"/><polyline points="520.1,385.9 516.4,393.4 511.0,399.7 508.2,407.8 502.7,414.1"/><polyline points="293.3,334.6 301.7,332.8 310.1,331.6 318.7,331.5 327.2,330.0"/><polyline points="293.3,334.6 284.9,334.1 277.1,336.1 269.3,338.3 262.0,342.6"/><polyline points="293.3,334.6 292.5,326.5 287.9,320.0 284.6,313.0 281.0,306.1"/><polyline points="333.0,211.9 330.4,220.3 325.4,226.7 319.7,232.6 312.7,237.5"/><polyline points="492.7,346.7 483.4,348.3 474.6,350.9 466.9,355.8 460.1,362.5"/><polyline points="492.7,346.7 500.5,350.6 508.6,353.1 517.1,354.7 525.6,355.5"/><polyline points="221.9,291.0 213.3,293.4 204.4,292.7 195.7,294.3 186.9,294.8"/><polyline points="634.4,165.3 633.1,157.3 635.6,149.7 636.6,141.9 637.0,134.1"/><polyline points="426.8,338.4 417.5,335.8 408.4,332.6 400.2,327.7 392.7,321.4"/><polyline points="683.9,252.8 676.4,258.4 668.9,263.9 660.5,267.8 651.2,269.9"/><polyline points="287.2,395.9 289.5,406.2 291.2,416.6 293.1,427.0 297.7,436.7"/><polyline points="457.1,60.1 458.8,68.8 463.4,75.7 468.7,82.3 474.7,88.3"/><polyline points="741.3,207.3 741.0,215.6 741.8,223.5 746.6,230.1 751.1,236.8"/><polyline points="741.3,207.3 731.9,204.8 723.3,205.3 715.7,210.4 708.1,215.4"/><polyline points="741.3,207.3 742.2,199.0 743.2,190.7 741.4,182.5 739.7,174.3"/><polyline points="670.4,134.2 662.1,136.0 653.7,137.5 645.3,134.9 637.0,134.1"/><polyline points="474.7,88.3 475.2,76.3 478.0,65.2 484.4,55.8 493.3,47.5"/><polyline points="769.8,79.1 765.1,87.5 760.6,96.1 755.8,104.5 748.0,110.8"/><polyline points="862.8,371.6 871.2,367.5 879.2,362.5 887.5,358.1 897.3,357.4"/><polyline points="736.9,142.6 740.3,134.9 744.5,127.4 747.4,119.5 748.0,110.8"/><polyline points="736.9,142.6 736.9,150.6 735.1,158.8 736.5,166.6 739.7,174.3"/><polyline points="900.9,201.2 897.8,194.2 895.4,187.0 891.1,180.5 888.7,173.2"/><polyline points="837.3,72.6 841.9,66.3 845.2,59.1 849.6,52.6 855.3,47.1"/><polyline points="668.0,51.2 674.3,59.7 680.7,68.2 684.5,77.9 686.2,88.7"/><polyline points="668.0,51.2 658.8,54.5 649.9,54.9 641.0,53.4 632.4,48.8"/><polyline points="405.9,420.8 414.3,421.2 422.5,422.7 430.1,426.1 437.7,429.5"/><polyline points="405.9,420.8 396.4,421.9 387.1,422.5 378.8,418.3 370.9,412.9"/><polyline points="245.1,166.1 253.3,164.8 261.1,165.3 268.8,167.2 276.2,170.8"/><polyline points="708.1,215.4 700.4,212.2 694.8,206.2 688.0,201.8 682.8,195.4"/><polyline points="262.0,342.6 257.1,349.8 255.9,357.9 255.2,366.1 255.1,374.4"/><polyline points="262.0,342.6 254.3,341.8 246.6,340.8 239.2,337.9 231.4,338.0"/><polyline points="356.6,385.1 357.9,393.2 360.8,400.5 366.4,406.4 370.9,412.9"/><polyline points="686.2,88.7 694.1,90.4 702.0,91.7 709.9,91.3 717.8,89.1"/><polyline points="579.8,249.9 572.9,244.1 565.9,238.6 557.5,235.1 549.7,230.7"/><polyline points="579.8,249.9 584.2,256.6 588.1,263.5 591.4,270.6 592.8,278.6"/><polyline points="897.3,357.4 899.9,346.9 903.8,336.5 903.3,325.7 901.2,314.8"/><polyline points="895.4,140.7 895.2,149.1 894.9,157.5 892.8,165.6 888.7,173.2"/><polyline points="895.4,140.7 899.6,129.5 899.3,117.6 901.3,106.0 902.8,94.4"/></g><g fill="none" stroke="#f0c896" stroke-width="1.2" stroke-linejoin="round"><polyline points="193.0,174.6 214.5,183.2 238.2,191.8 261.9,191.8 274.8,183.2 283.4,174.6 296.3,170.3 313.5,168.1 328.6,168.1 337.2,185.3 354.4,185.3 380.0,181.0"/><polyline points="283.4,174.6 289.8,153.0 296.3,133.7 304.9,127.2 313.5,118.6 311.4,110.0 305.0,90.0 300.0,66.0"/><polyline points="304.9,127.2 326.4,131.5 343.6,129.4 360.9,122.9 380.0,114.3 400.0,110.0 430.0,100.0"/><polyline points="326.4,131.5 328.6,148.7 328.6,168.1"/><polyline points="238.2,191.8 246.8,217.6 257.6,230.5 272.6,256.3 280.0,270.0"/><polyline points="238.2,191.8 233.9,209.0 229.6,230.5 214.5,239.1 193.0,239.1"/><polyline points="261.9,191.8 270.5,204.7 285.5,213.3 304.9,219.7 313.5,224.0 330.0,232.0"/><polyline points="274.0,196.0 300.6,196.1 322.1,209.0 332.9,204.7 348.0,211.1 365.2,221.9"/><polyline points="332.9,204.7 326.4,221.9 317.8,239.1 309.2,260.0"/><polyline points="223.1,66.0 223.1,110.0 236.0,131.5 236.0,163.8 238.2,191.8"/><polyline points="193.0,226.2 214.5,221.9 229.6,230.5"/><polyline points="354.4,185.3 356.5,166.0 365.2,148.7 380.0,144.4 400.0,140.0"/><polyline points="193.0,140.0 215.0,150.0 236.0,150.0"/><polyline points="360.0,110.0 380.0,100.0 390.0,80.0 395.0,66.0"/><polyline points="250.0,66.0 255.0,90.0 260.0,110.0 275.0,120.0 296.0,133.0"/><polyline points="193.0,290.0 215.0,300.0 235.0,310.0 260.0,318.0"/><polyline points="193.0,320.0 210.0,335.0 230.0,345.0 250.0,358.0 275.0,362.0"/><polyline points="230.0,345.0 245.0,370.0 260.0,390.0 280.0,400.0 300.0,420.0 337.0,429.0"/><polyline points="215.0,300.0 220.0,280.0 230.0,265.0"/><polyline points="240.0,310.0 250.0,290.0 260.0,270.0"/><polyline points="193.0,380.0 215.0,370.0 235.0,360.0"/><polyline points="200.0,441.0 215.0,420.0 240.0,405.0 270.0,400.0"/><polyline points="310.0,441.0 320.0,420.0 330.0,400.0"/><polyline points="337.0,429.0 380.0,432.0 430.0,441.0"/><polyline points="300.0,380.0 330.0,395.0 350.0,410.0"/><polyline points="470.0,441.0 480.0,420.0 500.0,400.0 520.0,380.0 549.0,370.0"/><polyline points="549.0,370.0 580.0,385.0 620.0,380.0 657.0,368.0 700.0,372.0 744.0,388.0 770.0,400.0"/><polyline points="657.0,368.0 665.0,400.0 680.0,420.0 690.0,441.0"/><polyline points="600.0,441.0 610.0,420.0 620.0,400.0 640.0,390.0"/><polyline points="700.0,372.0 710.0,350.0 720.0,330.0 740.0,320.0"/><polyline points="744.0,388.0 780.0,420.0 800.0,441.0"/><polyline points="780.0,350.0 800.0,330.0 812.0,320.0"/><polyline points="800.0,360.0 830.0,385.0 860.0,410.0 887.0,420.0"/><polyline points="830.0,385.0 850.0,360.0 870.0,350.0"/><polyline points="540.0,441.0 560.0,420.0 590.0,410.0 620.0,420.0"/><polyline points="700.0,420.0 750.0,430.0 760.0,441.0"/><polyline points="820.0,441.0 840.0,420.0 870.0,410.0"/><polyline points="560.0,66.0 580.0,90.0 610.0,100.0 642.0,124.0"/><polyline points="642.0,124.0 665.0,110.0 690.0,95.0 712.0,80.0"/><polyline points="642.0,124.0 620.0,140.0 600.0,155.0 590.0,170.0"/><polyline points="642.0,124.0 650.0,140.0 665.0,150.0"/><polyline points="759.0,113.0 790.0,125.0 820.0,115.0 860.0,99.0"/><polyline points="759.0,113.0 745.0,95.0 735.0,75.0 730.0,66.0"/><polyline points="759.0,113.0 770.0,135.0 790.0,150.0"/><polyline points="800.0,66.0 810.0,85.0 830.0,100.0 860.0,99.0"/><polyline points="700.0,66.0 705.0,100.0 710.0,120.0 720.0,140.0"/><polyline points="500.0,95.0 530.0,90.0 560.0,80.0 580.0,90.0"/><polyline points="520.0,66.0 530.0,80.0"/><polyline points="860.0,99.0 870.0,140.0 887.0,150.0"/><polyline points="790.0,150.0 800.0,160.0"/><polyline points="560.0,160.0 580.0,150.0 600.0,155.0"/></g><g fill="none" stroke="#bcd4e8" stroke-width="0.7" stroke-linejoin="round"><polyline points="848.2,439.7 848.3,428.8 850.2,417.7 845.0,407.9 840.0,398.1"/><polyline points="848.2,439.7 841.8,437.2 835.0,436.5 828.8,433.5 822.0,432.5"/><polyline points="824.6,80.7 835.3,77.0 841.8,69.2 848.7,61.7 853.1,51.8"/><polyline points="605.6,221.9 612.8,225.4 620.1,228.8 626.6,233.2 630.5,241.1"/><polyline points="605.6,221.9 597.9,222.0 590.6,221.1 584.4,217.3 578.8,212.1"/><polyline points="192.1,81.6 193.0,92.6 191.8,103.6 193.0,114.6 191.8,125.6"/><polyline points="192.1,81.6 190.1,73.9 188.8,66.0 187.7,58.0 183.7,50.8"/><polyline points="691.6,220.8 694.9,214.3 697.5,207.7 697.3,200.7 695.7,193.4"/><polyline points="547.7,350.7 550.7,359.1 549.8,366.9 548.7,374.7 543.5,382.0"/><polyline points="653.6,303.7 660.8,296.2 668.7,289.2 672.3,279.3 676.3,269.7"/><polyline points="881.7,196.6 887.1,191.2 891.4,184.9 897.3,179.9 902.0,174.0"/><polyline points="881.7,196.6 878.4,190.6 874.2,185.0 874.5,177.8 873.1,171.3"/><polyline points="727.9,199.0 732.4,190.6 739.1,183.7 745.1,176.4 750.5,168.5"/><polyline points="727.9,199.0 735.2,201.5 742.7,203.1 750.3,204.6 757.4,207.9"/><polyline points="727.9,199.0 720.0,196.9 712.1,194.7 703.9,194.0 695.7,193.4"/><polyline points="591.0,320.1 598.7,318.3 606.2,319.3 613.7,320.5 621.2,322.1"/><polyline points="591.0,320.1 590.2,330.8 588.4,341.0 581.8,349.0 574.0,356.3"/><polyline points="591.0,320.1 586.0,314.9 580.1,311.4 573.3,309.6 566.8,307.1"/><polyline points="591.0,320.1 591.6,312.4 593.6,305.2 598.0,298.8 600.3,291.6"/><polyline points="403.2,81.6 400.3,72.5 395.2,64.3 392.7,55.1 388.0,46.8"/><polyline points="519.6,343.9 524.0,338.7 530.4,335.1 533.8,329.0 536.8,322.7"/><polyline points="642.3,121.5 640.3,114.2 639.8,106.4 635.5,99.8 633.3,92.6"/><polyline points="304.2,180.2 309.8,187.0 317.2,190.4 323.8,195.0 333.1,194.5"/><polyline points="768.8,127.2 772.8,132.3 777.8,136.9 779.5,143.6 783.0,149.1"/><polyline points="768.8,127.2 768.2,119.0 768.2,110.9 772.3,103.6 775.0,96.1"/><polyline points="768.8,127.2 764.9,121.7 760.9,116.3 756.5,111.4 750.8,107.6"/><polyline points="257.3,86.9 254.5,92.9 252.9,99.5 249.3,105.1 245.7,110.7"/><polyline points="202.4,160.4 208.9,167.6 216.0,173.9 224.5,178.0 233.6,181.4"/><polyline points="202.4,160.4 195.4,165.1 189.6,170.8 184.4,177.0 182.0,185.4"/><polyline points="202.4,160.4 195.5,159.5 188.5,158.8 181.5,158.2 175.7,153.2"/><polyline points="591.6,386.6 591.8,379.2 592.2,371.8 596.4,366.0 602.1,360.8"/><polyline points="591.6,386.6 583.7,381.0 578.4,374.0 575.3,365.7 574.0,356.3"/><polyline points="591.6,386.6 584.4,387.9 578.9,392.0 573.0,395.6 568.2,400.8"/><polyline points="415.2,199.4 415.0,190.2 413.0,180.7 417.2,172.4 422.5,164.4"/><polyline points="384.3,172.5 382.2,178.8 379.4,184.7 376.0,190.3 371.6,195.3"/><polyline points="745.4,339.5 748.1,332.3 753.2,327.8 758.5,323.5 765.7,321.4"/><polyline points="745.4,339.5 746.2,346.9 742.0,352.5 741.3,359.3 736.2,364.6"/><polyline points="745.4,339.5 738.4,341.5 731.4,340.8 724.5,342.3 717.5,339.8"/><polyline points="606.1,438.4 612.3,442.5 617.9,447.2 622.1,453.2 625.6,459.8"/><polyline points="295.9,450.6 285.6,453.8 274.7,452.7 264.3,455.0 253.8,456.8"/><polyline points="295.9,450.6 290.4,443.6 285.2,436.1 277.0,432.7 268.1,430.3"/><polyline points="214.8,218.7 215.6,207.4 220.2,198.0 226.5,189.5 233.6,181.4"/><polyline points="214.8,218.7 221.0,222.0 227.7,223.5 234.7,222.6 241.4,223.6"/><polyline points="191.0,382.0 191.1,374.8 191.3,367.7 192.0,360.5 187.3,354.0"/><polyline points="191.0,382.0 199.6,379.7 208.1,376.9 217.0,376.6 225.9,376.4"/><polyline points="191.0,382.0 187.8,387.9 186.3,394.2 184.8,400.6 184.8,407.3"/><polyline points="191.0,382.0 194.5,388.7 200.4,392.8 205.3,397.9 211.9,401.3"/><polyline points="675.0,450.1 686.0,446.2 696.4,441.0 707.0,436.2 717.0,430.1"/><polyline points="760.8,439.8 769.9,442.9 779.2,444.2 788.4,446.5 798.1,444.9"/><polyline points="760.8,439.8 753.1,444.9 743.9,447.0 736.1,452.0 728.0,456.2"/><polyline points="760.8,439.8 759.7,433.0 758.5,426.2 757.3,419.4 754.5,413.0"/><polyline points="566.6,456.1 559.5,458.9 552.5,460.3 545.7,458.6 539.1,454.2"/><polyline points="314.9,77.5 305.8,75.4 297.2,71.9 288.5,68.7 280.5,63.8"/><polyline points="314.9,77.5 319.9,84.9 322.2,93.7 326.9,101.2 331.7,108.7"/><polyline points="513.7,127.6 520.5,124.9 526.4,119.2 533.8,118.0 541.7,118.3"/><polyline points="358.5,221.0 351.3,215.2 345.2,208.3 339.5,201.1 333.1,194.5"/><polyline points="358.5,221.0 359.8,228.5 364.1,234.2 367.1,240.6 373.1,245.3"/><polyline points="830.7,230.5 827.7,222.1 822.7,214.1 820.7,205.3 821.1,195.8"/><polyline points="830.7,230.5 838.6,227.4 846.5,224.1 854.9,223.2 863.4,222.4"/><polyline points="423.9,416.3 415.5,414.4 407.2,413.9 399.2,416.6 391.1,419.0"/><polyline points="423.9,416.3 425.0,409.5 427.9,402.6 424.5,396.0 422.7,389.3"/><polyline points="679.2,390.4 671.0,395.5 662.3,399.8 653.1,403.2 645.4,409.4"/><polyline points="679.2,390.4 686.5,389.2 693.9,387.9 700.1,392.2 706.4,395.9"/><polyline points="389.2,216.0 382.3,213.0 379.2,206.7 375.4,201.0 371.6,195.3"/><polyline points="253.1,308.0 259.9,308.3 267.0,307.4 273.8,308.5 280.1,312.2"/><polyline points="253.1,308.0 243.1,301.9 233.3,295.7 222.6,291.1 211.9,286.7"/><polyline points="253.1,308.0 250.6,301.2 248.6,294.3 245.9,287.6 246.3,280.2"/><polyline points="416.4,278.1 410.0,275.5 404.0,271.9 398.6,267.1 391.5,265.9"/><polyline points="416.4,278.1 414.9,270.4 413.7,262.6 413.3,254.7 411.6,246.9"/><polyline points="416.4,278.1 425.7,276.8 432.9,280.4 440.5,283.2 446.2,290.4"/><polyline points="783.0,149.1 774.3,153.0 765.1,156.2 758.1,162.9 750.5,168.5"/><polyline points="783.0,149.1 786.8,156.4 788.3,164.6 792.0,172.0 794.5,179.8"/><polyline points="867.7,78.6 874.5,78.8 881.8,76.0 888.4,78.5 894.9,81.7"/><polyline points="583.7,270.9 576.5,269.9 569.5,266.6 562.1,267.1 554.7,268.8"/><polyline points="583.7,270.9 574.4,262.6 568.5,252.1 562.7,241.5 556.8,230.9"/><polyline points="345.4,278.8 343.8,286.0 342.4,293.2 339.2,300.2 341.2,307.9"/><polyline points="345.4,278.8 345.5,271.1 342.8,264.1 343.0,256.4 339.3,249.6"/><polyline points="517.2,232.6 512.5,224.2 506.8,216.9 499.1,211.6 491.0,206.8"/><polyline points="697.7,47.6 701.4,54.1 704.8,60.7 704.8,68.5 707.5,75.4"/><polyline points="697.7,47.6 693.5,53.8 687.9,58.0 680.8,60.2 675.1,64.3"/><polyline points="449.0,372.0 457.1,374.2 464.7,377.7 472.7,380.3 479.9,384.8"/><polyline points="449.0,372.0 442.4,376.3 435.3,379.9 429.8,385.8 422.7,389.3"/><polyline points="277.4,406.0 271.2,402.6 264.2,400.2 259.1,395.2 254.8,389.3"/><polyline points="277.4,406.0 274.2,398.6 274.1,391.5 276.6,384.4 278.8,377.3"/><polyline points="322.4,328.7 325.2,321.8 330.4,316.9 335.0,311.6 341.2,307.9"/><polyline points="391.1,419.0 385.5,413.3 378.0,410.2 373.0,404.0 366.4,399.7"/><polyline points="391.1,419.0 390.7,428.4 388.6,437.9 389.3,447.3 393.0,456.5"/><polyline points="237.0,409.8 242.4,405.5 245.3,399.1 250.9,394.9 254.8,389.3"/><polyline points="237.0,409.8 234.5,418.9 228.8,424.7 221.5,428.8 213.7,432.4"/><polyline points="237.0,409.8 231.9,404.0 225.7,401.7 219.5,399.5 211.9,401.3"/><polyline points="803.5,252.6 795.0,258.8 785.6,262.6 775.3,264.2 765.7,267.8"/><polyline points="360.2,161.4 354.1,158.3 347.9,155.2 342.6,150.9 338.1,145.4"/><polyline points="238.9,136.2 247.8,141.5 257.3,144.7 267.5,146.4 276.9,150.0"/><polyline points="366.4,399.7 366.8,391.6 366.1,383.4 367.1,375.4 368.9,367.4"/><polyline points="366.4,399.7 358.9,397.0 351.1,396.3 343.5,394.9 335.7,394.2"/><polyline points="239.9,352.4 249.0,355.1 257.9,354.3 266.7,352.5 275.4,349.7"/><polyline points="239.9,352.4 243.4,361.7 244.8,371.9 249.0,380.9 254.8,389.3"/><polyline points="239.9,352.4 238.1,359.4 235.2,365.7 231.1,371.4 225.9,376.4"/><polyline points="462.5,328.0 456.5,324.6 450.4,321.5 443.9,319.4 437.8,316.3"/><polyline points="462.5,328.0 470.2,325.3 475.7,320.6 478.0,313.1 481.5,306.7"/><polyline points="841.2,317.7 841.1,325.6 842.7,332.7 848.0,337.9 853.7,343.0"/><polyline points="838.7,121.8 837.3,130.7 832.7,137.2 827.2,143.3 820.0,148.0"/><polyline points="187.9,299.6 186.2,288.5 184.6,277.5 182.2,266.6 179.1,255.9"/><polyline points="187.9,299.6 194.6,297.6 200.9,295.1 206.9,291.8 211.9,286.7"/><polyline points="275.4,349.7 280.2,340.8 282.2,331.5 282.8,322.1 280.1,312.2"/><polyline points="275.4,349.7 283.4,355.8 292.2,359.9 301.2,363.5 311.5,363.3"/><polyline points="773.0,296.2 769.8,289.5 768.7,282.2 765.8,275.3 765.7,267.8"/><polyline points="625.7,267.3 619.7,263.1 614.2,258.4 608.5,253.8 603.3,248.6"/><polyline points="437.8,316.3 441.5,310.3 443.8,303.9 445.7,297.4 446.2,290.4"/><polyline points="717.0,430.1 711.0,426.5 704.2,425.3 697.9,422.4 691.2,421.0"/><polyline points="889.5,453.7 889.5,446.8 890.4,440.0 891.2,433.1 892.1,426.3"/><polyline points="268.2,203.7 261.9,194.5 253.1,189.2 244.9,182.8 233.6,181.4"/><polyline points="268.2,203.7 274.8,205.9 281.5,207.7 288.3,208.8 295.3,208.7"/><polyline points="268.2,203.7 266.4,196.7 265.0,189.6 265.6,182.7 269.3,175.8"/><polyline points="738.2,390.9 730.4,392.9 722.4,393.7 714.5,395.2 706.4,395.9"/><polyline points="738.2,390.9 734.1,384.6 734.0,378.0 735.1,371.3 736.2,364.6"/><polyline points="701.9,360.7 704.8,354.7 708.4,349.3 712.0,343.8 717.5,339.8"/><polyline points="564.1,133.4 558.2,138.7 552.4,144.0 549.8,151.6 547.0,158.9"/><polyline points="476.1,148.1 469.2,141.1 464.0,133.5 463.3,124.0 461.9,114.7"/><polyline points="476.1,148.1 484.0,150.1 492.3,151.3 499.4,155.0 505.5,161.3"/><polyline points="403.8,324.4 403.9,317.2 402.6,310.5 400.0,304.2 396.0,298.4"/><polyline points="403.8,324.4 398.3,328.9 394.7,334.4 393.9,341.3 392.0,347.7"/><polyline points="786.5,208.4 781.1,214.0 776.8,220.4 772.9,227.2 767.6,232.8"/><polyline points="786.5,208.4 779.2,206.9 771.9,208.6 764.7,207.1 757.4,207.9"/><polyline points="884.6,353.3 875.8,357.8 866.9,361.8 858.1,366.1 849.1,369.9"/><polyline points="690.7,323.4 697.3,320.2 700.6,314.1 705.6,309.5 708.6,303.1"/><polyline points="372.9,116.0 362.4,115.4 351.6,116.2 341.8,112.0 331.7,108.7"/><polyline points="613.1,72.4 620.3,71.1 627.0,68.1 634.6,68.3 640.9,64.2"/><polyline points="613.1,72.4 619.7,75.8 625.7,80.0 629.5,86.3 633.3,92.6"/><polyline points="280.1,312.2 287.7,309.6 294.9,306.3 302.4,303.7 308.0,297.4"/><polyline points="427.1,451.8 438.0,454.9 448.9,457.9 460.0,458.0 471.4,455.6"/><polyline points="660.3,92.6 653.5,91.1 646.8,89.3 640.0,91.6 633.3,92.6"/><polyline points="254.8,389.3 247.3,386.7 240.4,382.6 233.4,378.9 225.9,376.4"/><polyline points="254.8,389.3 260.1,385.0 266.0,381.8 272.1,378.9 278.8,377.3"/><polyline points="547.0,158.9 540.9,166.3 535.7,174.2 532.2,183.2 527.9,191.6"/><polyline points="645.4,409.4 641.5,403.4 637.6,397.4 631.3,394.1 625.1,390.7"/><polyline points="885.3,46.0 876.7,44.7 868.3,44.3 860.8,48.4 853.1,51.8"/><polyline points="885.3,46.0 892.0,53.8 894.0,62.8 896.9,71.6 894.9,81.7"/><polyline points="233.6,181.4 242.2,177.5 250.7,174.0 260.2,176.2 269.3,175.8"/><polyline points="278.2,104.0 275.5,93.8 272.1,83.5 274.8,73.6 280.5,63.8"/><polyline points="543.5,382.0 549.2,373.3 555.6,365.4 563.8,359.8 574.0,356.3"/><polyline points="543.5,382.0 536.6,382.4 530.2,380.8 524.1,378.1 518.1,375.3"/><polyline points="267.0,256.9 272.6,261.6 277.9,266.6 283.6,271.2 290.3,274.3"/><polyline points="434.8,131.1 429.8,124.7 425.5,117.7 420.6,111.2 415.9,104.5"/><polyline points="434.8,131.1 430.2,138.9 428.5,147.7 425.3,156.0 422.5,164.4"/><polyline points="434.8,131.1 435.4,122.3 437.3,113.7 439.9,105.2 442.1,96.7"/><polyline points="539.1,454.2 542.1,446.4 542.4,438.9 539.7,431.5 536.9,424.2"/><polyline points="734.1,87.1 732.3,94.0 728.4,99.8 726.7,106.7 722.1,112.2"/><polyline points="290.3,274.3 296.1,269.9 302.9,268.0 309.2,265.0 316.5,264.6"/><polyline points="290.3,274.3 296.3,278.9 300.1,285.1 303.9,291.4 308.0,297.4"/><polyline points="290.3,274.3 286.9,267.2 286.8,260.0 287.5,252.9 290.9,245.9"/><polyline points="638.3,361.0 638.1,352.3 640.7,344.6 643.9,337.1 649.4,330.5"/><polyline points="638.3,361.0 633.2,367.6 630.8,375.4 626.4,382.4 625.1,390.7"/><polyline points="850.3,156.2 852.8,165.2 854.2,174.2 850.4,182.9 848.6,191.7"/><polyline points="850.3,156.2 855.7,160.4 861.1,164.7 867.3,167.7 873.1,171.3"/><polyline points="712.3,238.6 712.7,246.2 714.9,253.8 711.3,261.0 709.6,268.3"/><polyline points="799.8,368.9 791.0,373.1 783.6,378.5 780.2,387.5 775.7,395.5"/><polyline points="799.8,368.9 795.3,362.9 791.3,356.5 786.9,350.4 783.6,343.6"/><polyline points="391.5,265.9 387.3,260.3 382.9,255.0 379.2,249.1 373.1,245.3"/><polyline points="527.9,191.6 520.3,185.5 514.6,178.0 510.2,169.5 505.5,161.3"/><polyline points="849.1,369.9 846.8,377.0 845.0,384.2 842.9,391.2 840.0,398.1"/><polyline points="849.1,369.9 842.3,367.4 835.7,364.5 829.5,360.8 823.5,356.7"/><polyline points="849.1,369.9 848.6,362.9 848.8,356.0 849.7,349.2 853.7,343.0"/><polyline points="618.5,140.4 610.1,141.7 602.5,144.6 595.7,149.3 588.9,154.0"/><polyline points="892.1,222.4 898.5,228.3 901.6,235.5 903.7,243.0 902.8,251.7"/><polyline points="820.0,148.0 812.5,155.0 804.7,161.9 798.7,170.1 794.5,179.8"/><polyline points="679.1,152.3 686.3,146.9 691.3,140.0 696.9,133.5 698.3,124.2"/><polyline points="679.1,152.3 678.4,160.3 676.8,168.2 675.7,176.1 670.1,182.8"/><polyline points="679.1,152.3 678.4,143.4 677.8,134.5 674.1,126.4 670.4,118.3"/><polyline points="890.7,107.5 890.7,100.9 891.8,94.4 893.3,88.0 894.9,81.7"/><polyline points="447.5,176.7 449.9,183.2 451.4,189.8 449.1,196.3 447.1,202.7"/><polyline points="708.6,303.1 711.1,294.5 710.6,285.8 710.8,277.1 709.6,268.3"/><polyline points="708.6,303.1 716.2,303.5 722.0,306.8 727.0,311.2 731.0,317.4"/><polyline points="640.9,64.2 631.3,61.6 622.3,58.0 614.0,52.8 606.4,46.2"/><polyline points="840.0,398.1 848.9,399.7 858.1,400.6 867.0,402.3 875.7,405.3"/><polyline points="840.0,398.1 830.1,397.2 820.2,396.3 811.2,400.6 802.3,404.9"/><polyline points="814.1,285.3 821.6,282.6 828.7,279.0 836.0,275.7 843.8,273.8"/><polyline points="253.8,456.8 246.8,445.8 236.5,440.1 226.7,433.6 213.7,432.4"/><polyline points="253.8,456.8 246.6,457.8 239.2,458.4 232.2,461.1 224.7,460.1"/><polyline points="253.8,456.8 258.5,450.8 263.3,444.8 266.9,438.2 268.1,430.3"/><polyline points="602.1,360.8 595.4,357.8 588.5,355.7 581.1,356.7 574.0,356.3"/><polyline points="175.1,214.7 180.7,224.6 181.1,234.9 180.5,245.4 179.1,255.9"/><polyline points="875.7,405.3 879.6,399.7 883.0,393.9 886.2,387.9 890.2,382.5"/><polyline points="305.3,391.2 299.8,385.4 293.2,382.0 285.3,381.0 278.8,377.3"/><polyline points="302.9,125.9 295.8,131.3 287.0,134.8 282.2,142.7 276.9,150.0"/><polyline points="764.9,65.1 757.7,58.1 749.3,54.7 740.1,53.5 730.7,52.7"/><polyline points="207.1,322.5 199.5,323.9 191.9,325.4 184.2,325.7 176.5,326.7"/><polyline points="179.1,255.9 187.1,253.9 195.1,253.1 203.2,254.3 211.2,255.2"/><polyline points="401.7,372.2 406.4,366.6 411.3,361.2 418.1,357.6 421.6,350.9"/><polyline points="401.7,372.2 399.6,366.0 398.9,359.1 396.5,353.0 392.0,347.7"/><polyline points="333.1,194.5 342.8,192.5 352.4,193.3 362.0,192.8 371.6,195.3"/><polyline points="508.9,426.9 511.2,419.9 510.4,413.1 508.5,406.3 507.1,399.5"/><polyline points="508.9,426.9 515.9,425.7 523.0,425.9 530.0,425.8 536.9,424.2"/><polyline points="767.6,232.8 765.9,226.2 763.2,220.1 760.2,214.0 757.4,207.9"/><polyline points="508.2,313.1 501.0,313.8 494.2,312.6 487.5,311.1 481.5,306.7"/><polyline points="798.1,444.9 803.6,441.1 809.7,438.1 815.0,433.7 822.0,432.5"/><polyline points="798.1,444.9 793.5,440.0 791.1,433.5 786.0,429.0 782.7,423.2"/><polyline points="316.5,264.6 313.3,272.5 309.9,280.4 308.2,288.7 308.0,297.4"/><polyline points="471.4,455.6 473.7,447.9 471.0,440.5 472.8,432.8 469.9,425.3"/><polyline points="304.5,51.7 299.1,55.9 294.6,62.0 288.3,64.4 280.5,63.8"/><polyline points="406.0,142.1 411.9,133.6 416.2,124.7 416.6,114.7 415.9,104.5"/><polyline points="368.3,328.2 372.2,335.5 377.4,341.3 384.0,345.3 392.0,347.7"/><polyline points="446.2,290.4 444.8,281.6 447.6,273.4 448.9,265.0 451.6,256.8"/><polyline points="466.9,223.2 457.7,223.9 448.4,223.1 439.2,225.5 429.9,224.8"/><polyline points="466.9,223.2 474.2,221.0 480.8,217.6 486.0,212.4 491.0,206.8"/><polyline points="466.9,223.2 461.7,231.0 457.4,239.2 455.6,248.5 451.6,256.8"/><polyline points="218.3,51.6 209.6,53.2 200.9,52.7 192.3,52.4 183.7,50.8"/><polyline points="634.7,197.4 640.6,201.1 646.2,205.5 652.7,207.8 660.0,208.2"/><polyline points="775.7,395.5 771.7,401.5 766.6,406.0 761.3,410.5 754.5,413.0"/><polyline points="568.5,184.0 572.4,175.7 575.9,167.1 583.1,161.1 588.9,154.0"/><polyline points="213.7,432.4 209.5,440.9 204.3,448.2 195.5,452.0 188.2,457.3"/><polyline points="213.7,432.4 206.4,426.2 198.6,420.6 191.8,413.9 184.8,407.3"/><polyline points="213.7,432.4 209.9,424.8 209.4,417.0 210.8,409.2 211.9,401.3"/><polyline points="882.3,144.3 878.8,150.6 877.2,157.6 875.5,164.6 873.1,171.3"/><polyline points="341.7,454.3 338.7,446.9 336.5,439.5 337.9,431.8 339.2,424.1"/><polyline points="809.6,102.8 801.4,98.8 792.8,96.7 784.1,95.7 775.0,96.1"/><polyline points="211.2,255.2 221.6,259.2 229.9,266.0 239.0,271.8 246.3,280.2"/><polyline points="343.1,362.5 349.4,364.3 356.1,364.3 362.6,365.1 368.9,367.4"/><polyline points="343.1,362.5 335.2,361.9 327.3,362.0 319.5,364.5 311.5,363.3"/><polyline points="630.5,241.1 623.7,243.1 616.7,244.2 609.8,245.5 603.3,248.6"/><polyline points="862.7,293.4 855.8,290.5 852.3,284.5 846.4,280.8 843.8,273.8"/><polyline points="494.7,266.0 487.7,267.0 481.9,270.3 476.0,273.5 470.2,277.1"/><polyline points="649.4,330.5 643.5,324.5 636.9,321.0 628.7,322.5 621.2,322.1"/><polyline points="187.3,354.0 186.2,346.5 185.2,339.1 181.1,332.8 176.5,326.7"/><polyline points="469.9,425.3 464.7,419.7 459.1,414.4 452.9,409.5 450.5,401.6"/><polyline points="853.1,51.8 843.1,48.2 833.1,45.5 822.8,47.1 812.5,48.6"/><polyline points="188.2,457.3 183.4,452.1 179.9,446.2 177.1,440.0 175.3,433.3"/><polyline points="821.1,195.8 828.4,197.2 835.0,194.6 841.7,192.6 848.6,191.7"/><polyline points="606.1,195.2 600.2,200.8 595.4,208.5 586.5,209.2 578.8,212.1"/><polyline points="393.0,456.5 385.2,454.0 379.4,449.2 373.5,444.5 369.3,437.6"/><polyline points="339.2,424.1 338.6,416.6 340.1,408.8 337.3,401.6 335.7,394.2"/><polyline points="415.9,104.5 423.3,105.3 429.8,103.2 435.9,99.8 442.1,96.7"/><polyline points="368.9,367.4 373.1,360.7 377.6,354.1 385.5,351.8 392.0,347.7"/><polyline points="665.2,237.9 663.7,230.5 660.5,223.4 660.1,215.8 660.0,208.2"/><polyline points="211.9,286.7 220.5,285.4 229.6,286.1 237.9,283.1 246.3,280.2"/><polyline points="621.2,322.1 625.0,315.5 626.4,308.3 628.6,301.3 628.6,293.8"/><polyline points="606.4,46.2 596.0,49.4 585.7,53.1 575.2,55.7 563.8,53.1"/><polyline points="311.5,363.3 304.4,369.3 296.7,374.1 287.8,375.7 278.8,377.3"/><polyline points="276.9,150.0 276.2,156.8 276.3,163.8 271.8,169.5 269.3,175.8"/><polyline points="709.0,167.4 707.0,174.6 702.3,180.4 701.1,187.9 695.7,193.4"/><polyline points="566.8,307.1 559.4,311.2 552.1,315.5 543.6,317.3 536.8,322.7"/><polyline points="566.8,307.1 560.7,303.4 554.8,299.1 548.0,296.6 541.2,294.1"/><polyline points="863.4,222.4 863.9,230.0 861.7,237.0 859.4,243.9 857.3,250.9"/><polyline points="822.0,432.5 822.3,439.5 823.6,446.4 825.6,453.3 823.9,460.5"/><polyline points="536.8,322.7 537.9,315.5 536.0,307.9 537.9,300.9 541.2,294.1"/><polyline points="625.1,390.7 618.3,393.0 613.5,397.6 608.7,402.1 605.9,408.7"/></g><g fill="none" stroke="#b5d0e6" stroke-width="0.9"><polyline points="193.0,318.0 210.0,322.0 232.0,340.0 255.0,352.0 280.0,362.0 300.0,380.0 330.0,400.0 360.0,418.0 400.0,425.0 440.0,430.0 470.0,431.0"/><polyline points="660.0,441.0 700.0,400.0 740.0,370.0 790.0,350.0 820.0,340.0"/><polyline points="600.0,90.0 640.0,110.0 680.0,95.0 700.0,100.0"/><polyline points="290.0,120.0 300.0,140.0 310.0,160.0"/><polyline points="215.0,210.0 220.0,235.0 230.0,260.0"/><polyline points="760.0,70.0 770.0,90.0 790.0,100.0"/></g><polygon points="252.0,388.0 260.0,387.0 263.0,400.0 258.0,416.0 249.0,414.0 248.0,400.0" fill="#a9cfe6"/><g fill="none" stroke="#8f8d9f" stroke-width="1.2" stroke-linejoin="round"><polyline points="193.0,113.2 212.4,125.1 231.7,125.1 233.9,120.8 255.4,122.9 257.6,118.6 253.3,131.5 259.7,142.3 257.6,153.0 261.9,159.5 268.3,153.0 266.2,142.3 274.8,143.4 283.4,155.2 287.7,163.8 294.1,170.3 294.1,183.2 299.5,193.9 294.1,206.8 302.7,211.1 317.8,221.9 326.4,227.3 335.0,228.4 343.6,239.1 355.0,238.0"/><polyline points="308.8,83.6 326.4,80.7 335.2,95.3 349.8,104.1 358.6,118.8 370.3,130.5 382.1,136.3 399.6,139.3 411.4,145.1 423.1,153.9 430.0,158.0"/><polyline points="446.5,101.2 458.3,110.0 467.1,118.8 470.0,136.3 474.0,140.0"/><polyline points="408.4,66.0 417.2,71.9 430.0,68.0"/><polyline points="528.6,104.1 531.5,115.8 534.5,123.2"/><polyline points="712.1,66.0 720.0,81.6 723.9,97.3 727.8,109.0 731.7,128.6 735.6,144.2 737.0,150.0"/><polyline points="280.7,365.1 267.0,367.8 253.3,376.0 234.1,392.5 214.9,395.2 209.4,406.2 209.4,441.0"/><polyline points="200.0,330.0 210.0,325.0 222.0,328.0 228.0,336.0 234.0,342.0 230.0,352.0 218.0,356.8 205.0,352.0 196.0,345.0 200.0,330.0"/><polyline points="340.0,441.0 360.0,425.0 405.0,430.0 440.0,420.0 470.0,420.0"/></g><g fill="none" stroke="#9a97ae" stroke-width="2" stroke-linejoin="round"><polyline points="193.0,261.0 214.9,261.0 225.9,252.7 236.8,252.7 247.8,261.0 264.2,263.7 272.5,277.4"/><polyline points="280.7,365.1 288.9,376.0 291.6,387.0 283.4,395.2 286.2,408.9 288.9,419.9 264.2,422.6 242.3,414.4 225.9,422.6 220.4,428.1 228.6,433.6 236.8,441.0"/><polyline points="812.1,313.5 816.3,309.3 830.7,318.9 840.4,333.3 854.8,343.0 869.2,347.8 887.0,343.0"/><polyline points="887.0,97.3 876.5,109.0 872.6,124.7 864.7,140.3 872.6,163.8 872.6,187.3 876.5,195.1 887.0,200.0"/><polyline points="855.0,207.0 870.0,225.0 887.0,232.0"/><polyline points="877.6,107.5 868.0,133.0 864.8,139.4 871.2,152.2 874.4,187.2 871.2,193.6 887.0,220.0"/><polyline points="469.6,371.8 479.3,381.5 488.9,400.7 498.5,429.6 505.0,441.0"/><polyline points="470.0,420.0 490.0,425.0 498.5,429.6"/></g><g font-family="Liberation Sans" font-size="9" fill="#555" stroke="#fff" stroke-width="2" paint-order="stroke" stroke-opacity="0.7"><text x="288.5" y="129.3">Olomouc</text><text x="341.5" y="188.0">Zlín</text><text x="230.5" y="193.2">Brno</text><text x="205.3" y="347.6">Wien</text><text x="337.0" y="429.5">Győr</text><text x="405.0" y="442.0">Tatabánya</text><text x="549.0" y="366.5">Salgótarján</text><text x="657.4" y="364.5">Miskolc</text><text x="744.0" y="385.5">Nyíregyháza</text><text x="642.5" y="124.8">Nowy Sącz</text><text x="759.0" y="113.0">Krosno</text><text x="860.8" y="99.3">Przemyśl</text><text x="813.3" y="284.0">Ужгород</text></g><clipPath id="cm"><polygon points="531.5,125.0 524.3,132.2 513.5,139.4 506.3,146.6 502.7,153.9 491.8,156.6 484.6,153.9 482.8,140.3 473.8,138.5 461.2,141.2 448.5,140.3 439.5,141.2 434.1,148.4 425.1,157.5 414.3,170.1 403.4,174.6 398.0,182.7 396.2,193.5 392.6,209.8 380.0,216.1 371.2,225.0 367.3,230.7 355.8,236.5 344.3,243.2 334.7,248.0 319.4,246.1 309.8,244.2 300.2,240.3 290.7,248.0 283.0,257.6 277.2,269.1 275.3,282.5 273.4,292.1 267.7,301.7 263.8,313.2 263.8,320.8 269.6,332.3 276.5,339.2 280.3,348.7 286.1,356.4 286.1,366.0 288.0,371.7 297.6,371.7 307.2,375.6 314.8,379.4 322.5,389.0 330.2,396.7 341.7,404.3 351.2,412.0 360.8,414.9 380.0,414.9 399.2,415.8 418.3,414.9 436.5,412.7 451.8,408.9 471.0,403.2 463.3,395.5 461.4,384.0 463.3,378.2 471.0,368.7 482.5,367.7 494.0,366.7 505.5,366.7 517.0,363.9 528.5,362.9 536.2,359.1 540.0,349.5 543.8,341.8 551.5,339.9 559.2,343.7 566.8,347.6 570.7,351.4 578.3,352.4 586.0,353.3 595.0,349.5 604.1,341.0 613.7,335.0 623.3,330.0 631.0,318.5 636.7,305.1 644.4,293.6 654.0,289.7 665.5,287.8 675.1,285.9 684.7,291.7 694.2,293.6 703.8,297.4 715.3,295.5 726.8,293.6 738.3,287.8 747.9,291.7 751.6,297.3 757.6,301.8 760.6,310.9 765.1,319.9 775.7,322.9 783.2,319.9 792.2,316.9 801.3,315.4 811.8,312.4 813.3,300.3 813.3,288.3 816.3,282.2 823.9,276.2 831.4,270.2 832.9,262.7 835.9,255.1 835.9,246.1 838.9,240.1 840.5,234.0 843.5,225.0 847.1,226.2 852.9,216.7 854.8,207.1 835.6,201.3 824.2,195.6 810.7,189.8 803.1,184.1 799.2,174.5 791.6,164.9 780.1,158.2 774.3,161.1 766.7,155.3 757.1,150.5 747.5,151.5 736.0,153.4 720.7,147.7 709.2,153.4 697.7,155.3 692.0,172.5 682.9,168.7 672.1,161.5 664.9,154.3 654.0,154.3 643.2,157.9 634.2,155.2 625.2,157.9 623.4,163.3 614.4,165.1 607.2,168.7 601.7,177.7 598.1,189.4 589.1,184.9 578.3,188.5 567.5,186.7 571.1,175.9 569.3,166.9 567.5,155.2 558.4,155.2 553.0,148.9 545.8,147.1 542.2,134.4 535.0,123.6"/></clipPath><polygon points="531.5,125.0 524.3,132.2 513.5,139.4 506.3,146.6 502.7,153.9 491.8,156.6 484.6,153.9 482.8,140.3 473.8,138.5 461.2,141.2 448.5,140.3 439.5,141.2 434.1,148.4 425.1,157.5 414.3,170.1 403.4,174.6 398.0,182.7 396.2,193.5 392.6,209.8 380.0,216.1 371.2,225.0 367.3,230.7 355.8,236.5 344.3,243.2 334.7,248.0 319.4,246.1 309.8,244.2 300.2,240.3 290.7,248.0 283.0,257.6 277.2,269.1 275.3,282.5 273.4,292.1 267.7,301.7 263.8,313.2 263.8,320.8 269.6,332.3 276.5,339.2 280.3,348.7 286.1,356.4 286.1,366.0 288.0,371.7 297.6,371.7 307.2,375.6 314.8,379.4 322.5,389.0 330.2,396.7 341.7,404.3 351.2,412.0 360.8,414.9 380.0,414.9 399.2,415.8 418.3,414.9 436.5,412.7 451.8,408.9 471.0,403.2 463.3,395.5 461.4,384.0 463.3,378.2 471.0,368.7 482.5,367.7 494.0,366.7 505.5,366.7 517.0,363.9 528.5,362.9 536.2,359.1 540.0,349.5 543.8,341.8 551.5,339.9 559.2,343.7 566.8,347.6 570.7,351.4 578.3,352.4 586.0,353.3 595.0,349.5 604.1,341.0 613.7,335.0 623.3,330.0 631.0,318.5 636.7,305.1 644.4,293.6 654.0,289.7 665.5,287.8 675.1,285.9 684.7,291.7 694.2,293.6 703.8,297.4 715.3,295.5 726.8,293.6 738.3,287.8 747.9,291.7 751.6,297.3 757.6,301.8 760.6,310.9 765.1,319.9 775.7,322.9 783.2,319.9 792.2,316.9 801.3,315.4 811.8,312.4 813.3,300.3 813.3,288.3 816.3,282.2 823.9,276.2 831.4,270.2 832.9,262.7 835.9,255.1 835.9,246.1 838.9,240.1 840.5,234.0 843.5,225.0 847.1,226.2 852.9,216.7 854.8,207.1 835.6,201.3 824.2,195.6 810.7,189.8 803.1,184.1 799.2,174.5 791.6,164.9 780.1,158.2 774.3,161.1 766.7,155.3 757.1,150.5 747.5,151.5 736.0,153.4 720.7,147.7 709.2,153.4 697.7,155.3 692.0,172.5 682.9,168.7 672.1,161.5 664.9,154.3 654.0,154.3 643.2,157.9 634.2,155.2 625.2,157.9 623.4,163.3 614.4,165.1 607.2,168.7 601.7,177.7 598.1,189.4 589.1,184.9 578.3,188.5 567.5,186.7 571.1,175.9 569.3,166.9 567.5,155.2 558.4,155.2 553.0,148.9 545.8,147.1 542.2,134.4 535.0,123.6" fill="#fcee00" fill-opacity="0.74"/><polygon points="697.7,155.3 709.2,153.4 720.7,147.7 736.0,153.4 737.9,159.2 734.1,163.0 739.8,170.7 741.7,178.3 745.6,187.9 747.5,199.4 739.8,197.5 732.2,199.4 722.6,197.5 713.0,193.7 707.2,187.9 697.7,184.1 691.9,183.1 692.0,172.5" fill="#63a26b" clip-path="url(#cm)"/><polygon points="657.7,195.8 668.5,184.9 679.3,186.7 691.9,183.1 697.7,184.1 709.2,189.8 714.9,201.3 711.1,209.0 701.5,214.7 695.7,209.0 684.7,206.6 675.7,204.8 661.3,199.4" fill="#63a26b" clip-path="url(#cm)"/><polygon points="621.4,229.4 631.0,224.6 642.5,219.8 650.2,225.5 661.7,226.5 669.3,221.7 680.8,225.5 690.4,228.4 698.1,239.9 700.0,247.6 696.2,255.2 680.8,257.2 673.2,261.0 665.5,271.5 659.7,266.7 655.9,261.0 646.3,255.2 644.4,251.4 634.8,245.7 629.1,239.9" fill="#63a26b" clip-path="url(#cm)"/><polygon points="774.3,161.1 780.1,158.2 791.6,164.9 799.2,174.5 803.1,184.1 810.7,189.8 806.9,195.6 799.2,199.4 789.7,203.2 782.0,199.4 776.2,193.7 774.3,187.9 782.0,176.4 778.2,164.9" fill="#63a26b" clip-path="url(#cm)"/><polygon points="810.7,189.8 824.2,195.6 835.6,201.3 854.8,207.1 852.9,216.7 847.1,226.2 841.4,235.8 835.6,239.7 824.2,238.5 814.6,232.0 801.2,228.2 805.0,220.5 805.0,210.9 806.9,201.3" fill="#63a26b" clip-path="url(#cm)"/><g fill="none" stroke="#2a2a1a" stroke-width="0.9" stroke-linejoin="round" clip-path="url(#cm)"><polyline points="423.3,168.3 434.1,165.6 444.9,164.7 452.2,162.9 459.4,160.2 466.6,163.8 475.6,171.0 482.8,171.9 491.8,169.2 499.0,170.1 499.0,161.1 497.2,152.1"/><polyline points="499.0,170.1 506.3,173.7 517.1,171.9 527.9,175.5 535.1,164.7 540.0,159.3 545.8,156.1 553.0,148.9"/><polyline points="452.2,162.9 455.8,171.9 463.0,179.1 470.2,180.0 477.4,179.1 478.3,173.7 475.6,171.0"/><polyline points="444.9,164.7 446.7,177.3 445.8,188.1 444.9,200.8"/><polyline points="423.3,168.3 428.7,179.1 434.1,186.3 441.3,197.1 444.9,200.8 443.1,204.4 444.9,209.8 444.9,218.8 441.3,222.4 432.3,224.2 426.9,226.0"/><polyline points="408.9,173.7 412.5,182.7 419.7,191.7 423.3,202.6 425.1,220.6 426.9,226.0"/><polyline points="396.2,197.1 403.4,206.2 412.5,213.4 421.5,218.8 425.1,220.6"/><polyline points="426.9,226.0 434.1,229.6 444.9,228.7 455.8,226.0 464.8,229.6 475.6,233.2 482.8,236.8 491.8,238.6 499.0,236.8 513.5,237.7 524.3,233.2 540.0,229.6 549.4,230.0 571.1,231.8 587.3,235.4 596.3,235.4 618.0,240.0"/><polyline points="444.9,228.7 448.5,222.4 457.6,218.8 466.6,206.2 470.2,197.1 481.0,193.5 490.0,189.9 495.4,186.3 499.0,170.1"/><polyline points="495.4,186.3 502.7,195.3 509.9,197.1 517.1,195.3 524.3,193.5 531.5,195.3 535.0,192.2 540.4,184.9 542.2,179.5"/><polyline points="502.7,195.3 499.0,206.2 497.2,220.6 499.0,233.2 499.0,236.8"/><polyline points="531.5,195.3 529.7,209.8 524.3,222.4 524.3,233.2"/><polyline points="393.5,217.0 396.2,227.8 398.0,233.2 407.1,235.0 417.9,231.4 426.9,226.0"/><polyline points="535.0,174.1 542.2,179.5 549.4,183.1 560.3,186.7 567.5,186.7"/><polyline points="578.3,188.5 580.1,199.4 587.3,195.8 583.7,201.2 592.7,208.4 592.7,217.4 587.3,221.0 592.7,230.0 596.3,235.4"/><polyline points="609.0,170.5 614.4,174.1 621.6,175.9 625.2,183.1 628.8,190.3 627.0,195.8 619.8,197.6 621.6,204.8 628.8,210.2 636.0,213.8 645.0,208.4 657.7,195.8"/><polyline points="634.2,155.2 632.4,170.5 643.2,177.7 650.4,188.5 657.7,195.8"/><polyline points="682.9,177.7 691.9,172.3"/><polyline points="636.0,213.8 639.6,221.0 642.5,219.8"/><polyline points="690.4,228.4 690.1,217.4 684.7,206.6"/><polyline points="417.2,233.6 424.6,244.8 427.1,254.7 423.4,263.4 417.2,268.4 407.3,273.3 399.8,269.6 387.4,267.1 380.0,262.2"/><polyline points="417.2,233.6 407.3,237.4 404.8,247.3 402.3,256.0 389.9,259.7 380.7,255.7"/><polyline points="419.7,267.1 429.6,273.3 434.6,284.5 447.0,282.0 451.9,277.0 464.3,269.6 469.3,257.2 456.9,242.3 454.4,228.7"/><polyline points="469.3,257.2 479.2,257.2 486.6,254.7 486.6,239.8"/><polyline points="486.6,254.7 489.1,272.1 499.0,277.0 511.4,277.0 521.4,275.8 536.3,273.3 528.8,254.7 526.3,239.8 524.3,233.2"/><polyline points="536.3,273.3 558.6,274.6 563.5,269.6 573.5,259.7 585.9,252.2 608.0,251.4"/><polyline points="380.0,267.1 387.4,277.0 404.8,277.0 409.8,284.5 412.2,299.4"/><polyline points="432.1,291.9 437.0,306.8 439.5,319.2 444.5,321.7 459.4,314.2 469.3,306.8 461.8,291.9 451.9,277.0"/><polyline points="412.2,329.1 427.1,334.1 439.5,319.2"/><polyline points="461.8,291.9 474.2,301.8 484.2,291.9 486.6,274.6"/><polyline points="484.2,291.9 486.6,306.8 484.2,319.2 474.2,329.1 466.8,319.2 469.3,306.8"/><polyline points="474.2,329.1 469.3,341.5 466.8,350.2 474.2,351.4 494.1,344.0 509.0,334.1 509.0,321.7 499.0,316.7 489.1,311.8 486.6,306.8"/><polyline points="494.1,344.0 491.6,358.9 489.1,366.7"/><polyline points="518.9,287.0 511.4,299.4 518.9,309.3 516.4,319.2 523.8,331.6"/><polyline points="518.9,287.0 526.3,289.4 538.7,277.0"/><polyline points="526.3,289.4 528.8,301.8 533.8,319.2 543.7,334.1 541.2,344.0"/><polyline points="528.8,301.8 538.7,299.4 553.6,294.4 558.6,287.0 558.6,274.6"/><polyline points="553.6,294.4 551.1,301.8 556.1,314.2 568.5,319.2 580.9,316.7 578.4,299.4 571.0,287.0 563.5,277.0 558.6,274.6"/><polyline points="568.5,319.2 575.9,329.1 578.4,344.0 578.3,352.4"/><polyline points="580.9,316.7 595.8,316.7 606.1,303.2"/><polyline points="585.9,252.2 590.8,264.6 595.8,279.5 598.4,287.8"/><polyline points="277.2,271.0 294.5,269.1 309.8,261.4 317.5,257.6 319.4,253.7 319.4,246.1"/><polyline points="317.5,257.6 323.2,253.7 329.0,259.5 327.1,265.2 332.8,276.7 342.4,272.9 353.9,271.0 344.3,255.7 344.3,243.2"/><polyline points="353.9,271.0 365.4,276.7 375.0,278.7 382.7,280.6 384.6,267.2 380.7,255.7 371.2,248.0 365.4,236.5"/><polyline points="398.0,225.0 398.0,232.7 407.1,235.0 417.1,234.6 426.9,226.0"/><polyline points="417.1,234.6 417.1,238.4"/><polyline points="273.4,292.1 288.7,290.2 304.1,286.3 311.7,280.6 315.6,276.7 317.5,280.6 309.8,292.1 315.6,297.8"/><polyline points="332.8,276.7 325.2,288.2 315.6,297.8 311.7,305.5 302.2,317.0 296.4,332.3 294.5,340.0 295.7,339.2"/><polyline points="311.7,305.5 327.1,318.9 327.1,326.6 332.8,334.2 336.7,340.0"/><polyline points="342.4,272.9 336.7,286.3 344.3,294.0 350.1,301.7 353.9,313.2 355.8,324.7 342.4,332.3 332.8,334.2"/><polyline points="382.7,280.6 369.2,286.3 365.4,297.8 359.7,297.8 350.1,301.7"/><polyline points="365.4,297.8 378.8,305.5 384.6,307.4 394.2,309.3 403.7,307.4 413.3,299.7 422.9,297.8 430.0,292.0 434.6,284.5"/><polyline points="384.6,307.4 375.0,318.9 367.3,322.7 355.8,324.7"/><polyline points="367.3,322.7 369.2,336.2 372.3,331.5"/><polyline points="405.6,276.7 409.5,290.2 413.3,299.7"/><polyline points="403.7,307.4 409.5,320.8 419.1,328.5 425.0,334.2"/><polyline points="274.6,337.2 288.0,338.2 295.7,339.2"/><polyline points="295.7,339.2 303.3,344.9 303.3,358.3 309.1,360.2 305.2,364.1 299.5,366.0 301.4,371.7"/><polyline points="295.7,339.2 297.6,329.6 299.5,320.0"/><polyline points="303.3,344.9 312.9,339.2 322.5,335.3 332.1,337.2 341.7,329.6 351.2,325.7 357.0,323.8 369.2,320.0"/><polyline points="326.3,320.0 326.3,329.6 332.1,337.2"/><polyline points="332.1,337.2 328.2,341.1 332.1,344.9 332.1,350.7 326.3,354.5 320.6,352.6 314.8,358.3 309.1,360.2"/><polyline points="326.3,354.5 334.0,358.3 341.7,360.2 349.3,366.0 358.9,369.8 368.5,377.5 370.4,389.0 364.7,396.7 358.9,404.3 353.2,412.0"/><polyline points="368.5,333.4 370.4,341.1 364.7,346.8 360.8,354.5 366.6,362.2 368.5,367.9 368.5,377.5"/><polyline points="369.2,336.2 372.3,331.5 380.0,337.2 381.9,344.9 380.0,356.4 381.9,366.0 383.8,373.7 380.0,381.3 370.4,379.0"/><polyline points="380.0,381.3 389.6,381.3 395.3,381.3 403.0,385.2 414.5,389.0 422.1,396.7 429.8,400.5 436.5,412.7"/><polyline points="380.0,356.4 387.7,352.6 399.2,346.8 404.9,348.7 414.5,346.8 422.1,350.7 427.9,358.3 429.8,367.9 431.7,377.5 432.7,384.0"/><polyline points="422.1,350.7 418.3,344.9 424.1,335.3 425.0,334.2"/><polyline points="409.5,320.8 408.7,327.7 416.4,331.5 424.1,335.3"/><polyline points="425.0,355.2 430.7,362.9 428.8,376.3 432.7,384.0 444.2,385.9 455.7,384.0 461.4,384.0"/><polyline points="425.0,395.5 434.6,405.1 436.5,412.7"/><polyline points="585.0,234.2 594.6,234.2 604.2,236.1 613.7,238.0 621.4,229.4"/><polyline points="613.7,238.0 615.7,241.8 609.9,255.2 608.0,261.0 613.7,268.7 619.5,274.4 625.2,282.1 627.2,291.7 621.4,301.2 627.2,303.2 638.7,303.2"/><polyline points="608.0,251.4 609.9,255.2"/><polyline points="590.0,254.3 592.7,272.5 598.4,287.8 598.4,295.5 606.1,303.2 613.7,308.9 623.3,314.7 631.0,318.5"/><polyline points="575.0,319.0 590.0,312.7 598.4,295.5"/><polyline points="665.5,271.5 675.1,276.3 673.2,285.9"/><polyline points="700.0,236.1 715.3,239.9 721.1,245.7 726.8,243.7 736.4,238.0 744.1,236.1 747.0,234.0"/><polyline points="736.4,215.0 738.3,226.5 744.1,236.1 749.8,253.3 747.9,268.7 751.7,278.2 747.9,291.7"/><polyline points="707.7,249.5 713.4,251.4 719.2,255.2 723.0,253.3 726.8,261.0 728.7,272.5 730.6,276.3 717.2,276.3 715.3,282.1 717.2,287.8 711.5,285.9 707.7,280.2 705.7,272.5 709.6,264.8 707.7,257.2 707.7,249.5"/><polyline points="696.2,255.2 700.0,265.0 706.0,272.0"/><polyline points="764.7,168.7 759.0,176.4 757.1,186.0 753.2,201.3 757.1,210.9 760.9,212.8"/><polyline points="764.7,168.7 768.6,166.8 772.4,174.5"/><polyline points="747.5,199.4 751.3,201.3 753.2,201.3"/><polyline points="760.9,212.8 768.6,201.3 774.3,187.9"/><polyline points="768.6,201.3 770.5,209.0 772.4,216.7 774.3,228.2 774.3,237.7 778.2,247.3 774.3,260.0"/><polyline points="774.3,237.7 785.8,239.7 799.2,243.5 808.8,243.5 812.7,237.7 814.6,232.0"/><polyline points="737.9,203.2 741.7,209.0 736.0,216.7 737.9,226.2 743.7,235.8 745.6,243.5 743.7,251.2 749.4,260.0"/><polyline points="743.7,235.8 734.1,239.7 728.3,241.6 720.7,247.3 711.1,249.2 705.3,239.7 697.7,235.8"/><polyline points="737.9,203.2 747.5,199.4"/><polyline points="734.1,163.0 745.6,161.1 757.1,150.5"/><polyline points="739.5,225.0 742.5,234.0 744.0,241.6 750.1,253.6 760.6,255.1 768.1,256.6 774.2,253.6 775.7,238.6 774.3,228.2"/><polyline points="750.1,253.6 748.6,270.2 751.6,280.7 747.1,285.3 744.0,289.8"/><polyline points="775.7,238.6 784.7,238.6 793.8,244.6 801.3,244.6 810.3,243.1 813.3,238.6 811.8,232.5"/><polyline points="813.3,238.6 811.8,246.1 804.3,252.1 804.3,261.2 804.3,268.7 808.8,277.7 813.3,286.8"/><polyline points="768.1,256.6 769.6,264.2 774.2,273.2 775.7,282.2 778.7,294.3 778.7,303.3 787.7,298.8 798.3,297.3 810.3,303.3"/><polyline points="644.4,251.4 652.1,239.9 657.8,239.9 659.7,242.8 669.3,245.7 680.8,241.8 684.7,234.2 680.8,225.5"/><polygon points="697.7,155.3 709.2,153.4 720.7,147.7 736.0,153.4 737.9,159.2 734.1,163.0 739.8,170.7 741.7,178.3 745.6,187.9 747.5,199.4 739.8,197.5 732.2,199.4 722.6,197.5 713.0,193.7 707.2,187.9 697.7,184.1 691.9,183.1 692.0,172.5"/><polygon points="657.7,195.8 668.5,184.9 679.3,186.7 691.9,183.1 697.7,184.1 709.2,189.8 714.9,201.3 711.1,209.0 701.5,214.7 695.7,209.0 684.7,206.6 675.7,204.8 661.3,199.4"/><polygon points="621.4,229.4 631.0,224.6 642.5,219.8 650.2,225.5 661.7,226.5 669.3,221.7 680.8,225.5 690.4,228.4 698.1,239.9 700.0,247.6 696.2,255.2 680.8,257.2 673.2,261.0 665.5,271.5 659.7,266.7 655.9,261.0 646.3,255.2 644.4,251.4 634.8,245.7 629.1,239.9"/><polygon points="774.3,161.1 780.1,158.2 791.6,164.9 799.2,174.5 803.1,184.1 810.7,189.8 806.9,195.6 799.2,199.4 789.7,203.2 782.0,199.4 776.2,193.7 774.3,187.9 782.0,176.4 778.2,164.9"/><polygon points="810.7,189.8 824.2,195.6 835.6,201.3 854.8,207.1 852.9,216.7 847.1,226.2 841.4,235.8 835.6,239.7 824.2,238.5 814.6,232.0 801.2,228.2 805.0,220.5 805.0,210.9 806.9,201.3"/></g><g font-family="Liberation Sans" font-size="9" fill="#c8b400" opacity="0.8"><text x="373.8" y="240.5">Trenčín</text><text x="449.3" y="188.5">Žilina</text><text x="327.3" y="320.5">Trnava</text><text x="383.9" y="331.0">Nitra</text><text x="514.0" y="265.0">Slovensko</text><text x="706.3" y="224.8">Prešov</text><text x="708.0" y="268.0">Košice</text><text x="273.2" y="356.5">Bratislava</text></g><polygon points="531.5,125.0 524.3,132.2 513.5,139.4 506.3,146.6 502.7,153.9 491.8,156.6 484.6,153.9 482.8,140.3 473.8,138.5 461.2,141.2 448.5,140.3 439.5,141.2 434.1,148.4 425.1,157.5 414.3,170.1 403.4,174.6 398.0,182.7 396.2,193.5 392.6,209.8 380.0,216.1 371.2,225.0 367.3,230.7 355.8,236.5 344.3,243.2 334.7,248.0 319.4,246.1 309.8,244.2 300.2,240.3 290.7,248.0 283.0,257.6 277.2,269.1 275.3,282.5 273.4,292.1 267.7,301.7 263.8,313.2 263.8,320.8 269.6,332.3 276.5,339.2 280.3,348.7 286.1,356.4 286.1,366.0 288.0,371.7 297.6,371.7 307.2,375.6 314.8,379.4 322.5,389.0 330.2,396.7 341.7,404.3 351.2,412.0 360.8,414.9 380.0,414.9 399.2,415.8 418.3,414.9 436.5,412.7 451.8,408.9 471.0,403.2 463.3,395.5 461.4,384.0 463.3,378.2 471.0,368.7 482.5,367.7 494.0,366.7 505.5,366.7 517.0,363.9 528.5,362.9 536.2,359.1 540.0,349.5 543.8,341.8 551.5,339.9 559.2,343.7 566.8,347.6 570.7,351.4 578.3,352.4 586.0,353.3 595.0,349.5 604.1,341.0 613.7,335.0 623.3,330.0 631.0,318.5 636.7,305.1 644.4,293.6 654.0,289.7 665.5,287.8 675.1,285.9 684.7,291.7 694.2,293.6 703.8,297.4 715.3,295.5 726.8,293.6 738.3,287.8 747.9,291.7 751.6,297.3 757.6,301.8 760.6,310.9 765.1,319.9 775.7,322.9 783.2,319.9 792.2,316.9 801.3,315.4 811.8,312.4 813.3,300.3 813.3,288.3 816.3,282.2 823.9,276.2 831.4,270.2 832.9,262.7 835.9,255.1 835.9,246.1 838.9,240.1 840.5,234.0 843.5,225.0 847.1,226.2 852.9,216.7 854.8,207.1 835.6,201.3 824.2,195.6 810.7,189.8 803.1,184.1 799.2,174.5 791.6,164.9 780.1,158.2 774.3,161.1 766.7,155.3 757.1,150.5 747.5,151.5 736.0,153.4 720.7,147.7 709.2,153.4 697.7,155.3 692.0,172.5 682.9,168.7 672.1,161.5 664.9,154.3 654.0,154.3 643.2,157.9 634.2,155.2 625.2,157.9 623.4,163.3 614.4,165.1 607.2,168.7 601.7,177.7 598.1,189.4 589.1,184.9 578.3,188.5 567.5,186.7 571.1,175.9 569.3,166.9 567.5,155.2 558.4,155.2 553.0,148.9 545.8,147.1 542.2,134.4 535.0,123.6" fill="none" stroke="#1e1e1e" stroke-width="1.4" stroke-linejoin="round"/></svg>
</div>
<div class="lbar" style="left:202px;top:73px;width:24px;height:47px;z-index:5"><div class="a" style="left:0;top:22px;width:22px;height:1px;background:#d0d0d0"></div><svg class="a" style="left:0;top:0" width="22" height="45" viewBox="0 0 22 45"><rect x="6.4" y="11.7" width="10.2" height="2.3" fill="#1d3b73"/><rect x="10.4" y="7.7" width="2.3" height="10.2" fill="#1d3b73"/><rect x="6.6" y="34.1" width="10.2" height="1.3" fill="#2457a6"/></svg></div>
<div class="lbar" style="left:202px;top:129px;width:24px;height:23px;z-index:5"></div>
<div class="lbar" style="left:239px;top:73px;width:66px;height:44px;z-index:5"></div>
<div class="lbar" style="left:388px;top:73px;width:300px;height:28px;z-index:5"><div class="a" style="left:20.6px;top:6.74px;white-space:nowrap;font-weight:bold;font-size:12px;line-height:12px;color:#1f4f9a">Meteorologické výstrahy - Štvrtok - 24.7.2025</div></div>
<div class="lbar" style="left:762px;top:366px;width:113px;height:52px;z-index:5"></div>
<div class="lbar" style="left:595px;top:389px;width:160px;height:29px;z-index:5"></div>
<div class="a" style="left:706px;top:428px;width:176px;height:12.5px;background:rgba(255,255,255,0.8);z-index:5;font-size:9px;line-height:15.4px;text-align:right;padding-right:3px;color:#222"><span style="display:inline-block;width:9px;height:6px;vertical-align:-0.5px;margin-right:3px;background:linear-gradient(#0057b7 50%,#ffd500 50%)"></span><span style="color:#1f66a6">Leaflet</span> | © OpenStreetmap contributors</div>
<svg class="a" style="left:239px;top:73px;z-index:6" width="66" height="44" viewBox="0 0 66 44">
<g fill="#1f66d0" stroke="none">
<rect x="32.3" y="6" width="1.2" height="13"/>
<circle cx="31" cy="6.8" r="1.6"/><circle cx="35" cy="6.8" r="1.6"/>
<rect x="23.5" y="13" width="18" height="1.3"/>
<polygon points="23,13.6 26,12.2 26,15"/>
<rect x="40.6" y="10.5" width="2" height="7.5"/>
</g>
<text x="5.6" y="28" font-family="Liberation Serif" font-weight="bold" font-size="11.6" fill="#1f66d0" stroke="#1f66d0" stroke-width="0.9" textLength="54.6" lengthAdjust="spacingAndGlyphs">SHMU</text>
<g fill="none" stroke="#1f66d0" stroke-width="1.6">
<path d="M5 31 q3.5 -2.4 7 0 t7 0 t7 0 t7 0 t7 0 t7 0 t7 0 t7 0"/>
<path d="M5 34.3 q3.5 -2.4 7 0 t7 0 t7 0 t7 0 t7 0 t7 0 t7 0 t7 0"/>
<path d="M5 37.6 q3.5 -2.4 7 0 t7 0 t7 0 t7 0 t7 0 t7 0 t7 0 t7 0"/>
</g></svg>
<svg class="a" style="left:202px;top:129px;z-index:6" width="24" height="23" viewBox="0 0 24 23"><g fill="none" stroke="#3a3a3a" stroke-width="1.7"><path d="M6.8 9.2V5.8h3.6M14.2 5.8h3.6v3.4M17.8 13.2v3.6h-3.6M10.4 16.8H6.8v-3.6"/></g></svg>
<svg class="a" style="left:753px;top:41px;z-index:6" width="130" height="25" viewBox="0 0 130 25"><path d="M14 22.3 C8.5 22.3 7.5 14 13.8 13 C14.5 5 22.5 1.5 28.3 5 C32 3 37.5 6.5 36.3 11.8 C42 12.8 41.5 22.3 35 22.3 Z" fill="none" stroke="#d9d9d9" stroke-width="1.4"/><path d="M16.8 19 C19.6 18.6 20.2 16.5 20.2 13.5 C20.2 10 22 8.2 24.4 8.2 C26.8 8.2 28.6 10 28.6 13.5 C28.6 16.5 29.2 18.6 32 19" fill="none" stroke="#3f6d96" stroke-width="2.3" stroke-linecap="round"/><polygon points="22.2,20.4 26.6,20.4 24.4,22.4" fill="#3f6d96"/><text x="46" y="10.9" font-family="Liberation Sans" font-weight="bold" font-size="9" fill="#8a8a8a" letter-spacing="1.15">METEOALARM</text><circle cx="49" cy="17" r="2.6" fill="none" stroke="#a5a5a5" stroke-width="1.1"/><text x="54" y="19.7" font-family="Liberation Sans" font-weight="bold" font-size="7" fill="#a3a3a3" letter-spacing="0.1">EUMETNET</text></svg>
<div class="a" style="left:762.5px;top:366.5px;width:112px;height:51px;z-index:6"><div class="a" style="left:4.3px;top:6.0px;width:9px;height:9px;background:#56874c;border-radius:1px"></div><div class="a" style="left:15.8px;top:5.7px;font-size:7.7px;line-height:9px;white-space:nowrap;color:#222">Bez nebezpečných javov</div><div class="a" style="left:4.3px;top:16.7px;width:9px;height:9px;background:#fff500;border-radius:1px"></div><div class="a" style="left:15.8px;top:16.4px;font-size:7.7px;line-height:9px;white-space:nowrap;color:#222">1. stupeň</div><div class="a" style="left:4.3px;top:27.4px;width:9px;height:9px;background:#ef8c34;border-radius:1px"></div><div class="a" style="left:15.8px;top:27.1px;font-size:7.7px;line-height:9px;white-space:nowrap;color:#222">2. stupeň</div><div class="a" style="left:4.3px;top:38.1px;width:9px;height:9px;background:#f01818;border-radius:1px"></div><div class="a" style="left:15.8px;top:37.8px;font-size:7.7px;line-height:9px;white-space:nowrap;color:#222">3. stupeň</div></div>
<div class="a" style="left:600.5px;top:394.1px;font-size:6.75px;line-height:10px;white-space:nowrap;color:#222;z-index:6">Aktualizované: 23.7.2025 17:33<br>Najbližšia aktualizácia najneskôr: 24.7.2025 00:00</div>
<div class="a" style="left:346px;top:460.14px;font-weight:bold;font-size:13.3px;line-height:13.3px;color:#2a5a9e;white-space:nowrap">Tabuľkové zobrazenie výstrah</div>
<div class="a" style="left:0;top:481px;width:882px;height:41px;background:#f0f5fc"></div><div class="a" style="left:209px;top:523px;width:27px;height:21px;background:#2f7e3d"></div><div class="a" style="left:237px;top:523px;width:27px;height:21px;background:#2f7e3d"></div><div class="a" style="left:265px;top:523px;width:27px;height:21px;background:#2f7e3d"></div><div class="a" style="left:293px;top:523px;width:27px;height:21px;background:#2f7e3d"></div><div class="a" style="left:321px;top:523px;width:27px;height:21px;background:#2f7e3d"></div><div class="a" style="left:349px;top:523px;width:28px;height:21px;background:#2f7e3d"></div><div class="a" style="left:378px;top:523px;width:27px;height:21px;background:#2f7e3d"></div><div class="a" style="left:406px;top:523px;width:27px;height:21px;background:#2f7e3d"></div><div class="a" style="left:434px;top:523px;width:27px;height:21px;background:#2f7e3d"></div><div class="a" style="left:462px;top:523px;width:27px;height:21px;background:#2f7e3d"></div><div class="a" style="left:490px;top:523px;width:27px;height:21px;background:#2f7e3d"></div><div class="a" style="left:518px;top:523px;width:27px;height:21px;background:#2f7e3d"></div><div class="a" style="left:546px;top:523px;width:27px;height:21px;background:#2f7e3d"></div><div class="a" style="left:574px;top:523px;width:27px;height:21px;background:#fff000"></div><div class="a" style="left:574px;top:528.91px;width:27px;text-align:center;font-weight:bold;font-size:10.5px;line-height:10.5px">1</div><div class="a" style="left:602px;top:523px;width:27px;height:21px;background:#fff000"></div><div class="a" style="left:602px;top:528.91px;width:27px;text-align:center;font-weight:bold;font-size:10.5px;line-height:10.5px">1</div><div class="a" style="left:630px;top:523px;width:27px;height:21px;background:#fff000"></div><div class="a" style="left:630px;top:528.91px;width:27px;text-align:center;font-weight:bold;font-size:10.5px;line-height:10.5px">1</div><div class="a" style="left:658px;top:523px;width:27px;height:21px;background:#fff000"></div><div class="a" style="left:658px;top:528.91px;width:27px;text-align:center;font-weight:bold;font-size:10.5px;line-height:10.5px">1</div><div class="a" style="left:686px;top:523px;width:27px;height:21px;background:#fff000"></div><div class="a" style="left:686px;top:528.91px;width:27px;text-align:center;font-weight:bold;font-size:10.5px;line-height:10.5px">1</div><div class="a" style="left:714px;top:523px;width:27px;height:21px;background:#fff000"></div><div class="a" style="left:714px;top:528.91px;width:27px;text-align:center;font-weight:bold;font-size:10.5px;line-height:10.5px">1</div><div class="a" style="left:742px;top:523px;width:28px;height:21px;background:#fff000"></div><div class="a" style="left:742px;top:528.91px;width:28px;text-align:center;font-weight:bold;font-size:10.5px;line-height:10.5px">1</div><div class="a" style="left:771px;top:523px;width:27px;height:21px;background:#fff000"></div><div class="a" style="left:771px;top:528.91px;width:27px;text-align:center;font-weight:bold;font-size:10.5px;line-height:10.5px">1</div><div class="a" style="left:799px;top:523px;width:27px;height:21px;background:#fff000"></div><div class="a" style="left:799px;top:528.91px;width:27px;text-align:center;font-weight:bold;font-size:10.5px;line-height:10.5px">1</div><div class="a" style="left:827px;top:523px;width:27px;height:21px;background:#fff000"></div><div class="a" style="left:827px;top:528.91px;width:27px;text-align:center;font-weight:bold;font-size:10.5px;line-height:10.5px">1</div><div class="a" style="left:855px;top:523px;width:27px;height:21px;background:#2f7e3d"></div><div class="a" style="left:41.7px;top:528.71px;font-weight:bold;font-size:10.5px;line-height:10.5px;white-space:nowrap">Bratislavský kraj</div><svg class="a" style="left:0;top:522.00px" width="36" height="21" viewBox="0 0 36 21"><rect x="11.9" y="9" width="11.3" height="2.9" fill="#1f4e8c"/><rect x="15.8" y="5.1" width="3.6" height="10.6" fill="#1f4e8c"/></svg><svg class="a" style="left:187.1px;top:525.1px" width="18" height="18" viewBox="0 0 18 18"><rect x="0.6" y="0.6" width="16.8" height="16.8" fill="#fff21a" stroke="#000" stroke-width="1.2"/><path d="M3.8 9.3 C4 6.5 6.5 5.2 9 5.2 C11.5 5.2 14 6.5 14.2 9.3 Z" fill="#000"/><path d="M9 9.3 V11.5" stroke="#000" stroke-width="0.8"/><polygon points="9,10.6 9.9,11.6 9,12.6 8.1,11.6" fill="#000"/></svg><div class="a" style="left:209px;top:545px;width:27px;height:20px;background:#2f7e3d"></div><div class="a" style="left:237px;top:545px;width:27px;height:20px;background:#2f7e3d"></div><div class="a" style="left:265px;top:545px;width:27px;height:20px;background:#2f7e3d"></div><div class="a" style="left:293px;top:545px;width:27px;height:20px;background:#2f7e3d"></div><div class="a" style="left:321px;top:545px;width:27px;height:20px;background:#2f7e3d"></div><div class="a" style="left:349px;top:545px;width:28px;height:20px;background:#2f7e3d"></div><div class="a" style="left:378px;top:545px;width:27px;height:20px;background:#2f7e3d"></div><div class="a" style="left:406px;top:545px;width:27px;height:20px;background:#2f7e3d"></div><div class="a" style="left:434px;top:545px;width:27px;height:20px;background:#2f7e3d"></div><div class="a" style="left:462px;top:545px;width:27px;height:20px;background:#2f7e3d"></div><div class="a" style="left:490px;top:545px;width:27px;height:20px;background:#2f7e3d"></div><div class="a" style="left:518px;top:545px;width:27px;height:20px;background:#2f7e3d"></div><div class="a" style="left:546px;top:545px;width:27px;height:20px;background:#2f7e3d"></div><div class="a" style="left:574px;top:545px;width:27px;height:20px;background:#fff000"></div><div class="a" style="left:574px;top:550.16px;width:27px;text-align:center;font-weight:bold;font-size:10.5px;line-height:10.5px">1</div><div class="a" style="left:602px;top:545px;width:27px;height:20px;background:#fff000"></div><div class="a" style="left:602px;top:550.16px;width:27px;text-align:center;font-weight:bold;font-size:10.5px;line-height:10.5px">1</div><div class="a" style="left:630px;top:545px;width:27px;height:20px;background:#fff000"></div><div class="a" style="left:630px;top:550.16px;width:27px;text-align:center;font-weight:bold;font-size:10.5px;line-height:10.5px">1</div><div class="a" style="left:658px;top:545px;width:27px;height:20px;background:#fff000"></div><div class="a" style="left:658px;top:550.16px;width:27px;text-align:center;font-weight:bold;font-size:10.5px;line-height:10.5px">1</div><div class="a" style="left:686px;top:545px;width:27px;height:20px;background:#fff000"></div><div class="a" style="left:686px;top:550.16px;width:27px;text-align:center;font-weight:bold;font-size:10.5px;line-height:10.5px">1</div><div class="a" style="left:714px;top:545px;width:27px;height:20px;background:#fff000"></div><div class="a" style="left:714px;top:550.16px;width:27px;text-align:center;font-weight:bold;font-size:10.5px;line-height:10.5px">1</div><div class="a" style="left:742px;top:545px;width:28px;height:20px;background:#fff000"></div><div class="a" style="left:742px;top:550.16px;width:28px;text-align:center;font-weight:bold;font-size:10.5px;line-height:10.5px">1</div><div class="a" style="left:771px;top:545px;width:27px;height:20px;background:#fff000"></div><div class="a" style="left:771px;top:550.16px;width:27px;text-align:center;font-weight:bold;font-size:10.5px;line-height:10.5px">1</div><div class="a" style="left:799px;top:545px;width:27px;height:20px;background:#fff000"></div><div class="a" style="left:799px;top:550.16px;width:27px;text-align:center;font-weight:bold;font-size:10.5px;line-height:10.5px">1</div><div class="a" style="left:827px;top:545px;width:27px;height:20px;background:#fff000"></div><div class="a" style="left:827px;top:550.16px;width:27px;text-align:center;font-weight:bold;font-size:10.5px;line-height:10.5px">1</div><div class="a" style="left:855px;top:545px;width:27px;height:20px;background:#2f7e3d"></div><div class="a" style="left:41.7px;top:549.96px;font-weight:bold;font-size:10.5px;line-height:10.5px;white-space:nowrap">Banskobystrický kraj</div><svg class="a" style="left:0;top:543.25px" width="36" height="21" viewBox="0 0 36 21"><rect x="11.9" y="9" width="11.3" height="2.9" fill="#1f4e8c"/><rect x="15.8" y="5.1" width="3.6" height="10.6" fill="#1f4e8c"/></svg><svg class="a" style="left:187.1px;top:546.3px" width="18" height="18" viewBox="0 0 18 18"><rect x="0.6" y="0.6" width="16.8" height="16.8" fill="#fff21a" stroke="#000" stroke-width="1.2"/><circle cx="5.3" cy="7.6" r="0.9" fill="#ffb020"/><circle cx="12.8" cy="7.6" r="0.9" fill="#ffb020"/><path d="M9 3.6 V12.6" stroke="#1a1a1a" stroke-width="3.3" stroke-linecap="round"/><path d="M9 4.1 V12.4" stroke="#f28a8a" stroke-width="1.7" stroke-linecap="round"/><circle cx="9" cy="13.3" r="2.2" fill="#1a1a1a"/><circle cx="9" cy="13.2" r="1.45" fill="#ff2a2a"/></svg><svg class="a" style="left:168.0px;top:546.3px" width="18" height="18" viewBox="0 0 18 18"><rect x="0.6" y="0.6" width="16.8" height="16.8" fill="#fff21a" stroke="#000" stroke-width="1.2"/><path d="M3.8 9.3 C4 6.5 6.5 5.2 9 5.2 C11.5 5.2 14 6.5 14.2 9.3 Z" fill="#000"/><path d="M9 9.3 V11.5" stroke="#000" stroke-width="0.8"/><polygon points="9,10.6 9.9,11.6 9,12.6 8.1,11.6" fill="#000"/></svg><div class="a" style="left:209px;top:566px;width:27px;height:20px;background:#2f7e3d"></div><div class="a" style="left:237px;top:566px;width:27px;height:20px;background:#2f7e3d"></div><div class="a" style="left:265px;top:566px;width:27px;height:20px;background:#2f7e3d"></div><div class="a" style="left:293px;top:566px;width:27px;height:20px;background:#2f7e3d"></div><div class="a" style="left:321px;top:566px;width:27px;height:20px;background:#2f7e3d"></div><div class="a" style="left:349px;top:566px;width:28px;height:20px;background:#2f7e3d"></div><div class="a" style="left:378px;top:566px;width:27px;height:20px;background:#2f7e3d"></div><div class="a" style="left:406px;top:566px;width:27px;height:20px;background:#2f7e3d"></div><div class="a" style="left:434px;top:566px;width:27px;height:20px;background:#2f7e3d"></div><div class="a" style="left:462px;top:566px;width:27px;height:20px;background:#2f7e3d"></div><div class="a" style="left:490px;top:566px;width:27px;height:20px;background:#2f7e3d"></div><div class="a" style="left:518px;top:566px;width:27px;height:20px;background:#2f7e3d"></div><div class="a" style="left:546px;top:566px;width:27px;height:20px;background:#2f7e3d"></div><div class="a" style="left:574px;top:566px;width:27px;height:20px;background:#fff000"></div><div class="a" style="left:574px;top:571.41px;width:27px;text-align:center;font-weight:bold;font-size:10.5px;line-height:10.5px">1</div><div class="a" style="left:602px;top:566px;width:27px;height:20px;background:#fff000"></div><div class="a" style="left:602px;top:571.41px;width:27px;text-align:center;font-weight:bold;font-size:10.5px;line-height:10.5px">1</div><div class="a" style="left:630px;top:566px;width:27px;height:20px;background:#fff000"></div><div class="a" style="left:630px;top:571.41px;width:27px;text-align:center;font-weight:bold;font-size:10.5px;line-height:10.5px">1</div><div class="a" style="left:658px;top:566px;width:27px;height:20px;background:#fff000"></div><div class="a" style="left:658px;top:571.41px;width:27px;text-align:center;font-weight:bold;font-size:10.5px;line-height:10.5px">1</div><div class="a" style="left:686px;top:566px;width:27px;height:20px;background:#fff000"></div><div class="a" style="left:686px;top:571.41px;width:27px;text-align:center;font-weight:bold;font-size:10.5px;line-height:10.5px">1</div><div class="a" style="left:714px;top:566px;width:27px;height:20px;background:#fff000"></div><div class="a" style="left:714px;top:571.41px;width:27px;text-align:center;font-weight:bold;font-size:10.5px;line-height:10.5px">1</div><div class="a" style="left:742px;top:566px;width:28px;height:20px;background:#fff000"></div><div class="a" style="left:742px;top:571.41px;width:28px;text-align:center;font-weight:bold;font-size:10.5px;line-height:10.5px">1</div><div class="a" style="left:771px;top:566px;width:27px;height:20px;background:#fff000"></div><div class="a" style="left:771px;top:571.41px;width:27px;text-align:center;font-weight:bold;font-size:10.5px;line-height:10.5px">1</div><div class="a" style="left:799px;top:566px;width:27px;height:20px;background:#fff000"></div><div class="a" style="left:799px;top:571.41px;width:27px;text-align:center;font-weight:bold;font-size:10.5px;line-height:10.5px">1</div><div class="a" style="left:827px;top:566px;width:27px;height:20px;background:#fff000"></div><div class="a" style="left:827px;top:571.41px;width:27px;text-align:center;font-weight:bold;font-size:10.5px;line-height:10.5px">1</div><div class="a" style="left:855px;top:566px;width:27px;height:20px;background:#2f7e3d"></div><div class="a" style="left:41.7px;top:571.21px;font-weight:bold;font-size:10.5px;line-height:10.5px;white-space:nowrap">Trenčiansky kraj</div><svg class="a" style="left:0;top:564.50px" width="36" height="21" viewBox="0 0 36 21"><rect x="11.9" y="9" width="11.3" height="2.9" fill="#1f4e8c"/><rect x="15.8" y="5.1" width="3.6" height="10.6" fill="#1f4e8c"/></svg><svg class="a" style="left:187.1px;top:567.6px" width="18" height="18" viewBox="0 0 18 18"><rect x="0.6" y="0.6" width="16.8" height="16.8" fill="#fff21a" stroke="#000" stroke-width="1.2"/><path d="M3.8 9.3 C4 6.5 6.5 5.2 9 5.2 C11.5 5.2 14 6.5 14.2 9.3 Z" fill="#000"/><path d="M9 9.3 V11.5" stroke="#000" stroke-width="0.8"/><polygon points="9,10.6 9.9,11.6 9,12.6 8.1,11.6" fill="#000"/></svg><div class="a" style="left:209px;top:587px;width:27px;height:20px;background:#2f7e3d"></div><div class="a" style="left:237px;top:587px;width:27px;height:20px;background:#2f7e3d"></div><div class="a" style="left:265px;top:587px;width:27px;height:20px;background:#2f7e3d"></div><div class="a" style="left:293px;top:587px;width:27px;height:20px;background:#2f7e3d"></div><div class="a" style="left:321px;top:587px;width:27px;height:20px;background:#2f7e3d"></div><div class="a" style="left:349px;top:587px;width:28px;height:20px;background:#2f7e3d"></div><div class="a" style="left:378px;top:587px;width:27px;height:20px;background:#2f7e3d"></div><div class="a" style="left:406px;top:587px;width:27px;height:20px;background:#2f7e3d"></div><div class="a" style="left:434px;top:587px;width:27px;height:20px;background:#2f7e3d"></div><div class="a" style="left:462px;top:587px;width:27px;height:20px;background:#2f7e3d"></div><div class="a" style="left:490px;top:587px;width:27px;height:20px;background:#2f7e3d"></div><div class="a" style="left:518px;top:587px;width:27px;height:20px;background:#2f7e3d"></div><div class="a" style="left:546px;top:587px;width:27px;height:20px;background:#2f7e3d"></div><div class="a" style="left:574px;top:587px;width:27px;height:20px;background:#fff000"></div><div class="a" style="left:574px;top:592.66px;width:27px;text-align:center;font-weight:bold;font-size:10.5px;line-height:10.5px">1</div><div class="a" style="left:602px;top:587px;width:27px;height:20px;background:#fff000"></div><div class="a" style="left:602px;top:592.66px;width:27px;text-align:center;font-weight:bold;font-size:10.5px;line-height:10.5px">1</div><div class="a" style="left:630px;top:587px;width:27px;height:20px;background:#fff000"></div><div class="a" style="left:630px;top:592.66px;width:27px;text-align:center;font-weight:bold;font-size:10.5px;line-height:10.5px">1</div><div class="a" style="left:658px;top:587px;width:27px;height:20px;background:#fff000"></div><div class="a" style="left:658px;top:592.66px;width:27px;text-align:center;font-weight:bold;font-size:10.5px;line-height:10.5px">1</div><div class="a" style="left:686px;top:587px;width:27px;height:20px;background:#fff000"></div><div class="a" style="left:686px;top:592.66px;width:27px;text-align:center;font-weight:bold;font-size:10.5px;line-height:10.5px">1</div><div class="a" style="left:714px;top:587px;width:27px;height:20px;background:#2f7e3d"></div><div class="a" style="left:742px;top:587px;width:28px;height:20px;background:#2f7e3d"></div><div class="a" style="left:771px;top:587px;width:27px;height:20px;background:#2f7e3d"></div><div class="a" style="left:799px;top:587px;width:27px;height:20px;background:#2f7e3d"></div><div class="a" style="left:827px;top:587px;width:27px;height:20px;background:#2f7e3d"></div><div class="a" style="left:855px;top:587px;width:27px;height:20px;background:#2f7e3d"></div><div class="a" style="left:41.7px;top:592.46px;font-weight:bold;font-size:10.5px;line-height:10.5px;white-space:nowrap">Košický kraj</div><svg class="a" style="left:0;top:585.75px" width="36" height="21" viewBox="0 0 36 21"><rect x="11.9" y="9" width="11.3" height="2.9" fill="#1f4e8c"/><rect x="15.8" y="5.1" width="3.6" height="10.6" fill="#1f4e8c"/></svg><svg class="a" style="left:187.1px;top:588.8px" width="18" height="18" viewBox="0 0 18 18"><rect x="0.6" y="0.6" width="16.8" height="16.8" fill="#fff21a" stroke="#000" stroke-width="1.2"/><circle cx="5.3" cy="7.6" r="0.9" fill="#ffb020"/><circle cx="12.8" cy="7.6" r="0.9" fill="#ffb020"/><path d="M9 3.6 V12.6" stroke="#1a1a1a" stroke-width="3.3" stroke-linecap="round"/><path d="M9 4.1 V12.4" stroke="#f28a8a" stroke-width="1.7" stroke-linecap="round"/><circle cx="9" cy="13.3" r="2.2" fill="#1a1a1a"/><circle cx="9" cy="13.2" r="1.45" fill="#ff2a2a"/></svg><div class="a" style="left:209px;top:608px;width:27px;height:21px;background:#2f7e3d"></div><div class="a" style="left:237px;top:608px;width:27px;height:21px;background:#2f7e3d"></div><div class="a" style="left:265px;top:608px;width:27px;height:21px;background:#2f7e3d"></div><div class="a" style="left:293px;top:608px;width:27px;height:21px;background:#2f7e3d"></div><div class="a" style="left:321px;top:608px;width:27px;height:21px;background:#2f7e3d"></div><div class="a" style="left:349px;top:608px;width:28px;height:21px;background:#2f7e3d"></div><div class="a" style="left:378px;top:608px;width:27px;height:21px;background:#2f7e3d"></div><div class="a" style="left:406px;top:608px;width:27px;height:21px;background:#2f7e3d"></div><div class="a" style="left:434px;top:608px;width:27px;height:21px;background:#2f7e3d"></div><div class="a" style="left:462px;top:608px;width:27px;height:21px;background:#2f7e3d"></div><div class="a" style="left:490px;top:608px;width:27px;height:21px;background:#2f7e3d"></div><div class="a" style="left:518px;top:608px;width:27px;height:21px;background:#2f7e3d"></div><div class="a" style="left:546px;top:608px;width:27px;height:21px;background:#2f7e3d"></div><div class="a" style="left:574px;top:608px;width:27px;height:21px;background:#fff000"></div><div class="a" style="left:574px;top:613.91px;width:27px;text-align:center;font-weight:bold;font-size:10.5px;line-height:10.5px">1</div><div class="a" style="left:602px;top:608px;width:27px;height:21px;background:#fff000"></div><div class="a" style="left:602px;top:613.91px;width:27px;text-align:center;font-weight:bold;font-size:10.5px;line-height:10.5px">1</div><div class="a" style="left:630px;top:608px;width:27px;height:21px;background:#fff000"></div><div class="a" style="left:630px;top:613.91px;width:27px;text-align:center;font-weight:bold;font-size:10.5px;line-height:10.5px">1</div><div class="a" style="left:658px;top:608px;width:27px;height:21px;background:#fff000"></div><div class="a" style="left:658px;top:613.91px;width:27px;text-align:center;font-weight:bold;font-size:10.5px;line-height:10.5px">1</div><div class="a" style="left:686px;top:608px;width:27px;height:21px;background:#fff000"></div><div class="a" style="left:686px;top:613.91px;width:27px;text-align:center;font-weight:bold;font-size:10.5px;line-height:10.5px">1</div><div class="a" style="left:714px;top:608px;width:27px;height:21px;background:#fff000"></div><div class="a" style="left:714px;top:613.91px;width:27px;text-align:center;font-weight:bold;font-size:10.5px;line-height:10.5px">1</div><div class="a" style="left:742px;top:608px;width:28px;height:21px;background:#fff000"></div><div class="a" style="left:742px;top:613.91px;width:28px;text-align:center;font-weight:bold;font-size:10.5px;line-height:10.5px">1</div><div class="a" style="left:771px;top:608px;width:27px;height:21px;background:#fff000"></div><div class="a" style="left:771px;top:613.91px;width:27px;text-align:center;font-weight:bold;font-size:10.5px;line-height:10.5px">1</div><div class="a" style="left:799px;top:608px;width:27px;height:21px;background:#fff000"></div><div class="a" style="left:799px;top:613.91px;width:27px;text-align:center;font-weight:bold;font-size:10.5px;line-height:10.5px">1</div><div class="a" style="left:827px;top:608px;width:27px;height:21px;background:#fff000"></div><div class="a" style="left:827px;top:613.91px;width:27px;text-align:center;font-weight:bold;font-size:10.5px;line-height:10.5px">1</div><div class="a" style="left:855px;top:608px;width:27px;height:21px;background:#2f7e3d"></div><div class="a" style="left:41.7px;top:613.71px;font-weight:bold;font-size:10.5px;line-height:10.5px;white-space:nowrap">Nitriansky kraj</div><svg class="a" style="left:0;top:607.00px" width="36" height="21" viewBox="0 0 36 21"><rect x="11.9" y="9" width="11.3" height="2.9" fill="#1f4e8c"/><rect x="15.8" y="5.1" width="3.6" height="10.6" fill="#1f4e8c"/></svg><svg class="a" style="left:187.1px;top:610.1px" width="18" height="18" viewBox="0 0 18 18"><rect x="0.6" y="0.6" width="16.8" height="16.8" fill="#fff21a" stroke="#000" stroke-width="1.2"/><circle cx="5.3" cy="7.6" r="0.9" fill="#ffb020"/><circle cx="12.8" cy="7.6" r="0.9" fill="#ffb020"/><path d="M9 3.6 V12.6" stroke="#1a1a1a" stroke-width="3.3" stroke-linecap="round"/><path d="M9 4.1 V12.4" stroke="#f28a8a" stroke-width="1.7" stroke-linecap="round"/><circle cx="9" cy="13.3" r="2.2" fill="#1a1a1a"/><circle cx="9" cy="13.2" r="1.45" fill="#ff2a2a"/></svg><svg class="a" style="left:168.0px;top:610.1px" width="18" height="18" viewBox="0 0 18 18"><rect x="0.6" y="0.6" width="16.8" height="16.8" fill="#fff21a" stroke="#000" stroke-width="1.2"/><path d="M3.8 9.3 C4 6.5 6.5 5.2 9 5.2 C11.5 5.2 14 6.5 14.2 9.3 Z" fill="#000"/><path d="M9 9.3 V11.5" stroke="#000" stroke-width="0.8"/><polygon points="9,10.6 9.9,11.6 9,12.6 8.1,11.6" fill="#000"/></svg><div class="a" style="left:209px;top:630px;width:27px;height:20px;background:#2f7e3d"></div><div class="a" style="left:237px;top:630px;width:27px;height:20px;background:#2f7e3d"></div><div class="a" style="left:265px;top:630px;width:27px;height:20px;background:#2f7e3d"></div><div class="a" style="left:293px;top:630px;width:27px;height:20px;background:#2f7e3d"></div><div class="a" style="left:321px;top:630px;width:27px;height:20px;background:#2f7e3d"></div><div class="a" style="left:349px;top:630px;width:28px;height:20px;background:#2f7e3d"></div><div class="a" style="left:378px;top:630px;width:27px;height:20px;background:#2f7e3d"></div><div class="a" style="left:406px;top:630px;width:27px;height:20px;background:#2f7e3d"></div><div class="a" style="left:434px;top:630px;width:27px;height:20px;background:#2f7e3d"></div><div class="a" style="left:462px;top:630px;width:27px;height:20px;background:#2f7e3d"></div><div class="a" style="left:490px;top:630px;width:27px;height:20px;background:#2f7e3d"></div><div class="a" style="left:518px;top:630px;width:27px;height:20px;background:#2f7e3d"></div><div class="a" style="left:546px;top:630px;width:27px;height:20px;background:#2f7e3d"></div><div class="a" style="left:574px;top:630px;width:27px;height:20px;background:#fff000"></div><div class="a" style="left:574px;top:635.16px;width:27px;text-align:center;font-weight:bold;font-size:10.5px;line-height:10.5px">1</div><div class="a" style="left:602px;top:630px;width:27px;height:20px;background:#fff000"></div><div class="a" style="left:602px;top:635.16px;width:27px;text-align:center;font-weight:bold;font-size:10.5px;line-height:10.5px">1</div><div class="a" style="left:630px;top:630px;width:27px;height:20px;background:#fff000"></div><div class="a" style="left:630px;top:635.16px;width:27px;text-align:center;font-weight:bold;font-size:10.5px;line-height:10.5px">1</div><div class="a" style="left:658px;top:630px;width:27px;height:20px;background:#fff000"></div><div class="a" style="left:658px;top:635.16px;width:27px;text-align:center;font-weight:bold;font-size:10.5px;line-height:10.5px">1</div><div class="a" style="left:686px;top:630px;width:27px;height:20px;background:#fff000"></div><div class="a" style="left:686px;top:635.16px;width:27px;text-align:center;font-weight:bold;font-size:10.5px;line-height:10.5px">1</div><div class="a" style="left:714px;top:630px;width:27px;height:20px;background:#fff000"></div><div class="a" style="left:714px;top:635.16px;width:27px;text-align:center;font-weight:bold;font-size:10.5px;line-height:10.5px">1</div><div class="a" style="left:742px;top:630px;width:28px;height:20px;background:#fff000"></div><div class="a" style="left:742px;top:635.16px;width:28px;text-align:center;font-weight:bold;font-size:10.5px;line-height:10.5px">1</div><div class="a" style="left:771px;top:630px;width:27px;height:20px;background:#fff000"></div><div class="a" style="left:771px;top:635.16px;width:27px;text-align:center;font-weight:bold;font-size:10.5px;line-height:10.5px">1</div><div class="a" style="left:799px;top:630px;width:27px;height:20px;background:#fff000"></div><div class="a" style="left:799px;top:635.16px;width:27px;text-align:center;font-weight:bold;font-size:10.5px;line-height:10.5px">1</div><div class="a" style="left:827px;top:630px;width:27px;height:20px;background:#fff000"></div><div class="a" style="left:827px;top:635.16px;width:27px;text-align:center;font-weight:bold;font-size:10.5px;line-height:10.5px">1</div><div class="a" style="left:855px;top:630px;width:27px;height:20px;background:#2f7e3d"></div><div class="a" style="left:41.7px;top:634.96px;font-weight:bold;font-size:10.5px;line-height:10.5px;white-space:nowrap">Trnavský kraj</div><svg class="a" style="left:0;top:628.25px" width="36" height="21" viewBox="0 0 36 21"><rect x="11.9" y="9" width="11.3" height="2.9" fill="#1f4e8c"/><rect x="15.8" y="5.1" width="3.6" height="10.6" fill="#1f4e8c"/></svg><svg class="a" style="left:187.1px;top:631.3px" width="18" height="18" viewBox="0 0 18 18"><rect x="0.6" y="0.6" width="16.8" height="16.8" fill="#fff21a" stroke="#000" stroke-width="1.2"/><path d="M3.8 9.3 C4 6.5 6.5 5.2 9 5.2 C11.5 5.2 14 6.5 14.2 9.3 Z" fill="#000"/><path d="M9 9.3 V11.5" stroke="#000" stroke-width="0.8"/><polygon points="9,10.6 9.9,11.6 9,12.6 8.1,11.6" fill="#000"/></svg><div class="a" style="left:209px;top:651px;width:27px;height:20px;background:#2f7e3d"></div><div class="a" style="left:237px;top:651px;width:27px;height:20px;background:#2f7e3d"></div><div class="a" style="left:265px;top:651px;width:27px;height:20px;background:#2f7e3d"></div><div class="a" style="left:293px;top:651px;width:27px;height:20px;background:#2f7e3d"></div><div class="a" style="left:321px;top:651px;width:27px;height:20px;background:#2f7e3d"></div><div class="a" style="left:349px;top:651px;width:28px;height:20px;background:#2f7e3d"></div><div class="a" style="left:378px;top:651px;width:27px;height:20px;background:#2f7e3d"></div><div class="a" style="left:406px;top:651px;width:27px;height:20px;background:#2f7e3d"></div><div class="a" style="left:434px;top:651px;width:27px;height:20px;background:#2f7e3d"></div><div class="a" style="left:462px;top:651px;width:27px;height:20px;background:#2f7e3d"></div><div class="a" style="left:490px;top:651px;width:27px;height:20px;background:#2f7e3d"></div><div class="a" style="left:518px;top:651px;width:27px;height:20px;background:#2f7e3d"></div><div class="a" style="left:546px;top:651px;width:27px;height:20px;background:#2f7e3d"></div><div class="a" style="left:574px;top:651px;width:27px;height:20px;background:#fff000"></div><div class="a" style="left:574px;top:656.41px;width:27px;text-align:center;font-weight:bold;font-size:10.5px;line-height:10.5px">1</div><div class="a" style="left:602px;top:651px;width:27px;height:20px;background:#fff000"></div><div class="a" style="left:602px;top:656.41px;width:27px;text-align:center;font-weight:bold;font-size:10.5px;line-height:10.5px">1</div><div class="a" style="left:630px;top:651px;width:27px;height:20px;background:#fff000"></div><div class="a" style="left:630px;top:656.41px;width:27px;text-align:center;font-weight:bold;font-size:10.5px;line-height:10.5px">1</div><div class="a" style="left:658px;top:651px;width:27px;height:20px;background:#fff000"></div><div class="a" style="left:658px;top:656.41px;width:27px;text-align:center;font-weight:bold;font-size:10.5px;line-height:10.5px">1</div><div class="a" style="left:686px;top:651px;width:27px;height:20px;background:#fff000"></div><div class="a" style="left:686px;top:656.41px;width:27px;text-align:center;font-weight:bold;font-size:10.5px;line-height:10.5px">1</div><div class="a" style="left:714px;top:651px;width:27px;height:20px;background:#fff000"></div><div class="a" style="left:714px;top:656.41px;width:27px;text-align:center;font-weight:bold;font-size:10.5px;line-height:10.5px">1</div><div class="a" style="left:742px;top:651px;width:28px;height:20px;background:#fff000"></div><div class="a" style="left:742px;top:656.41px;width:28px;text-align:center;font-weight:bold;font-size:10.5px;line-height:10.5px">1</div><div class="a" style="left:771px;top:651px;width:27px;height:20px;background:#fff000"></div><div class="a" style="left:771px;top:656.41px;width:27px;text-align:center;font-weight:bold;font-size:10.5px;line-height:10.5px">1</div><div class="a" style="left:799px;top:651px;width:27px;height:20px;background:#fff000"></div><div class="a" style="left:799px;top:656.41px;width:27px;text-align:center;font-weight:bold;font-size:10.5px;line-height:10.5px">1</div><div class="a" style="left:827px;top:651px;width:27px;height:20px;background:#fff000"></div><div class="a" style="left:827px;top:656.41px;width:27px;text-align:center;font-weight:bold;font-size:10.5px;line-height:10.5px">1</div><div class="a" style="left:855px;top:651px;width:27px;height:20px;background:#2f7e3d"></div><div class="a" style="left:41.7px;top:656.21px;font-weight:bold;font-size:10.5px;line-height:10.5px;white-space:nowrap">Prešovský kraj</div><svg class="a" style="left:0;top:649.50px" width="36" height="21" viewBox="0 0 36 21"><rect x="11.9" y="9" width="11.3" height="2.9" fill="#1f4e8c"/><rect x="15.8" y="5.1" width="3.6" height="10.6" fill="#1f4e8c"/></svg><svg class="a" style="left:187.1px;top:652.6px" width="18" height="18" viewBox="0 0 18 18"><rect x="0.6" y="0.6" width="16.8" height="16.8" fill="#fff21a" stroke="#000" stroke-width="1.2"/><path d="M3.8 9.3 C4 6.5 6.5 5.2 9 5.2 C11.5 5.2 14 6.5 14.2 9.3 Z" fill="#000"/><path d="M9 9.3 V11.5" stroke="#000" stroke-width="0.8"/><polygon points="9,10.6 9.9,11.6 9,12.6 8.1,11.6" fill="#000"/></svg><svg class="a" style="left:168.0px;top:652.6px" width="18" height="18" viewBox="0 0 18 18"><rect x="0.6" y="0.6" width="16.8" height="16.8" fill="#fff21a" stroke="#000" stroke-width="1.2"/><circle cx="5.3" cy="7.6" r="0.9" fill="#ffb020"/><circle cx="12.8" cy="7.6" r="0.9" fill="#ffb020"/><path d="M9 3.6 V12.6" stroke="#1a1a1a" stroke-width="3.3" stroke-linecap="round"/><path d="M9 4.1 V12.4" stroke="#f28a8a" stroke-width="1.7" stroke-linecap="round"/><circle cx="9" cy="13.3" r="2.2" fill="#1a1a1a"/><circle cx="9" cy="13.2" r="1.45" fill="#ff2a2a"/></svg><div class="a" style="left:209px;top:672px;width:27px;height:20px;background:#2f7e3d"></div><div class="a" style="left:237px;top:672px;width:27px;height:20px;background:#2f7e3d"></div><div class="a" style="left:265px;top:672px;width:27px;height:20px;background:#2f7e3d"></div><div class="a" style="left:293px;top:672px;width:27px;height:20px;background:#2f7e3d"></div><div class="a" style="left:321px;top:672px;width:27px;height:20px;background:#2f7e3d"></div><div class="a" style="left:349px;top:672px;width:28px;height:20px;background:#2f7e3d"></div><div class="a" style="left:378px;top:672px;width:27px;height:20px;background:#2f7e3d"></div><div class="a" style="left:406px;top:672px;width:27px;height:20px;background:#2f7e3d"></div><div class="a" style="left:434px;top:672px;width:27px;height:20px;background:#2f7e3d"></div><div class="a" style="left:462px;top:672px;width:27px;height:20px;background:#2f7e3d"></div><div class="a" style="left:490px;top:672px;width:27px;height:20px;background:#2f7e3d"></div><div class="a" style="left:518px;top:672px;width:27px;height:20px;background:#2f7e3d"></div><div class="a" style="left:546px;top:672px;width:27px;height:20px;background:#2f7e3d"></div><div class="a" style="left:574px;top:672px;width:27px;height:20px;background:#fff000"></div><div class="a" style="left:574px;top:677.66px;width:27px;text-align:center;font-weight:bold;font-size:10.5px;line-height:10.5px">1</div><div class="a" style="left:602px;top:672px;width:27px;height:20px;background:#fff000"></div><div class="a" style="left:602px;top:677.66px;width:27px;text-align:center;font-weight:bold;font-size:10.5px;line-height:10.5px">1</div><div class="a" style="left:630px;top:672px;width:27px;height:20px;background:#fff000"></div><div class="a" style="left:630px;top:677.66px;width:27px;text-align:center;font-weight:bold;font-size:10.5px;line-height:10.5px">1</div><div class="a" style="left:658px;top:672px;width:27px;height:20px;background:#fff000"></div><div class="a" style="left:658px;top:677.66px;width:27px;text-align:center;font-weight:bold;font-size:10.5px;line-height:10.5px">1</div><div class="a" style="left:686px;top:672px;width:27px;height:20px;background:#fff000"></div><div class="a" style="left:686px;top:677.66px;width:27px;text-align:center;font-weight:bold;font-size:10.5px;line-height:10.5px">1</div><div class="a" style="left:714px;top:672px;width:27px;height:20px;background:#fff000"></div><div class="a" style="left:714px;top:677.66px;width:27px;text-align:center;font-weight:bold;font-size:10.5px;line-height:10.5px">1</div><div class="a" style="left:742px;top:672px;width:28px;height:20px;background:#fff000"></div><div class="a" style="left:742px;top:677.66px;width:28px;text-align:center;font-weight:bold;font-size:10.5px;line-height:10.5px">1</div><div class="a" style="left:771px;top:672px;width:27px;height:20px;background:#fff000"></div><div class="a" style="left:771px;top:677.66px;width:27px;text-align:center;font-weight:bold;font-size:10.5px;line-height:10.5px">1</div><div class="a" style="left:799px;top:672px;width:27px;height:20px;background:#fff000"></div><div class="a" style="left:799px;top:677.66px;width:27px;text-align:center;font-weight:bold;font-size:10.5px;line-height:10.5px">1</div><div class="a" style="left:827px;top:672px;width:27px;height:20px;background:#fff000"></div><div class="a" style="left:827px;top:677.66px;width:27px;text-align:center;font-weight:bold;font-size:10.5px;line-height:10.5px">1</div><div class="a" style="left:855px;top:672px;width:27px;height:20px;background:#2f7e3d"></div><div class="a" style="left:41.7px;top:677.46px;font-weight:bold;font-size:10.5px;line-height:10.5px;white-space:nowrap">Žilinský kraj</div><svg class="a" style="left:0;top:670.75px" width="36" height="21" viewBox="0 0 36 21"><rect x="11.9" y="9" width="11.3" height="2.9" fill="#1f4e8c"/><rect x="15.8" y="5.1" width="3.6" height="10.6" fill="#1f4e8c"/></svg><svg class="a" style="left:187.1px;top:673.8px" width="18" height="18" viewBox="0 0 18 18"><rect x="0.6" y="0.6" width="16.8" height="16.8" fill="#fff21a" stroke="#000" stroke-width="1.2"/><path d="M3.8 9.3 C4 6.5 6.5 5.2 9 5.2 C11.5 5.2 14 6.5 14.2 9.3 Z" fill="#000"/><path d="M9 9.3 V11.5" stroke="#000" stroke-width="0.8"/><polygon points="9,10.6 9.9,11.6 9,12.6 8.1,11.6" fill="#000"/></svg><svg class="a" style="left:0;top:501px" width="36" height="21" viewBox="0 0 36 21"><rect x="5.5" y="8" width="11" height="2.9" fill="#1f4e8c"/><rect x="9.4" y="4.2" width="3.2" height="10.6" fill="#1f4e8c"/><rect x="18.7" y="8" width="11.6" height="2.9" fill="#1f4e8c"/></svg><div class="a" style="left:0;top:480px;width:883px;height:1px;background:#aaaab2"></div><div class="a" style="left:0;top:501px;width:883px;height:1px;background:#aaaab2"></div><div class="a" style="left:0;top:522px;width:883px;height:1px;background:#aaaab2"></div><div class="a" style="left:0;top:544px;width:883px;height:1px;background:#aaaab2"></div><div class="a" style="left:0;top:565px;width:883px;height:1px;background:#aaaab2"></div><div class="a" style="left:0;top:586px;width:883px;height:1px;background:#aaaab2"></div><div class="a" style="left:0;top:607px;width:883px;height:1px;background:#aaaab2"></div><div class="a" style="left:0;top:629px;width:883px;height:1px;background:#aaaab2"></div><div class="a" style="left:0;top:650px;width:883px;height:1px;background:#aaaab2"></div><div class="a" style="left:0;top:671px;width:883px;height:1px;background:#aaaab2"></div><div class="a" style="left:0;top:692px;width:883px;height:1px;background:#aaaab2"></div><div class="a" style="left:208px;top:480px;width:1px;height:213px;background:#aaaab2"></div><div class="a" style="left:236px;top:501px;width:1px;height:192px;background:#aaaab2"></div><div class="a" style="left:264px;top:501px;width:1px;height:192px;background:#aaaab2"></div><div class="a" style="left:292px;top:501px;width:1px;height:192px;background:#aaaab2"></div><div class="a" style="left:320px;top:501px;width:1px;height:192px;background:#aaaab2"></div><div class="a" style="left:348px;top:501px;width:1px;height:192px;background:#aaaab2"></div><div class="a" style="left:377px;top:501px;width:1px;height:192px;background:#aaaab2"></div><div class="a" style="left:405px;top:501px;width:1px;height:192px;background:#aaaab2"></div><div class="a" style="left:433px;top:501px;width:1px;height:192px;background:#aaaab2"></div><div class="a" style="left:461px;top:501px;width:1px;height:192px;background:#aaaab2"></div><div class="a" style="left:489px;top:501px;width:1px;height:192px;background:#aaaab2"></div><div class="a" style="left:517px;top:501px;width:1px;height:192px;background:#aaaab2"></div><div class="a" style="left:545px;top:501px;width:1px;height:192px;background:#aaaab2"></div><div class="a" style="left:573px;top:501px;width:1px;height:192px;background:#aaaab2"></div><div class="a" style="left:601px;top:501px;width:1px;height:192px;background:#aaaab2"></div><div class="a" style="left:629px;top:501px;width:1px;height:192px;background:#aaaab2"></div><div class="a" style="left:657px;top:501px;width:1px;height:192px;background:#aaaab2"></div><div class="a" style="left:685px;top:501px;width:1px;height:192px;background:#aaaab2"></div><div class="a" style="left:713px;top:501px;width:1px;height:192px;background:#aaaab2"></div><div class="a" style="left:741px;top:501px;width:1px;height:192px;background:#aaaab2"></div><div class="a" style="left:770px;top:501px;width:1px;height:192px;background:#aaaab2"></div><div class="a" style="left:798px;top:501px;width:1px;height:192px;background:#aaaab2"></div><div class="a" style="left:826px;top:501px;width:1px;height:192px;background:#aaaab2"></div><div class="a" style="left:854px;top:501px;width:1px;height:192px;background:#aaaab2"></div><div class="a" style="left:882px;top:480px;width:1px;height:213px;background:#aaaab2"></div><div class="a" style="left:161px;top:480px;width:1px;height:212px;background:#aaaab2"></div><div class="a" style="left:36px;top:501px;width:1px;height:191px;background:#aaaab2"></div><div class="a" style="left:5.6px;top:486.21px;font-size:10.5px;line-height:10.5px;font-weight:bold;color:#2a5594;white-space:nowrap">Región</div><div class="a" style="left:167.9px;top:486.21px;font-size:10.5px;line-height:10.5px;font-weight:bold;color:#2a5594;white-space:nowrap">Jav</div><div class="a" style="left:216.2px;top:486.21px;font-size:10.5px;line-height:10.5px;font-weight:bold;color:#2a5594;white-space:nowrap">Stupne v hodinových krokoch</div><div class="a" style="left:209px;top:507.11px;width:27px;text-align:center;font-size:10.5px;line-height:10.5px;font-weight:bold;color:#2a5594">0</div><div class="a" style="left:237px;top:507.11px;width:27px;text-align:center;font-size:10.5px;line-height:10.5px;font-weight:bold;color:#2a5594">1</div><div class="a" style="left:265px;top:507.11px;width:27px;text-align:center;font-size:10.5px;line-height:10.5px;font-weight:bold;color:#2a5594">2</div><div class="a" style="left:293px;top:507.11px;width:27px;text-align:center;font-size:10.5px;line-height:10.5px;font-weight:bold;color:#2a5594">3</div><div class="a" style="left:321px;top:507.11px;width:27px;text-align:center;font-size:10.5px;line-height:10.5px;font-weight:bold;color:#2a5594">4</div><div class="a" style="left:349px;top:507.11px;width:28px;text-align:center;font-size:10.5px;line-height:10.5px;font-weight:bold;color:#2a5594">5</div><div class="a" style="left:378px;top:507.11px;width:27px;text-align:center;font-size:10.5px;line-height:10.5px;font-weight:bold;color:#2a5594">6</div><div class="a" style="left:406px;top:507.11px;width:27px;text-align:center;font-size:10.5px;line-height:10.5px;font-weight:bold;color:#2a5594">7</div><div class="a" style="left:434px;top:507.11px;width:27px;text-align:center;font-size:10.5px;line-height:10.5px;font-weight:bold;color:#2a5594">8</div><div class="a" style="left:462px;top:507.11px;width:27px;text-align:center;font-size:10.5px;line-height:10.5px;font-weight:bold;color:#2a5594">9</div><div class="a" style="left:490px;top:507.11px;width:27px;text-align:center;font-size:10.5px;line-height:10.5px;font-weight:bold;color:#2a5594">10</div><div class="a" style="left:518px;top:507.11px;width:27px;text-align:center;font-size:10.5px;line-height:10.5px;font-weight:bold;color:#2a5594">11</div><div class="a" style="left:546px;top:507.11px;width:27px;text-align:center;font-size:10.5px;line-height:10.5px;font-weight:bold;color:#2a5594">12</div><div class="a" style="left:574px;top:507.11px;width:27px;text-align:center;font-size:10.5px;line-height:10.5px;font-weight:bold;color:#2a5594">13</div><div class="a" style="left:602px;top:507.11px;width:27px;text-align:center;font-size:10.5px;line-height:10.5px;font-weight:bold;color:#2a5594">14</div><div class="a" style="left:630px;top:507.11px;width:27px;text-align:center;font-size:10.5px;line-height:10.5px;font-weight:bold;color:#2a5594">15</div><div class="a" style="left:658px;top:507.11px;width:27px;text-align:center;font-size:10.5px;line-height:10.5px;font-weight:bold;color:#2a5594">16</div><div class="a" style="left:686px;top:507.11px;width:27px;text-align:center;font-size:10.5px;line-height:10.5px;font-weight:bold;color:#2a5594">17</div><div class="a" style="left:714px;top:507.11px;width:27px;text-align:center;font-size:10.5px;line-height:10.5px;font-weight:bold;color:#2a5594">18</div><div class="a" style="left:742px;top:507.11px;width:28px;text-align:center;font-size:10.5px;line-height:10.5px;font-weight:bold;color:#2a5594">19</div><div class="a" style="left:771px;top:507.11px;width:27px;text-align:center;font-size:10.5px;line-height:10.5px;font-weight:bold;color:#2a5594">20</div><div class="a" style="left:799px;top:507.11px;width:27px;text-align:center;font-size:10.5px;line-height:10.5px;font-weight:bold;color:#2a5594">21</div><div class="a" style="left:827px;top:507.11px;width:27px;text-align:center;font-size:10.5px;line-height:10.5px;font-weight:bold;color:#2a5594">22</div><div class="a" style="left:855px;top:507.11px;width:27px;text-align:center;font-size:10.5px;line-height:10.5px;font-weight:bold;color:#2a5594">23</div>
</body></html>
